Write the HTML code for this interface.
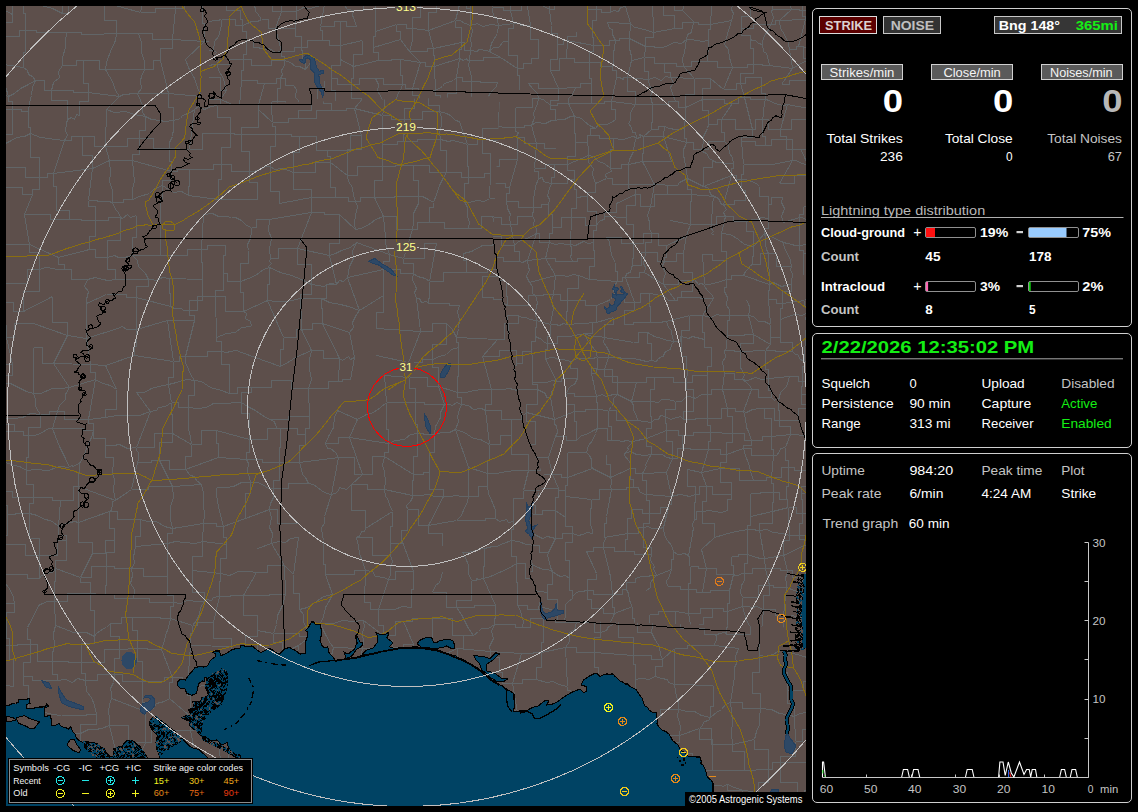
<!DOCTYPE html>
<html><head><meta charset="utf-8"><title>Lightning Map</title>
<style>
html,body{margin:0;padding:0;background:#000;overflow:hidden}
svg{display:block;font-family:"Liberation Sans",sans-serif}
</style></head><body>
<svg width="1138" height="812" viewBox="0 0 1138 812">
<rect width="1138" height="812" fill="#000"/>
<defs><clipPath id="mc"><rect x="6" y="6" width="800" height="800"/></clipPath></defs>
<g clip-path="url(#mc)" shape-rendering="crispEdges">
<rect x="6" y="6" width="800" height="800" fill="#5d4f4b"/>
<clipPath id="cf"><path d="M209.0,6.0 L806.0,6.0 L806.0,628.0 L547.0,620.0 L541.0,604.0 L530.0,578.0 L533.0,540.0 L532.0,503.0 L545.8,481.0 L531.0,446.5 L516.0,382.0 L493.0,239.0 L500.0,96.0 L209.0,105.0 Z"/></clipPath>
<clipPath id="cc"><path clip-rule="evenodd" d="M0,0H812V812H0Z M209.0,6.0 L806.0,6.0 L806.0,628.0 L547.0,620.0 L541.0,604.0 L530.0,578.0 L533.0,540.0 L532.0,503.0 L545.8,481.0 L531.0,446.5 L516.0,382.0 L493.0,239.0 L500.0,96.0 L209.0,105.0 Z"/></clipPath>
<path clip-path="url(#cc)" d="M-18.5,-2.5L-11.5,0.5L-1.5,5.5L3.5,9.5L12.5,14.5M-29.5,85.5L8.5,96.5M-29.5,106.5L-7.5,106.5L-7.5,109.5L12.5,109.5M-22.5,147.5L-10.5,147.5L-10.5,144.5L3.5,144.5M-14.5,271.5L-10.5,274.5L-3.5,278.5L0.5,278.5L3.5,283.5M-24.5,336.5L-1.5,336.5L-1.5,337.5L6.5,337.5M-27.5,358.5L-3.5,358.5L-3.5,364.5L12.5,364.5M-18.5,381.5L-12.5,382.5L-9.5,381.5L-3.5,381.5L1.5,382.5M-20.5,402.5L3.5,418.5M-29.5,432.5L-16.5,432.5L-16.5,431.5L14.5,431.5M-24.5,493.5L-9.5,493.5L-9.5,491.5L0.5,491.5M-25.5,574.5L3.5,574.5M-20.5,607.5L4.5,607.5L4.5,603.5L14.5,603.5M-16.5,622.5L-3.5,622.5L-3.5,629.5L6.5,629.5M-11.5,646.5L1.5,646.5L1.5,645.5L9.5,645.5M-22.5,685.5L-14.5,684.5L-4.5,684.5L6.5,685.5L13.5,686.5M-27.5,707.5L-16.5,707.5L-16.5,713.5L13.5,713.5M-29.5,738.5L-17.5,738.5L-17.5,733.5L3.5,733.5M-17.5,817.5L-14.5,815.5L-7.5,813.5L-2.5,810.5L0.5,809.5M7.5,-21.5L7.5,-10.5L12.5,-10.5L12.5,14.5M12.5,14.5L12.5,3.5L23.5,3.5L23.5,0.5M12.5,14.5L12.5,22.5L5.5,22.5L5.5,36.5M5.5,36.5L19.5,36.5L19.5,30.5L25.5,30.5M-2.5,63.5L23.5,67.5M-2.5,63.5L0.5,72.5L3.5,79.5L5.5,86.5L8.5,96.5M8.5,96.5L14.5,93.5L20.5,88.5L28.5,84.5L35.5,80.5M8.5,96.5L8.5,101.5L12.5,101.5L12.5,109.5M12.5,109.5L21.5,109.5L21.5,111.5L28.5,111.5M12.5,109.5L12.5,134.5L3.5,134.5L3.5,144.5M3.5,144.5L11.5,140.5L16.5,137.5L24.5,136.5L30.5,133.5M3.5,144.5L3.5,157.5L-3.5,157.5L-3.5,167.5M-3.5,167.5L25.5,167.5L25.5,177.5L39.5,177.5M0.5,187.5L22.5,187.5L22.5,194.5L32.5,194.5M-1.5,244.5L11.5,244.5L11.5,244.5L29.5,244.5M-1.5,244.5L-1.5,259.5L3.5,259.5L3.5,283.5M3.5,283.5L27.5,283.5L27.5,269.5L39.5,269.5M3.5,283.5L-2.5,302.5M-2.5,302.5L13.5,302.5L13.5,311.5L23.5,311.5M-2.5,302.5L-2.5,325.5L6.5,325.5L6.5,337.5M6.5,337.5L14.5,337.5L14.5,323.5L33.5,323.5M6.5,337.5L12.5,364.5M12.5,364.5L12.5,375.5L1.5,375.5L1.5,382.5M1.5,382.5L10.5,383.5L18.5,387.5L26.5,391.5L33.5,393.5M1.5,382.5L1.5,408.5L3.5,408.5L3.5,418.5M3.5,418.5L13.5,418.5L22.5,417.5L30.5,413.5L40.5,414.5M3.5,418.5L3.5,424.5L14.5,424.5L14.5,431.5M14.5,431.5L23.5,431.5L23.5,435.5L28.5,435.5M0.5,459.5L5.5,462.5L14.5,465.5L19.5,466.5L26.5,470.5M0.5,491.5L12.5,491.5L12.5,497.5L33.5,497.5M0.5,491.5L0.5,505.5L7.5,505.5L7.5,514.5M7.5,514.5L15.5,514.5L15.5,513.5L29.5,513.5M7.5,514.5L7.5,535.5L-3.5,535.5L-3.5,544.5M-3.5,544.5L25.5,544.5L25.5,555.5L39.5,555.5M3.5,574.5L27.5,574.5L27.5,578.5L39.5,578.5M3.5,574.5L4.5,582.5L9.5,588.5L13.5,597.5L14.5,603.5M14.5,603.5L14.5,612.5L6.5,612.5L6.5,629.5M6.5,629.5L6.5,638.5L9.5,638.5L9.5,645.5M9.5,645.5L17.5,645.5L17.5,644.5L30.5,644.5M9.5,645.5L9.5,659.5L13.5,659.5L13.5,686.5M13.5,713.5L15.5,714.5L22.5,713.5L22.5,712.5L28.5,711.5M13.5,713.5L13.5,723.5L3.5,723.5L3.5,733.5M3.5,733.5L-1.5,764.5M-1.5,764.5L9.5,765.5L18.5,766.5L28.5,770.5L41.5,771.5M-2.5,780.5L10.5,780.5L20.5,784.5L31.5,784.5L41.5,786.5M-2.5,780.5L-2.5,787.5L0.5,794.5L0.5,801.5L0.5,809.5M23.5,0.5L33.5,2.5L41.5,5.5L52.5,8.5L62.5,13.5M23.5,0.5L23.5,13.5L25.5,13.5L25.5,30.5M25.5,30.5L36.5,30.5L36.5,32.5L66.5,32.5M25.5,30.5L25.5,52.5L23.5,52.5L23.5,67.5M23.5,67.5L27.5,70.5L28.5,74.5L32.5,76.5L35.5,80.5M35.5,80.5L44.5,80.5L44.5,90.5L51.5,90.5M35.5,80.5L32.5,87.5L31.5,95.5L29.5,102.5L28.5,111.5M28.5,111.5L28.5,127.5L30.5,127.5L30.5,133.5M30.5,133.5L40.5,137.5L48.5,138.5L54.5,139.5L64.5,140.5M30.5,133.5L30.5,157.5L39.5,157.5L39.5,177.5M39.5,177.5L47.5,177.5L47.5,173.5L53.5,173.5M39.5,177.5L39.5,189.5L32.5,189.5L32.5,194.5M32.5,194.5L24.5,214.5M24.5,214.5L50.5,214.5L50.5,219.5L69.5,219.5M24.5,214.5L29.5,244.5M29.5,244.5L58.5,257.5M29.5,244.5L29.5,252.5L39.5,252.5L39.5,269.5M39.5,269.5L45.5,267.5L53.5,268.5L56.5,269.5L64.5,269.5M39.5,269.5L39.5,291.5L23.5,291.5L23.5,311.5M23.5,311.5L52.5,296.5M33.5,323.5L67.5,335.5M33.5,347.5L42.5,347.5L42.5,363.5L53.5,363.5M33.5,347.5L33.5,393.5M33.5,393.5L40.5,393.5L52.5,388.5L61.5,388.5L69.5,387.5M33.5,393.5L35.5,399.5L35.5,405.5L36.5,408.5L40.5,414.5M40.5,414.5L49.5,414.5L49.5,411.5L57.5,411.5M40.5,414.5L40.5,427.5L28.5,427.5L28.5,435.5M28.5,435.5L34.5,435.5L40.5,433.5L48.5,428.5L52.5,428.5M28.5,435.5L28.5,457.5L26.5,457.5L26.5,470.5M26.5,470.5L35.5,469.5L48.5,470.5L59.5,466.5L69.5,467.5M26.5,470.5L26.5,484.5L33.5,484.5L33.5,497.5M33.5,497.5L52.5,497.5L52.5,500.5L60.5,500.5M33.5,497.5L33.5,503.5L29.5,503.5L29.5,513.5M29.5,513.5L37.5,515.5L42.5,518.5L52.5,521.5L58.5,526.5M29.5,513.5L29.5,538.5L39.5,538.5L39.5,555.5M39.5,555.5L57.5,555.5L57.5,540.5L66.5,540.5M39.5,555.5L39.5,578.5M39.5,578.5L41.5,575.5L46.5,573.5L52.5,572.5L55.5,568.5M39.5,604.5L43.5,603.5L46.5,601.5L52.5,601.5L54.5,601.5M39.5,604.5L27.5,627.5M27.5,627.5L27.5,639.5L30.5,639.5L30.5,644.5M30.5,644.5L37.5,644.5L37.5,661.5L52.5,661.5M30.5,644.5L30.5,662.5L23.5,662.5L23.5,676.5M23.5,676.5L32.5,676.5L32.5,680.5L57.5,680.5M23.5,676.5L23.5,685.5L28.5,685.5L28.5,711.5M28.5,711.5L34.5,711.5L45.5,712.5L52.5,714.5L61.5,715.5M28.5,711.5L41.5,733.5M41.5,733.5L47.5,734.5L50.5,739.5L55.5,741.5L58.5,743.5M41.5,733.5L41.5,771.5M41.5,771.5L53.5,771.5L53.5,762.5L60.5,762.5M41.5,771.5L42.5,774.5L42.5,779.5L41.5,783.5L41.5,786.5M41.5,786.5L60.5,779.5M41.5,786.5L41.5,796.5L27.5,796.5L27.5,810.5M27.5,810.5L35.5,809.5L42.5,809.5L50.5,808.5L58.5,809.5M54.5,-26.5L54.5,-7.5L62.5,-7.5L62.5,13.5M62.5,13.5L68.5,13.5L68.5,5.5L80.5,5.5M66.5,32.5L81.5,32.5L81.5,34.5L91.5,34.5M66.5,32.5L65.5,42.5L65.5,47.5L62.5,57.5L62.5,65.5M62.5,65.5L76.5,65.5L76.5,60.5L83.5,60.5M62.5,65.5L58.5,71.5L59.5,77.5L53.5,82.5L51.5,90.5M51.5,90.5L73.5,90.5L73.5,92.5L88.5,92.5M51.5,90.5L51.5,100.5L67.5,100.5L67.5,119.5M67.5,119.5L71.5,117.5L74.5,119.5L76.5,114.5L79.5,115.5M67.5,119.5L66.5,123.5L65.5,130.5L67.5,135.5L64.5,140.5M64.5,140.5L71.5,140.5L71.5,136.5L82.5,136.5M64.5,140.5L53.5,173.5M53.5,173.5L92.5,168.5M53.5,173.5L53.5,186.5L56.5,186.5L56.5,200.5M56.5,200.5L56.5,210.5L69.5,210.5L69.5,219.5M69.5,219.5L81.5,219.5L81.5,220.5L95.5,220.5M58.5,257.5L89.5,249.5M58.5,257.5L58.5,264.5L64.5,264.5L64.5,269.5M64.5,269.5L71.5,269.5L71.5,279.5L87.5,279.5M52.5,296.5L52.5,322.5L67.5,322.5L67.5,335.5M67.5,335.5L86.5,338.5M67.5,335.5L53.5,363.5M53.5,363.5L90.5,364.5M53.5,363.5L69.5,387.5M69.5,387.5L95.5,379.5M69.5,387.5L65.5,394.5L65.5,399.5L59.5,405.5L57.5,411.5M57.5,411.5L64.5,411.5L64.5,419.5L88.5,419.5M57.5,411.5L52.5,428.5M52.5,428.5L83.5,428.5L83.5,430.5L93.5,430.5M52.5,428.5L55.5,436.5L59.5,446.5L65.5,458.5L69.5,467.5M69.5,467.5L71.5,465.5L73.5,466.5L78.5,463.5L79.5,463.5M60.5,500.5L73.5,500.5L73.5,486.5L78.5,486.5M60.5,500.5L58.5,526.5M58.5,526.5L63.5,524.5L70.5,522.5L74.5,521.5L78.5,522.5M58.5,526.5L58.5,535.5L66.5,535.5L66.5,540.5M66.5,540.5L66.5,560.5L55.5,560.5L55.5,568.5M55.5,568.5L80.5,577.5M55.5,568.5L55.5,581.5L54.5,581.5L54.5,601.5M54.5,601.5L67.5,601.5L67.5,593.5L90.5,593.5M54.5,601.5L55.5,625.5M55.5,625.5L63.5,628.5L73.5,632.5L86.5,632.5L94.5,636.5M55.5,625.5L53.5,633.5L54.5,645.5L52.5,653.5L52.5,661.5M52.5,661.5L68.5,661.5L68.5,662.5L81.5,662.5M52.5,661.5L52.5,674.5L57.5,674.5L57.5,680.5M57.5,680.5L65.5,679.5L72.5,682.5L77.5,678.5L85.5,680.5M61.5,715.5L86.5,715.5L86.5,714.5L96.5,714.5M58.5,743.5L65.5,743.5L65.5,733.5L80.5,733.5M58.5,743.5L58.5,751.5L60.5,751.5L60.5,762.5M60.5,762.5L87.5,758.5M60.5,762.5L58.5,765.5L61.5,771.5L58.5,775.5L60.5,779.5M60.5,779.5L66.5,779.5L66.5,785.5L81.5,785.5M58.5,809.5L81.5,809.5L81.5,806.5L91.5,806.5M77.5,-15.5L77.5,-5.5L80.5,-5.5L80.5,5.5M80.5,5.5L104.5,2.5M91.5,34.5L116.5,33.5M83.5,60.5L99.5,60.5L99.5,69.5L105.5,69.5M83.5,60.5L83.5,83.5L88.5,83.5L88.5,92.5M88.5,92.5L119.5,96.5M88.5,92.5L88.5,101.5L79.5,101.5L79.5,115.5M82.5,136.5L94.5,136.5L94.5,146.5L105.5,146.5M82.5,136.5L82.5,155.5L92.5,155.5L92.5,168.5M92.5,168.5L109.5,160.5M92.5,168.5L88.5,200.5M88.5,200.5L95.5,200.5L99.5,201.5L108.5,201.5L112.5,202.5M88.5,200.5L88.5,206.5L95.5,206.5L95.5,220.5M95.5,220.5L108.5,220.5L108.5,217.5L120.5,217.5M95.5,220.5L95.5,236.5L89.5,236.5L89.5,249.5M89.5,249.5L95.5,249.5L95.5,257.5L107.5,257.5M87.5,279.5L95.5,277.5L102.5,279.5L108.5,280.5L115.5,279.5M87.5,279.5L84.5,286.5L88.5,291.5L86.5,299.5L86.5,303.5M86.5,303.5L106.5,294.5M86.5,303.5L86.5,324.5L86.5,324.5L86.5,338.5M86.5,338.5L117.5,328.5M86.5,338.5L90.5,364.5M90.5,364.5L105.5,365.5M90.5,364.5L90.5,372.5L95.5,372.5L95.5,379.5M95.5,379.5L100.5,382.5L106.5,384.5L110.5,385.5L116.5,389.5M95.5,379.5L88.5,419.5M88.5,419.5L105.5,417.5M88.5,419.5L88.5,423.5L93.5,423.5L93.5,430.5M93.5,430.5L93.5,438.5L105.5,438.5L105.5,445.5M93.5,430.5L91.5,437.5L86.5,448.5L84.5,454.5L79.5,463.5M79.5,463.5L79.5,473.5L78.5,473.5L78.5,486.5M78.5,486.5L115.5,500.5M78.5,486.5L78.5,502.5L78.5,502.5L78.5,522.5M78.5,522.5L109.5,511.5M78.5,522.5L78.5,542.5L92.5,542.5L92.5,553.5M92.5,553.5L105.5,553.5L105.5,540.5L114.5,540.5M92.5,553.5L80.5,577.5M80.5,577.5L91.5,577.5L91.5,566.5L106.5,566.5M80.5,577.5L80.5,582.5L90.5,582.5L90.5,593.5M90.5,593.5L95.5,593.5L95.5,594.5L105.5,594.5M90.5,593.5L90.5,610.5L94.5,610.5L94.5,636.5M94.5,636.5L96.5,633.5L103.5,628.5L106.5,627.5L110.5,623.5M94.5,636.5L94.5,643.5L81.5,643.5L81.5,662.5M81.5,662.5L104.5,662.5L104.5,649.5L119.5,649.5M81.5,662.5L81.5,673.5L85.5,673.5L85.5,680.5M85.5,680.5L97.5,680.5L97.5,674.5L114.5,674.5M85.5,680.5L86.5,691.5L91.5,697.5L94.5,705.5L96.5,714.5M96.5,714.5L96.5,724.5L80.5,724.5L80.5,733.5M80.5,733.5L88.5,729.5L95.5,729.5L101.5,728.5L109.5,725.5M80.5,733.5L80.5,751.5L87.5,751.5L87.5,758.5M87.5,758.5L103.5,758.5L103.5,762.5L118.5,762.5M87.5,758.5L81.5,785.5M81.5,785.5L88.5,785.5L88.5,788.5L107.5,788.5M81.5,785.5L91.5,806.5M91.5,806.5L97.5,805.5L105.5,808.5L113.5,806.5L122.5,808.5M104.5,2.5L140.5,12.5M104.5,2.5L104.5,20.5L116.5,20.5L116.5,33.5M116.5,33.5L138.5,33.5M116.5,33.5L115.5,40.5L110.5,51.5L106.5,62.5L105.5,69.5M105.5,69.5L121.5,69.5L121.5,69.5L144.5,69.5M105.5,69.5L109.5,76.5L112.5,81.5L115.5,90.5L119.5,96.5M119.5,96.5L123.5,94.5L126.5,94.5L132.5,93.5L137.5,93.5M119.5,96.5L106.5,109.5M106.5,109.5L114.5,112.5L125.5,111.5L134.5,114.5L145.5,116.5M106.5,109.5L105.5,146.5M105.5,146.5L127.5,146.5L127.5,138.5L139.5,138.5M105.5,146.5L109.5,160.5M109.5,160.5L132.5,160.5M109.5,160.5L110.5,172.5L109.5,181.5L112.5,190.5L112.5,202.5M112.5,202.5L123.5,202.5L123.5,199.5L132.5,199.5M112.5,202.5L114.5,207.5L116.5,210.5L118.5,212.5L120.5,217.5M120.5,217.5L122.5,218.5L127.5,214.5L130.5,217.5L136.5,215.5M120.5,217.5L120.5,240.5L107.5,240.5L107.5,257.5M107.5,257.5L114.5,255.5L118.5,257.5L124.5,257.5L132.5,255.5M107.5,257.5L107.5,269.5L115.5,269.5L115.5,279.5M115.5,279.5L148.5,279.5M106.5,294.5L126.5,294.5L126.5,297.5L136.5,297.5M117.5,328.5L122.5,326.5L126.5,329.5L131.5,329.5L136.5,329.5M105.5,365.5L134.5,355.5M105.5,365.5L116.5,389.5M116.5,389.5L116.5,409.5L105.5,409.5L105.5,417.5M105.5,417.5L117.5,415.5L127.5,415.5L139.5,415.5L150.5,411.5M105.5,445.5L113.5,445.5L119.5,444.5L127.5,448.5L136.5,447.5M105.5,445.5L105.5,457.5L113.5,457.5L113.5,461.5M113.5,461.5L112.5,473.5L114.5,479.5L113.5,490.5L115.5,500.5M115.5,500.5L131.5,489.5M115.5,500.5L112.5,501.5L112.5,504.5L111.5,510.5L109.5,511.5M109.5,511.5L117.5,511.5L117.5,519.5L140.5,519.5M109.5,511.5L109.5,528.5L114.5,528.5L114.5,540.5M114.5,540.5L114.5,552.5L106.5,552.5L106.5,566.5M106.5,566.5L114.5,566.5L114.5,568.5L131.5,568.5M106.5,566.5L106.5,585.5L105.5,585.5L105.5,594.5M105.5,594.5L114.5,594.5L114.5,598.5L133.5,598.5M110.5,623.5L121.5,623.5L121.5,617.5L132.5,617.5M110.5,623.5L110.5,636.5L119.5,636.5L119.5,649.5M119.5,649.5L137.5,648.5M119.5,649.5L119.5,658.5L114.5,658.5L114.5,674.5M114.5,674.5L122.5,674.5L122.5,681.5L142.5,681.5M114.5,674.5L113.5,682.5L110.5,688.5L111.5,693.5L111.5,698.5M111.5,698.5L145.5,711.5M111.5,698.5L109.5,704.5L108.5,711.5L109.5,718.5L109.5,725.5M109.5,725.5L128.5,725.5L128.5,742.5L145.5,742.5M109.5,725.5L118.5,762.5M118.5,762.5L138.5,758.5M107.5,788.5L150.5,782.5M107.5,788.5L107.5,799.5L122.5,799.5L122.5,808.5M122.5,808.5L127.5,812.5L133.5,815.5L137.5,817.5L145.5,818.5M147.5,-22.5L140.5,12.5M140.5,12.5L155.5,12.5L155.5,8.5L175.5,8.5M138.5,33.5L152.5,33.5L152.5,39.5L172.5,39.5M138.5,33.5L141.5,42.5L141.5,52.5L144.5,61.5L144.5,69.5M144.5,69.5L153.5,69.5L153.5,60.5L160.5,60.5M144.5,69.5L141.5,76.5L140.5,80.5L141.5,88.5L137.5,93.5M137.5,93.5L157.5,93.5L157.5,93.5L168.5,93.5M137.5,93.5L140.5,100.5L142.5,105.5L142.5,112.5L145.5,116.5M145.5,116.5L151.5,119.5L159.5,120.5L165.5,121.5L173.5,120.5M145.5,116.5L145.5,130.5L139.5,130.5L139.5,138.5M139.5,138.5L153.5,138.5L153.5,148.5L169.5,148.5M139.5,138.5L139.5,154.5L132.5,154.5L132.5,160.5M132.5,160.5L171.5,171.5M132.5,160.5L133.5,171.5L134.5,181.5L132.5,188.5L132.5,199.5M132.5,199.5L139.5,196.5L149.5,193.5L153.5,189.5L162.5,185.5M136.5,215.5L136.5,237.5L132.5,237.5L132.5,255.5M132.5,255.5L142.5,255.5L142.5,255.5L160.5,255.5M132.5,255.5L137.5,260.5L138.5,266.5L145.5,273.5L148.5,279.5M148.5,279.5L151.5,279.5L156.5,280.5L162.5,277.5L169.5,278.5M148.5,279.5L148.5,286.5L136.5,286.5L136.5,297.5M136.5,297.5L170.5,306.5M136.5,297.5L136.5,313.5L136.5,313.5L136.5,329.5M136.5,329.5L167.5,320.5M136.5,329.5L136.5,346.5L134.5,346.5L134.5,355.5M134.5,355.5L173.5,361.5M136.5,392.5L144.5,392.5L151.5,388.5L158.5,386.5L168.5,384.5M136.5,392.5L150.5,411.5M150.5,411.5L156.5,410.5L158.5,407.5L165.5,406.5L171.5,402.5M150.5,411.5L136.5,447.5M136.5,447.5L154.5,447.5L154.5,433.5L172.5,433.5M136.5,447.5L136.5,450.5L138.5,452.5L138.5,459.5L137.5,462.5M137.5,462.5L151.5,462.5L151.5,460.5L159.5,460.5M137.5,462.5L131.5,489.5M131.5,489.5L148.5,489.5L148.5,486.5L172.5,486.5M140.5,519.5L147.5,521.5L156.5,521.5L164.5,526.5L172.5,528.5M140.5,519.5L140.5,536.5L135.5,536.5L135.5,546.5M135.5,546.5L167.5,543.5M135.5,546.5L134.5,552.5L133.5,556.5L134.5,563.5L131.5,568.5M131.5,568.5L143.5,568.5L143.5,576.5L167.5,576.5M131.5,568.5L132.5,575.5L130.5,583.5L134.5,589.5L133.5,598.5M133.5,598.5L149.5,598.5L149.5,602.5L173.5,602.5M132.5,617.5L160.5,617.5L160.5,618.5L170.5,618.5M132.5,617.5L132.5,630.5L137.5,630.5L137.5,648.5M137.5,648.5L147.5,648.5L147.5,649.5L161.5,649.5M137.5,648.5L137.5,661.5L142.5,661.5L142.5,681.5M142.5,681.5L164.5,681.5L164.5,677.5L172.5,677.5M142.5,681.5L142.5,702.5L145.5,702.5L145.5,711.5M145.5,711.5L152.5,709.5L156.5,703.5L164.5,701.5L169.5,698.5M145.5,711.5L145.5,742.5M145.5,742.5L151.5,742.5L151.5,730.5L159.5,730.5M145.5,742.5L138.5,758.5M138.5,758.5L171.5,765.5M138.5,758.5L139.5,765.5L144.5,769.5L149.5,775.5L150.5,782.5M150.5,782.5L161.5,782.5L161.5,784.5L171.5,784.5M150.5,782.5L145.5,818.5M159.5,-14.5L159.5,-4.5L175.5,-4.5L175.5,8.5M175.5,8.5L184.5,8.5L184.5,0.5L202.5,0.5M175.5,8.5L172.5,39.5M172.5,39.5L204.5,41.5M172.5,39.5L172.5,48.5L160.5,48.5L160.5,60.5M160.5,60.5L168.5,93.5M168.5,93.5L201.5,96.5M168.5,93.5L168.5,107.5L173.5,107.5L173.5,120.5M173.5,120.5L180.5,118.5L182.5,115.5L190.5,112.5L194.5,109.5M173.5,120.5L173.5,128.5L172.5,136.5L169.5,142.5L169.5,148.5M169.5,148.5L189.5,149.5M169.5,148.5L169.5,161.5L171.5,161.5L171.5,171.5M171.5,171.5L177.5,171.5L177.5,169.5L189.5,169.5M171.5,171.5L171.5,180.5L162.5,180.5L162.5,185.5M162.5,185.5L168.5,189.5L173.5,192.5L181.5,191.5L188.5,195.5M162.5,185.5L162.5,198.5L160.5,198.5L160.5,219.5M160.5,219.5L160.5,255.5M160.5,255.5L187.5,255.5L187.5,249.5L201.5,249.5M169.5,278.5L202.5,279.5M169.5,278.5L169.5,293.5L170.5,293.5L170.5,306.5M170.5,306.5L174.5,308.5L181.5,308.5L183.5,310.5L189.5,310.5M167.5,320.5L175.5,320.5L175.5,320.5L194.5,320.5M167.5,320.5L173.5,361.5M173.5,361.5L179.5,361.5L179.5,356.5L185.5,356.5M173.5,361.5L173.5,377.5L168.5,377.5L168.5,384.5M168.5,384.5L176.5,382.5L182.5,380.5L187.5,379.5L194.5,380.5M168.5,384.5L171.5,402.5M171.5,402.5L178.5,402.5L178.5,407.5L188.5,407.5M171.5,402.5L171.5,414.5L172.5,414.5L172.5,433.5M172.5,433.5L191.5,444.5M172.5,433.5L172.5,442.5L159.5,442.5L159.5,460.5M159.5,460.5L169.5,460.5L169.5,469.5L185.5,469.5M159.5,460.5L172.5,486.5M172.5,486.5L201.5,484.5M172.5,486.5L173.5,497.5L170.5,506.5L170.5,519.5L172.5,528.5M172.5,528.5L203.5,523.5M172.5,528.5L172.5,533.5L167.5,533.5L167.5,543.5M167.5,543.5L175.5,541.5L184.5,542.5L195.5,543.5L202.5,541.5M167.5,543.5L167.5,553.5L167.5,553.5L167.5,576.5M167.5,576.5L167.5,595.5L173.5,595.5L173.5,602.5M173.5,602.5L180.5,603.5L187.5,600.5L197.5,601.5L204.5,601.5M173.5,602.5L173.5,606.5L170.5,606.5L170.5,618.5M170.5,618.5L192.5,625.5M170.5,618.5L168.5,627.5L165.5,635.5L164.5,640.5L161.5,649.5M161.5,649.5L172.5,677.5M172.5,677.5L182.5,677.5L182.5,687.5L187.5,687.5M172.5,677.5L172.5,682.5L169.5,682.5L169.5,698.5M169.5,698.5L190.5,716.5M159.5,730.5L190.5,730.5M159.5,730.5L159.5,750.5L171.5,750.5L171.5,765.5M171.5,765.5L188.5,765.5L188.5,755.5L195.5,755.5M171.5,765.5L171.5,776.5L171.5,776.5L171.5,784.5M171.5,784.5L171.5,801.5L168.5,801.5L168.5,815.5M202.5,0.5L219.5,0.5L219.5,6.5L230.5,6.5M202.5,0.5L202.5,23.5L204.5,23.5L204.5,41.5M204.5,41.5L211.5,41.5L211.5,24.5L226.5,24.5M204.5,41.5L185.5,59.5M185.5,59.5L188.5,67.5L194.5,78.5L197.5,87.5L201.5,96.5M194.5,109.5L198.5,106.5L204.5,109.5L210.5,106.5L217.5,105.5M194.5,109.5L189.5,149.5M189.5,149.5L202.5,149.5L202.5,133.5L230.5,133.5M189.5,169.5L213.5,169.5L213.5,164.5L221.5,164.5M189.5,169.5L189.5,186.5L188.5,186.5L188.5,195.5M188.5,195.5L218.5,199.5M203.5,214.5L212.5,213.5L218.5,216.5L225.5,216.5L231.5,217.5M203.5,214.5L201.5,249.5M201.5,249.5L207.5,249.5L207.5,245.5L225.5,245.5M201.5,249.5L201.5,262.5L202.5,262.5L202.5,279.5M202.5,279.5L202.5,300.5L189.5,300.5L189.5,310.5M189.5,310.5L197.5,310.5L197.5,296.5L215.5,296.5M189.5,310.5L189.5,315.5L194.5,315.5L194.5,320.5M194.5,320.5L185.5,356.5M185.5,356.5L207.5,356.5L207.5,351.5L221.5,351.5M185.5,356.5L185.5,362.5L188.5,369.5L190.5,374.5L194.5,380.5M194.5,380.5L201.5,381.5L210.5,387.5L221.5,390.5L229.5,393.5M194.5,380.5L194.5,395.5L188.5,395.5L188.5,407.5M188.5,407.5L197.5,408.5L206.5,407.5L213.5,403.5L221.5,403.5M188.5,407.5L188.5,418.5L188.5,428.5L190.5,436.5L191.5,444.5M191.5,444.5L201.5,444.5L201.5,430.5L216.5,430.5M191.5,444.5L191.5,456.5L185.5,456.5L185.5,469.5M185.5,469.5L218.5,457.5M185.5,469.5L190.5,475.5L194.5,476.5L196.5,480.5L201.5,484.5M201.5,484.5L203.5,493.5L203.5,504.5L204.5,514.5L203.5,523.5M203.5,523.5L216.5,523.5L216.5,526.5L223.5,526.5M203.5,523.5L202.5,541.5M202.5,541.5L226.5,544.5M202.5,541.5L202.5,556.5L192.5,556.5L192.5,570.5M192.5,570.5L220.5,573.5M192.5,570.5L192.5,592.5L204.5,592.5L204.5,601.5M204.5,601.5L206.5,599.5L211.5,600.5L213.5,597.5L219.5,596.5M204.5,601.5L200.5,607.5L199.5,614.5L196.5,620.5L192.5,625.5M192.5,625.5L197.5,625.5L197.5,622.5L213.5,622.5M192.5,625.5L192.5,633.5L190.5,633.5L190.5,645.5M190.5,645.5L231.5,646.5M190.5,645.5L187.5,687.5M187.5,687.5L222.5,683.5M187.5,687.5L187.5,695.5L190.5,695.5L190.5,716.5M190.5,716.5L190.5,720.5L190.5,720.5L190.5,730.5M190.5,730.5L197.5,729.5L204.5,728.5L209.5,729.5L217.5,730.5M190.5,730.5L195.5,755.5M195.5,755.5L220.5,760.5M192.5,797.5L218.5,797.5L218.5,795.5L230.5,795.5M202.5,822.5L220.5,822.5L220.5,806.5L229.5,806.5M224.5,-12.5L224.5,-6.5L230.5,-6.5L230.5,6.5M230.5,6.5L245.5,6.5L245.5,5.5L256.5,5.5M226.5,89.5L217.5,105.5M217.5,105.5L217.5,117.5L230.5,117.5L230.5,133.5M230.5,133.5L234.5,133.5L234.5,134.5L241.5,134.5M230.5,133.5L230.5,147.5L221.5,147.5L221.5,164.5M221.5,164.5L231.5,164.5L231.5,171.5L249.5,171.5M221.5,164.5L221.5,179.5L218.5,179.5L218.5,199.5M218.5,199.5L245.5,199.5L245.5,199.5L257.5,199.5M231.5,217.5L235.5,217.5L241.5,220.5L246.5,225.5L251.5,227.5M225.5,245.5L225.5,255.5L223.5,255.5L223.5,273.5M223.5,273.5L227.5,273.5L227.5,281.5L240.5,281.5M223.5,273.5L223.5,290.5L215.5,290.5L215.5,296.5M215.5,296.5L225.5,296.5L225.5,311.5L243.5,311.5M215.5,296.5L216.5,337.5M216.5,337.5L226.5,333.5L235.5,332.5L241.5,327.5L251.5,326.5M216.5,337.5L216.5,341.5L221.5,341.5L221.5,351.5M221.5,351.5L226.5,352.5L230.5,351.5L236.5,350.5L241.5,352.5M221.5,351.5L221.5,364.5L229.5,364.5L229.5,393.5M229.5,393.5L237.5,393.5L237.5,387.5L251.5,387.5M221.5,403.5L241.5,402.5M216.5,430.5L249.5,439.5M216.5,430.5L216.5,443.5L218.5,443.5L218.5,457.5M218.5,457.5L246.5,459.5M216.5,487.5L226.5,487.5L233.5,486.5L241.5,482.5L250.5,482.5M216.5,487.5L216.5,495.5L218.5,506.5L220.5,515.5L223.5,526.5M223.5,526.5L245.5,518.5M223.5,526.5L223.5,537.5L226.5,537.5L226.5,544.5M226.5,544.5L226.5,558.5L220.5,558.5L220.5,573.5M220.5,573.5L229.5,575.5L238.5,571.5L248.5,571.5L256.5,572.5M220.5,573.5L220.5,581.5L219.5,581.5L219.5,596.5M219.5,596.5L230.5,596.5L230.5,595.5L243.5,595.5M219.5,596.5L213.5,622.5M213.5,622.5L213.5,638.5L231.5,638.5L231.5,646.5M231.5,646.5L231.5,664.5L222.5,664.5L222.5,683.5M222.5,683.5L248.5,684.5M229.5,702.5L242.5,702.5L242.5,703.5L247.5,703.5M217.5,730.5L220.5,760.5M220.5,760.5L228.5,760.5L228.5,752.5L243.5,752.5M220.5,760.5L230.5,795.5M230.5,795.5L241.5,795.5L241.5,787.5L245.5,787.5M230.5,795.5L232.5,797.5L231.5,800.5L227.5,805.5L229.5,806.5M239.5,-16.5L239.5,0.5L256.5,0.5L256.5,5.5M256.5,5.5L266.5,5.5L266.5,0.5L276.5,0.5M256.5,5.5L255.5,9.5L252.5,13.5L252.5,19.5L250.5,23.5M255.5,93.5L255.5,101.5L258.5,101.5L258.5,109.5M258.5,109.5L272.5,122.5M258.5,109.5L258.5,127.5L241.5,127.5L241.5,134.5M241.5,134.5L257.5,134.5L257.5,134.5L275.5,134.5M241.5,134.5L241.5,151.5L249.5,151.5L249.5,171.5M249.5,171.5L253.5,171.5L259.5,169.5L266.5,166.5L270.5,166.5M249.5,171.5L249.5,182.5L257.5,182.5L257.5,199.5M251.5,227.5L256.5,227.5L256.5,219.5L269.5,219.5M251.5,227.5L251.5,232.5L250.5,238.5L247.5,244.5L248.5,250.5M248.5,250.5L248.5,263.5L240.5,263.5L240.5,281.5M240.5,281.5L248.5,278.5L255.5,275.5L263.5,269.5L269.5,267.5M240.5,281.5L240.5,292.5L243.5,292.5L243.5,311.5M243.5,311.5L267.5,300.5M243.5,311.5L246.5,313.5L245.5,318.5L250.5,321.5L251.5,326.5M241.5,352.5L280.5,366.5M251.5,387.5L271.5,387.5L271.5,380.5L284.5,380.5M251.5,387.5L251.5,392.5L241.5,392.5L241.5,402.5M241.5,402.5L247.5,406.5L255.5,410.5L262.5,415.5L269.5,419.5M241.5,402.5L241.5,413.5L249.5,413.5L249.5,439.5M249.5,439.5L267.5,439.5L267.5,428.5L280.5,428.5M249.5,439.5L249.5,452.5L246.5,452.5L246.5,459.5M246.5,459.5L262.5,459.5L262.5,462.5L279.5,462.5M246.5,459.5L248.5,463.5L247.5,471.5L249.5,477.5L250.5,482.5M250.5,482.5L257.5,482.5L262.5,484.5L268.5,488.5L273.5,488.5M250.5,482.5L250.5,493.5L245.5,493.5L245.5,518.5M245.5,518.5L269.5,509.5M257.5,548.5L271.5,543.5M256.5,572.5L267.5,572.5L267.5,565.5L284.5,565.5M256.5,572.5L243.5,595.5M243.5,595.5L269.5,595.5L269.5,594.5L285.5,594.5M243.5,595.5L243.5,615.5L257.5,615.5L257.5,630.5M257.5,630.5L273.5,633.5M257.5,630.5L257.5,636.5L245.5,636.5L245.5,644.5M245.5,644.5L257.5,644.5L257.5,652.5L282.5,652.5M245.5,644.5L247.5,655.5L248.5,665.5L247.5,673.5L248.5,684.5M248.5,684.5L259.5,684.5L259.5,680.5L267.5,680.5M247.5,703.5L247.5,731.5L252.5,731.5L252.5,743.5M252.5,743.5L258.5,743.5L258.5,732.5L270.5,732.5M243.5,752.5L283.5,752.5M243.5,752.5L245.5,787.5M245.5,787.5L251.5,787.5L259.5,791.5L266.5,793.5L274.5,795.5M245.5,787.5L245.5,798.5L252.5,798.5L252.5,810.5M252.5,810.5L259.5,809.5L268.5,810.5L274.5,806.5L281.5,807.5M281.5,-16.5L281.5,-4.5L276.5,-4.5L276.5,0.5M276.5,0.5L293.5,0.5L293.5,1.5L311.5,1.5M276.5,0.5L276.5,8.5L285.5,8.5L285.5,29.5M270.5,92.5L272.5,122.5M272.5,122.5L288.5,122.5L288.5,118.5L298.5,118.5M272.5,122.5L272.5,126.5L275.5,126.5L275.5,134.5M275.5,134.5L291.5,134.5L291.5,136.5L299.5,136.5M275.5,134.5L275.5,146.5L270.5,146.5L270.5,166.5M270.5,166.5L274.5,169.5L281.5,168.5L288.5,170.5L293.5,172.5M270.5,166.5L270.5,191.5L279.5,191.5L279.5,203.5M279.5,203.5L311.5,197.5M269.5,219.5L311.5,212.5M269.5,219.5L268.5,230.5L271.5,238.5L269.5,248.5L270.5,258.5M270.5,258.5L278.5,258.5L278.5,248.5L297.5,248.5M270.5,258.5L269.5,261.5L271.5,263.5L268.5,266.5L269.5,267.5M269.5,267.5L280.5,272.5L291.5,275.5L301.5,279.5L311.5,284.5M269.5,267.5L269.5,284.5L267.5,284.5L267.5,300.5M267.5,300.5L275.5,301.5L285.5,301.5L291.5,300.5L300.5,298.5M267.5,300.5L283.5,337.5M283.5,337.5L296.5,337.5L296.5,329.5L301.5,329.5M283.5,337.5L283.5,349.5L280.5,349.5L280.5,366.5M280.5,366.5L289.5,361.5L295.5,357.5L302.5,354.5L311.5,350.5M284.5,380.5L291.5,380.5L291.5,388.5L308.5,388.5M269.5,419.5L288.5,419.5L288.5,416.5L309.5,416.5M269.5,419.5L274.5,421.5L275.5,425.5L277.5,428.5L280.5,428.5M280.5,428.5L297.5,428.5L297.5,434.5L305.5,434.5M280.5,428.5L280.5,447.5L279.5,447.5L279.5,462.5M279.5,462.5L299.5,462.5M279.5,462.5L279.5,480.5L273.5,480.5L273.5,488.5M273.5,488.5L288.5,488.5L288.5,483.5L308.5,483.5M273.5,488.5L273.5,492.5L273.5,497.5L270.5,503.5L269.5,509.5M269.5,509.5L277.5,509.5L277.5,523.5L297.5,523.5M269.5,509.5L271.5,517.5L269.5,527.5L272.5,533.5L271.5,543.5M271.5,543.5L278.5,541.5L285.5,542.5L290.5,538.5L298.5,537.5M271.5,543.5L284.5,565.5M284.5,565.5L293.5,574.5M284.5,565.5L285.5,594.5M285.5,594.5L282.5,605.5L277.5,615.5L276.5,624.5L273.5,633.5M273.5,633.5L299.5,633.5L299.5,636.5L310.5,636.5M273.5,633.5L273.5,642.5L282.5,642.5L282.5,652.5M282.5,652.5L288.5,651.5L292.5,649.5L292.5,648.5L298.5,645.5M282.5,652.5L282.5,668.5L267.5,668.5L267.5,680.5M267.5,680.5L280.5,680.5L280.5,680.5L295.5,680.5M267.5,680.5L267.5,691.5L273.5,691.5L273.5,716.5M273.5,716.5L270.5,732.5M270.5,732.5L280.5,732.5L280.5,733.5L297.5,733.5M270.5,732.5L270.5,743.5L283.5,743.5L283.5,752.5M283.5,752.5L295.5,752.5L295.5,765.5L305.5,765.5M283.5,752.5L274.5,795.5M274.5,795.5L307.5,795.5M274.5,795.5L277.5,796.5L279.5,800.5L277.5,802.5L281.5,807.5M281.5,807.5L306.5,808.5M293.5,-29.5L311.5,1.5M311.5,1.5L323.5,1.5L323.5,3.5L331.5,3.5M311.5,1.5L311.5,14.5L307.5,14.5L307.5,40.5M311.5,89.5L311.5,110.5L298.5,110.5L298.5,118.5M298.5,118.5L316.5,118.5L316.5,110.5L331.5,110.5M299.5,136.5L316.5,136.5L316.5,150.5L327.5,150.5M299.5,136.5L299.5,152.5L293.5,152.5L293.5,172.5M293.5,172.5L315.5,172.5L315.5,162.5L330.5,162.5M293.5,172.5L293.5,189.5L311.5,189.5L311.5,197.5M311.5,197.5L327.5,197.5L327.5,197.5L335.5,197.5M311.5,197.5L311.5,206.5L311.5,206.5L311.5,212.5M311.5,212.5L324.5,212.5L324.5,214.5L339.5,214.5M311.5,212.5L297.5,248.5M297.5,248.5L329.5,255.5M297.5,248.5L297.5,264.5L311.5,264.5L311.5,284.5M311.5,284.5L318.5,285.5L323.5,286.5L330.5,283.5L336.5,284.5M311.5,284.5L311.5,294.5L300.5,294.5L300.5,298.5M300.5,298.5L309.5,298.5L309.5,298.5L321.5,298.5M300.5,298.5L300.5,311.5L301.5,311.5L301.5,329.5M301.5,329.5L312.5,329.5L312.5,323.5L322.5,323.5M301.5,329.5L311.5,350.5M311.5,350.5L323.5,350.5L323.5,358.5L339.5,358.5M311.5,350.5L309.5,359.5L309.5,369.5L311.5,379.5L308.5,388.5M308.5,388.5L328.5,388.5L328.5,381.5L338.5,381.5M308.5,388.5L309.5,416.5M309.5,416.5L309.5,428.5L305.5,428.5L305.5,434.5M305.5,434.5L305.5,445.5L299.5,445.5L299.5,462.5M299.5,462.5L338.5,457.5M299.5,462.5L301.5,469.5L302.5,474.5L305.5,477.5L308.5,483.5M308.5,483.5L313.5,484.5L321.5,490.5L326.5,493.5L331.5,494.5M298.5,537.5L293.5,574.5M293.5,574.5L293.5,593.5L299.5,593.5L299.5,609.5M299.5,609.5L307.5,607.5L316.5,601.5L323.5,596.5L332.5,594.5M299.5,609.5L303.5,614.5L303.5,621.5L307.5,630.5L310.5,636.5M310.5,636.5L298.5,645.5M298.5,645.5L297.5,654.5L298.5,663.5L295.5,671.5L295.5,680.5M295.5,680.5L304.5,679.5L309.5,676.5L318.5,677.5L326.5,675.5M307.5,706.5L314.5,705.5L322.5,707.5L329.5,708.5L335.5,708.5M307.5,706.5L307.5,726.5L297.5,726.5L297.5,733.5M297.5,733.5L304.5,731.5L309.5,729.5L317.5,729.5L321.5,727.5M297.5,733.5L301.5,742.5L300.5,750.5L302.5,757.5L305.5,765.5M305.5,765.5L305.5,777.5L307.5,777.5L307.5,795.5M307.5,795.5L325.5,795.5L325.5,781.5L332.5,781.5M307.5,795.5L307.5,803.5L306.5,803.5L306.5,808.5M306.5,808.5L310.5,811.5L316.5,812.5L320.5,815.5L323.5,819.5M336.5,-25.5L331.5,3.5M331.5,3.5L353.5,14.5M331.5,3.5L331.5,15.5L334.5,15.5L334.5,27.5M323.5,94.5L323.5,103.5L331.5,103.5L331.5,110.5M331.5,110.5L346.5,110.5L346.5,108.5L354.5,108.5M327.5,150.5L350.5,150.5L350.5,135.5L361.5,135.5M327.5,150.5L327.5,156.5L330.5,156.5L330.5,162.5M330.5,162.5L347.5,175.5M330.5,162.5L330.5,187.5L335.5,187.5L335.5,197.5M335.5,197.5L348.5,197.5L348.5,201.5L355.5,201.5M339.5,214.5L355.5,229.5M339.5,214.5L339.5,243.5L329.5,243.5L329.5,255.5M329.5,255.5L335.5,253.5L341.5,250.5L350.5,247.5L356.5,242.5M329.5,255.5L336.5,284.5M336.5,284.5L339.5,280.5L343.5,281.5L345.5,279.5L347.5,277.5M336.5,284.5L326.5,284.5L326.5,298.5L321.5,298.5M321.5,298.5L329.5,302.5L340.5,304.5L348.5,306.5L359.5,310.5M321.5,298.5L321.5,308.5L322.5,308.5L322.5,323.5M322.5,323.5L349.5,332.5M322.5,323.5L339.5,358.5M339.5,358.5L342.5,360.5L348.5,356.5L350.5,359.5L354.5,357.5M339.5,358.5L338.5,381.5M338.5,381.5L342.5,381.5L342.5,379.5L350.5,379.5M337.5,410.5L357.5,419.5M337.5,410.5L334.5,417.5L333.5,427.5L328.5,436.5L325.5,443.5M325.5,443.5L338.5,443.5L338.5,437.5L349.5,437.5M325.5,443.5L327.5,448.5L330.5,448.5L335.5,452.5L338.5,457.5M338.5,457.5L354.5,457.5L354.5,474.5L362.5,474.5M338.5,457.5L331.5,494.5M331.5,494.5L337.5,492.5L339.5,487.5L346.5,489.5L351.5,484.5M331.5,494.5L324.5,516.5M324.5,516.5L324.5,523.5L321.5,527.5L322.5,535.5L323.5,540.5M323.5,540.5L323.5,564.5L325.5,564.5L325.5,574.5M325.5,574.5L354.5,574.5L354.5,570.5L365.5,570.5M325.5,574.5L332.5,594.5M332.5,594.5L328.5,602.5L325.5,607.5L323.5,616.5L320.5,623.5M320.5,623.5L333.5,623.5L342.5,620.5L353.5,621.5L363.5,620.5M320.5,623.5L322.5,628.5L325.5,634.5L330.5,643.5L333.5,647.5M333.5,647.5L362.5,648.5M333.5,647.5L326.5,675.5M326.5,675.5L355.5,687.5M335.5,708.5L335.5,720.5L321.5,720.5L321.5,727.5M321.5,727.5L327.5,727.5L336.5,729.5L343.5,732.5L351.5,733.5M321.5,727.5L327.5,762.5M327.5,762.5L342.5,762.5L342.5,759.5L357.5,759.5M327.5,762.5L332.5,781.5M332.5,781.5L337.5,781.5L337.5,784.5L349.5,784.5M332.5,781.5L332.5,803.5L323.5,803.5L323.5,819.5M355.5,-25.5L355.5,3.5L353.5,3.5L353.5,14.5M353.5,14.5L365.5,14.5L365.5,-2.5L389.5,-2.5M364.5,96.5L354.5,108.5M354.5,108.5L382.5,115.5M354.5,108.5L361.5,135.5M361.5,135.5L361.5,149.5L347.5,149.5L347.5,175.5M347.5,175.5L357.5,175.5L357.5,166.5L382.5,166.5M347.5,175.5L348.5,181.5L352.5,187.5L353.5,195.5L355.5,201.5M355.5,201.5L360.5,201.5L360.5,197.5L374.5,197.5M355.5,201.5L357.5,206.5L355.5,215.5L354.5,223.5L355.5,229.5M355.5,229.5L361.5,228.5L370.5,223.5L375.5,219.5L383.5,216.5M356.5,242.5L389.5,254.5M356.5,242.5L352.5,251.5L353.5,258.5L349.5,266.5L347.5,277.5M347.5,277.5L383.5,269.5M347.5,277.5L359.5,310.5M359.5,310.5L383.5,295.5M359.5,310.5L356.5,314.5L352.5,322.5L353.5,327.5L349.5,332.5M349.5,332.5L354.5,357.5M354.5,357.5L350.5,379.5M357.5,419.5L366.5,414.5L373.5,412.5L380.5,407.5L386.5,402.5M357.5,419.5L349.5,437.5M349.5,437.5L388.5,443.5M349.5,437.5L362.5,474.5M362.5,474.5L372.5,474.5L372.5,456.5L384.5,456.5M362.5,474.5L351.5,484.5M351.5,484.5L367.5,484.5L367.5,489.5L384.5,489.5M351.5,484.5L351.5,510.5L365.5,510.5L365.5,528.5M365.5,528.5L392.5,511.5M365.5,528.5L364.5,531.5L361.5,531.5L360.5,535.5L356.5,537.5M356.5,537.5L372.5,537.5L372.5,555.5L390.5,555.5M356.5,537.5L358.5,546.5L359.5,553.5L362.5,561.5L365.5,570.5M365.5,570.5L372.5,571.5L375.5,576.5L383.5,577.5L388.5,579.5M365.5,570.5L364.5,602.5M364.5,602.5L370.5,602.5L370.5,609.5L378.5,609.5M363.5,620.5L383.5,635.5M363.5,620.5L364.5,626.5L362.5,632.5L363.5,642.5L362.5,648.5M362.5,648.5L373.5,648.5L373.5,647.5L392.5,647.5M362.5,648.5L355.5,687.5M355.5,687.5L365.5,687.5L372.5,687.5L382.5,687.5L389.5,689.5M363.5,701.5L367.5,701.5L370.5,705.5L372.5,703.5L375.5,705.5M363.5,701.5L363.5,711.5L351.5,711.5L351.5,733.5M351.5,733.5L368.5,733.5L368.5,728.5L388.5,728.5M351.5,733.5L351.5,739.5L357.5,739.5L357.5,759.5M357.5,759.5L366.5,759.5L366.5,757.5L391.5,757.5M357.5,759.5L354.5,766.5L354.5,770.5L349.5,778.5L349.5,784.5M349.5,784.5L363.5,784.5L363.5,782.5L390.5,782.5M349.5,784.5L351.5,794.5L355.5,803.5L356.5,813.5L361.5,823.5M389.5,-2.5L405.5,-2.5L405.5,2.5L411.5,2.5M389.5,-2.5L388.5,4.5L389.5,9.5L391.5,19.5L390.5,25.5M386.5,83.5L384.5,91.5L384.5,98.5L384.5,106.5L382.5,115.5M382.5,115.5L391.5,115.5L391.5,119.5L404.5,119.5M382.5,115.5L382.5,144.5M382.5,144.5L397.5,144.5L397.5,141.5L403.5,141.5M382.5,144.5L382.5,157.5L382.5,157.5L382.5,166.5M382.5,166.5L395.5,166.5L395.5,165.5L413.5,165.5M382.5,166.5L382.5,180.5L374.5,180.5L374.5,197.5M374.5,197.5L394.5,197.5L394.5,196.5L418.5,196.5M374.5,197.5L383.5,216.5M383.5,216.5L396.5,216.5L396.5,229.5L412.5,229.5M383.5,216.5L384.5,227.5L385.5,236.5L385.5,243.5L389.5,254.5M389.5,254.5L403.5,258.5M389.5,254.5L389.5,261.5L383.5,261.5L383.5,269.5M383.5,269.5L400.5,269.5L400.5,273.5L413.5,273.5M383.5,269.5L383.5,284.5L383.5,284.5L383.5,295.5M383.5,295.5L383.5,312.5L376.5,312.5L376.5,328.5M376.5,328.5L420.5,331.5M376.5,355.5L408.5,362.5M384.5,375.5L409.5,377.5M384.5,375.5L386.5,402.5M386.5,402.5L415.5,402.5M386.5,402.5L386.5,429.5L388.5,429.5L388.5,443.5M388.5,443.5L395.5,440.5L404.5,439.5L410.5,434.5L417.5,433.5M388.5,443.5L388.5,452.5L384.5,452.5L384.5,456.5M384.5,456.5L413.5,474.5M384.5,456.5L382.5,465.5L384.5,471.5L385.5,481.5L384.5,489.5M384.5,489.5L412.5,495.5M384.5,489.5L385.5,496.5L387.5,498.5L389.5,504.5L392.5,511.5M392.5,511.5L392.5,526.5L390.5,526.5L390.5,555.5M390.5,555.5L390.5,543.5L401.5,543.5L401.5,539.5M390.5,555.5L392.5,561.5L390.5,566.5L390.5,574.5L388.5,579.5M388.5,579.5L395.5,579.5L395.5,571.5L413.5,571.5M388.5,579.5L378.5,609.5M378.5,609.5L384.5,609.5L394.5,609.5L402.5,606.5L411.5,607.5M378.5,609.5L378.5,625.5L383.5,625.5L383.5,635.5M383.5,635.5L395.5,635.5L395.5,621.5L403.5,621.5M383.5,635.5L383.5,640.5L392.5,640.5L392.5,647.5M392.5,647.5L403.5,647.5L403.5,644.5L413.5,644.5M392.5,647.5L392.5,673.5L389.5,673.5L389.5,689.5M389.5,689.5L391.5,685.5L394.5,684.5L399.5,680.5L401.5,678.5M389.5,689.5L389.5,700.5L375.5,700.5L375.5,705.5M375.5,705.5L403.5,705.5M375.5,705.5L375.5,719.5L388.5,719.5L388.5,728.5M388.5,728.5L391.5,729.5L397.5,732.5L400.5,734.5L405.5,736.5M388.5,728.5L388.5,735.5L391.5,735.5L391.5,757.5M391.5,757.5L405.5,757.5L405.5,756.5L412.5,756.5M391.5,757.5L390.5,782.5M390.5,782.5L404.5,782.5L404.5,788.5L413.5,788.5M390.5,782.5L389.5,793.5L388.5,802.5L386.5,815.5L384.5,824.5M405.5,-25.5L405.5,-16.5L411.5,-16.5L411.5,2.5M411.5,2.5L430.5,8.5M411.5,2.5L411.5,15.5L401.5,15.5L401.5,26.5M414.5,94.5L414.5,108.5L404.5,108.5L404.5,119.5M404.5,119.5L422.5,119.5L422.5,111.5L439.5,111.5M404.5,119.5L404.5,134.5L403.5,134.5L403.5,141.5M403.5,141.5L417.5,141.5L417.5,139.5L440.5,139.5M413.5,165.5L429.5,165.5L429.5,172.5L446.5,172.5M413.5,165.5L413.5,180.5L418.5,180.5L418.5,196.5M418.5,196.5L422.5,196.5L424.5,197.5L428.5,199.5L433.5,202.5M418.5,196.5L418.5,203.5L413.5,213.5L413.5,222.5L412.5,229.5M412.5,229.5L417.5,229.5L417.5,222.5L429.5,222.5M412.5,229.5L403.5,258.5M403.5,258.5L424.5,258.5L424.5,243.5L436.5,243.5M403.5,258.5L403.5,263.5L413.5,263.5L413.5,273.5M413.5,273.5L417.5,276.5L421.5,277.5L425.5,278.5L429.5,281.5M413.5,273.5L412.5,279.5L416.5,288.5L414.5,292.5L416.5,298.5M416.5,298.5L419.5,298.5L421.5,302.5L426.5,301.5L428.5,303.5M416.5,298.5L420.5,331.5M420.5,331.5L432.5,331.5L432.5,323.5L446.5,323.5M420.5,331.5L408.5,362.5M408.5,362.5L422.5,362.5L422.5,359.5L432.5,359.5M408.5,362.5L407.5,366.5L410.5,368.5L410.5,372.5L409.5,377.5M409.5,377.5L427.5,377.5L427.5,386.5L438.5,386.5M409.5,377.5L409.5,388.5L415.5,388.5L415.5,402.5M415.5,402.5L424.5,402.5L424.5,404.5L444.5,404.5M415.5,402.5L415.5,424.5L417.5,424.5L417.5,433.5M417.5,433.5L423.5,433.5L423.5,434.5L434.5,434.5M417.5,433.5L417.5,456.5L413.5,456.5L413.5,474.5M413.5,474.5L423.5,474.5L423.5,472.5L429.5,472.5M413.5,474.5L413.5,480.5L412.5,480.5L412.5,495.5M412.5,495.5L419.5,495.5L429.5,494.5L434.5,496.5L443.5,496.5M412.5,495.5L412.5,497.5L410.5,501.5L406.5,505.5L407.5,509.5M407.5,509.5L418.5,509.5L418.5,525.5L428.5,525.5M407.5,509.5L407.5,530.5L401.5,530.5L401.5,539.5M401.5,539.5L413.5,571.5M413.5,571.5L413.5,589.5L411.5,589.5L411.5,607.5M403.5,621.5L412.5,621.5L412.5,618.5L432.5,618.5M403.5,621.5L413.5,644.5M413.5,644.5L413.5,657.5L401.5,657.5L401.5,678.5M401.5,678.5L409.5,681.5L419.5,684.5L431.5,685.5L441.5,687.5M401.5,678.5L401.5,685.5L403.5,685.5L403.5,705.5M403.5,705.5L442.5,703.5M403.5,705.5L403.5,720.5L405.5,720.5L405.5,736.5M405.5,736.5L418.5,736.5L418.5,733.5L439.5,733.5M405.5,736.5L405.5,744.5L412.5,744.5L412.5,756.5M412.5,756.5L432.5,756.5L432.5,762.5L443.5,762.5M412.5,756.5L412.5,766.5L413.5,766.5L413.5,788.5M413.5,788.5L433.5,791.5M413.5,788.5L413.5,804.5L403.5,804.5L403.5,824.5M403.5,824.5L435.5,824.5L435.5,810.5L447.5,810.5M433.5,-27.5L432.5,-20.5L433.5,-10.5L429.5,0.5L430.5,8.5M430.5,8.5L448.5,8.5L448.5,0.5L460.5,0.5M428.5,89.5L428.5,105.5L439.5,105.5L439.5,111.5M439.5,111.5L446.5,113.5L450.5,115.5L455.5,120.5L459.5,121.5M439.5,111.5L441.5,117.5L441.5,125.5L439.5,132.5L440.5,139.5M440.5,139.5L448.5,141.5L452.5,140.5L461.5,142.5L467.5,144.5M440.5,139.5L440.5,150.5L446.5,150.5L446.5,172.5M446.5,172.5L461.5,172.5L461.5,177.5L468.5,177.5M446.5,172.5L442.5,179.5L439.5,185.5L436.5,194.5L433.5,202.5M433.5,202.5L433.5,207.5L429.5,207.5L429.5,222.5M429.5,222.5L444.5,222.5L444.5,228.5L468.5,228.5M436.5,243.5L429.5,281.5M429.5,281.5L443.5,281.5L443.5,272.5L466.5,272.5M429.5,281.5L429.5,298.5L428.5,298.5L428.5,303.5M428.5,303.5L449.5,303.5L449.5,305.5L459.5,305.5M446.5,323.5L449.5,326.5L452.5,329.5L454.5,333.5L456.5,337.5M446.5,323.5L446.5,344.5L432.5,344.5L432.5,359.5M432.5,359.5L439.5,356.5L446.5,354.5L451.5,349.5L458.5,347.5M432.5,359.5L432.5,367.5L438.5,367.5L438.5,386.5M438.5,386.5L457.5,392.5M438.5,386.5L444.5,404.5M444.5,404.5L449.5,404.5L452.5,405.5L456.5,402.5L461.5,404.5M444.5,404.5L440.5,412.5L440.5,417.5L435.5,426.5L434.5,434.5M434.5,434.5L441.5,432.5L446.5,432.5L449.5,432.5L455.5,429.5M434.5,434.5L434.5,452.5L429.5,452.5L429.5,472.5M429.5,472.5L429.5,489.5L443.5,489.5L443.5,496.5M443.5,496.5L450.5,496.5L455.5,495.5L462.5,496.5L468.5,496.5M443.5,496.5L428.5,525.5M428.5,525.5L456.5,520.5M428.5,525.5L428.5,533.5L442.5,533.5L442.5,545.5M442.5,572.5L440.5,579.5L439.5,582.5L435.5,585.5L432.5,592.5M432.5,592.5L446.5,592.5L446.5,607.5L456.5,607.5M432.5,618.5L452.5,618.5L452.5,635.5L473.5,635.5M432.5,618.5L432.5,643.5L434.5,643.5L434.5,658.5M434.5,658.5L457.5,648.5M441.5,687.5L447.5,684.5L447.5,681.5L454.5,674.5L457.5,671.5M441.5,687.5L443.5,690.5L442.5,695.5L441.5,700.5L442.5,703.5M442.5,703.5L457.5,703.5L457.5,714.5L471.5,714.5M442.5,703.5L439.5,733.5M439.5,733.5L467.5,741.5M439.5,733.5L439.5,747.5L443.5,747.5L443.5,762.5M443.5,762.5L467.5,757.5M443.5,762.5L433.5,791.5M433.5,791.5L457.5,781.5M433.5,791.5L447.5,810.5M447.5,810.5L456.5,810.5L456.5,810.5L470.5,810.5M460.5,0.5L464.5,0.5L470.5,1.5L477.5,1.5L482.5,1.5M460.5,0.5L469.5,41.5M459.5,121.5L467.5,144.5M467.5,144.5L477.5,144.5L477.5,139.5L482.5,139.5M467.5,144.5L467.5,166.5L468.5,166.5L468.5,177.5M468.5,177.5L484.5,177.5L484.5,173.5L490.5,173.5M468.5,177.5L468.5,183.5L464.5,183.5L464.5,201.5M464.5,201.5L468.5,202.5L477.5,200.5L484.5,201.5L489.5,198.5M464.5,201.5L467.5,207.5L467.5,216.5L469.5,222.5L468.5,228.5M468.5,228.5L481.5,228.5L481.5,216.5L492.5,216.5M463.5,253.5L471.5,251.5L482.5,245.5L491.5,245.5L499.5,241.5M463.5,253.5L463.5,260.5L466.5,260.5L466.5,272.5M466.5,272.5L487.5,272.5L487.5,269.5L498.5,269.5M459.5,305.5L457.5,311.5L459.5,320.5L458.5,328.5L456.5,337.5M456.5,337.5L497.5,339.5M456.5,337.5L456.5,342.5L458.5,342.5L458.5,347.5M458.5,347.5L458.5,376.5L457.5,376.5L457.5,392.5M457.5,392.5L466.5,392.5L473.5,390.5L482.5,389.5L491.5,389.5M457.5,392.5L457.5,397.5L461.5,397.5L461.5,404.5M461.5,404.5L468.5,405.5L473.5,409.5L481.5,408.5L485.5,410.5M461.5,404.5L459.5,409.5L457.5,416.5L458.5,421.5L455.5,429.5M455.5,429.5L464.5,432.5L473.5,438.5L480.5,439.5L489.5,444.5M455.5,429.5L468.5,467.5M468.5,467.5L487.5,473.5M468.5,467.5L468.5,496.5M468.5,496.5L478.5,496.5L478.5,486.5L487.5,486.5M468.5,496.5L467.5,502.5L464.5,507.5L461.5,515.5L456.5,520.5M456.5,520.5L485.5,520.5L485.5,518.5L495.5,518.5M462.5,552.5L467.5,552.5L472.5,551.5L478.5,549.5L484.5,548.5M462.5,552.5L465.5,557.5L468.5,565.5L468.5,573.5L471.5,580.5M471.5,580.5L476.5,580.5L476.5,578.5L478.5,579.5L483.5,578.5M471.5,580.5L471.5,600.5L456.5,600.5L456.5,607.5M456.5,607.5L474.5,607.5L474.5,605.5L495.5,605.5M456.5,607.5L461.5,614.5L464.5,620.5L468.5,628.5L473.5,635.5M473.5,635.5L478.5,631.5L481.5,628.5L488.5,628.5L494.5,624.5M473.5,635.5L463.5,635.5L463.5,648.5L457.5,648.5M457.5,648.5L490.5,651.5M457.5,648.5L457.5,654.5L457.5,654.5L457.5,671.5M457.5,671.5L499.5,672.5M457.5,671.5L462.5,681.5L462.5,693.5L468.5,702.5L471.5,714.5M471.5,714.5L471.5,730.5L467.5,730.5L467.5,741.5M467.5,741.5L476.5,741.5L476.5,730.5L486.5,730.5M467.5,741.5L467.5,746.5L467.5,746.5L467.5,757.5M467.5,757.5L487.5,757.5L487.5,762.5L499.5,762.5M467.5,757.5L465.5,764.5L461.5,769.5L458.5,777.5L457.5,781.5M457.5,781.5L489.5,796.5M457.5,781.5L457.5,793.5L470.5,793.5L470.5,810.5M470.5,810.5L472.5,811.5L479.5,813.5L483.5,813.5L486.5,815.5M488.5,-22.5L482.5,1.5M482.5,1.5L493.5,4.5L505.5,4.5L515.5,4.5L523.5,8.5M482.5,1.5L482.5,20.5L487.5,20.5L487.5,37.5M501.5,87.5L498.5,116.5M498.5,116.5L512.5,112.5M498.5,116.5L498.5,128.5L482.5,128.5L482.5,139.5M482.5,139.5L524.5,142.5M482.5,139.5L482.5,153.5L490.5,153.5L490.5,173.5M490.5,173.5L489.5,198.5M489.5,198.5L512.5,198.5L512.5,189.5L526.5,189.5M492.5,216.5L498.5,216.5L498.5,218.5L513.5,218.5M492.5,216.5L499.5,241.5M498.5,269.5L498.5,276.5L482.5,276.5L482.5,297.5M482.5,297.5L493.5,297.5L493.5,299.5L514.5,299.5M497.5,339.5L504.5,339.5L504.5,323.5L519.5,323.5M497.5,339.5L482.5,356.5M482.5,356.5L499.5,356.5L499.5,350.5L515.5,350.5M482.5,356.5L491.5,389.5M491.5,389.5L502.5,389.5L509.5,388.5L517.5,390.5L528.5,388.5M491.5,389.5L491.5,404.5L485.5,404.5L485.5,410.5M485.5,410.5L501.5,410.5L501.5,419.5L511.5,419.5M485.5,410.5L489.5,444.5M489.5,444.5L500.5,444.5L500.5,435.5L511.5,435.5M489.5,444.5L489.5,460.5L487.5,460.5L487.5,473.5M487.5,473.5L496.5,473.5L506.5,471.5L516.5,470.5L528.5,470.5M487.5,473.5L487.5,481.5L487.5,481.5L487.5,486.5M487.5,486.5L488.5,493.5L492.5,502.5L495.5,510.5L495.5,518.5M495.5,518.5L499.5,521.5L506.5,519.5L508.5,522.5L513.5,521.5M484.5,548.5L492.5,546.5L496.5,546.5L503.5,543.5L511.5,540.5M484.5,548.5L484.5,566.5L483.5,566.5L483.5,578.5M483.5,578.5L490.5,576.5L499.5,572.5L508.5,568.5L516.5,563.5M483.5,578.5L495.5,605.5M495.5,605.5L495.5,618.5L494.5,618.5L494.5,624.5M494.5,624.5L515.5,624.5L515.5,627.5L522.5,627.5M494.5,624.5L491.5,631.5L493.5,638.5L489.5,646.5L490.5,651.5M490.5,651.5L521.5,653.5M490.5,651.5L490.5,657.5L499.5,657.5L499.5,672.5M499.5,672.5L502.5,672.5L502.5,683.5L512.5,683.5M499.5,698.5L517.5,712.5M499.5,698.5L499.5,720.5L486.5,720.5L486.5,730.5M486.5,730.5L526.5,733.5M499.5,762.5L502.5,762.5L508.5,766.5L513.5,767.5L520.5,766.5M499.5,762.5L489.5,796.5M489.5,796.5L489.5,805.5L486.5,805.5L486.5,815.5M519.5,-16.5L523.5,8.5M511.5,419.5L521.5,419.5L521.5,412.5L538.5,412.5M511.5,419.5L511.5,435.5M511.5,435.5L511.5,454.5L528.5,454.5L528.5,470.5M528.5,470.5L540.5,470.5L540.5,467.5L546.5,467.5M528.5,470.5L523.5,490.5M523.5,490.5L532.5,490.5L538.5,490.5L544.5,492.5L552.5,492.5M523.5,490.5L523.5,498.5L513.5,498.5L513.5,521.5M513.5,521.5L513.5,529.5L511.5,529.5L511.5,540.5M511.5,540.5L518.5,541.5L526.5,544.5L534.5,545.5L540.5,549.5M511.5,540.5L511.5,556.5L516.5,556.5L516.5,563.5M516.5,563.5L525.5,563.5L525.5,578.5L543.5,578.5M516.5,563.5L516.5,582.5L517.5,582.5L517.5,605.5M517.5,605.5L527.5,605.5L527.5,609.5L538.5,609.5M517.5,605.5L520.5,610.5L521.5,615.5L523.5,621.5L522.5,627.5M522.5,627.5L530.5,627.5L530.5,618.5L543.5,618.5M521.5,653.5L533.5,653.5L533.5,652.5L541.5,652.5M521.5,653.5L512.5,683.5M512.5,683.5L522.5,683.5L522.5,679.5L536.5,679.5M512.5,683.5L517.5,712.5M517.5,712.5L517.5,718.5L526.5,718.5L526.5,733.5M526.5,733.5L537.5,733.5L537.5,730.5L543.5,730.5M526.5,733.5L526.5,746.5L520.5,746.5L520.5,766.5M520.5,766.5L528.5,766.5L528.5,766.5L540.5,766.5M520.5,766.5L520.5,772.5L519.5,773.5L516.5,778.5L517.5,783.5M517.5,783.5L554.5,789.5M517.5,783.5L523.5,823.5M551.5,-17.5L551.5,0.5L552.5,0.5L552.5,9.5M543.5,578.5L541.5,585.5L542.5,595.5L539.5,603.5L538.5,609.5M538.5,609.5L546.5,609.5L546.5,608.5L563.5,608.5M543.5,618.5L555.5,618.5L555.5,622.5L576.5,622.5M543.5,618.5L543.5,642.5L541.5,642.5L541.5,652.5M541.5,652.5L565.5,647.5M541.5,652.5L541.5,667.5L536.5,667.5L536.5,679.5M536.5,679.5L546.5,682.5L553.5,681.5L558.5,684.5L567.5,686.5M544.5,711.5L552.5,711.5L556.5,705.5L561.5,702.5L570.5,701.5M543.5,730.5L565.5,730.5L565.5,740.5L580.5,740.5M543.5,730.5L540.5,766.5M540.5,766.5L566.5,769.5M540.5,766.5L554.5,789.5M554.5,789.5L562.5,789.5L562.5,794.5L575.5,794.5M570.5,-26.5L568.5,-19.5L567.5,-8.5L567.5,0.5L565.5,11.5M563.5,608.5L563.5,615.5L576.5,615.5L576.5,622.5M576.5,622.5L594.5,622.5L594.5,632.5L600.5,632.5M576.5,622.5L574.5,629.5L569.5,632.5L569.5,641.5L565.5,647.5M565.5,647.5L576.5,647.5L576.5,652.5L594.5,652.5M565.5,647.5L567.5,686.5M567.5,686.5L567.5,690.5L570.5,690.5L570.5,701.5M570.5,701.5L580.5,699.5L587.5,701.5L598.5,704.5L606.5,703.5M570.5,701.5L571.5,709.5L573.5,722.5L579.5,730.5L580.5,740.5M580.5,740.5L585.5,738.5L591.5,738.5L599.5,736.5L606.5,733.5M580.5,740.5L566.5,769.5M566.5,769.5L576.5,768.5L581.5,764.5L590.5,759.5L600.5,757.5M566.5,769.5L566.5,775.5L569.5,784.5L572.5,789.5L575.5,794.5M575.5,794.5L580.5,795.5L588.5,797.5L595.5,796.5L600.5,798.5M575.5,794.5L576.5,823.5M597.5,599.5L597.5,619.5L600.5,619.5L600.5,632.5M600.5,632.5L606.5,630.5L608.5,626.5L613.5,624.5L618.5,619.5M600.5,632.5L600.5,637.5L594.5,637.5L594.5,652.5M594.5,652.5L633.5,655.5M594.5,652.5L594.5,667.5L598.5,667.5L598.5,682.5M598.5,682.5L598.5,691.5L606.5,691.5L606.5,703.5M606.5,703.5L617.5,705.5M606.5,703.5L606.5,711.5L606.5,711.5L606.5,733.5M606.5,733.5L611.5,735.5L616.5,739.5L623.5,742.5L628.5,743.5M600.5,757.5L600.5,775.5L600.5,775.5L600.5,798.5M600.5,798.5L606.5,794.5L614.5,790.5L619.5,786.5L625.5,781.5M600.5,798.5L600.5,815.5L603.5,815.5L603.5,821.5M603.5,821.5L629.5,810.5M623.5,-24.5L623.5,-6.5L623.5,-6.5L623.5,7.5M618.5,619.5L637.5,619.5L637.5,632.5L651.5,632.5M618.5,619.5L618.5,637.5L633.5,637.5L633.5,655.5M633.5,655.5L651.5,655.5L651.5,659.5L662.5,659.5M633.5,655.5L633.5,664.5L635.5,664.5L635.5,679.5M635.5,679.5L641.5,678.5L643.5,678.5L648.5,679.5L655.5,676.5M635.5,679.5L635.5,692.5L617.5,692.5L617.5,705.5M617.5,705.5L629.5,705.5L629.5,717.5L645.5,717.5M617.5,705.5L628.5,743.5M628.5,743.5L639.5,743.5L639.5,741.5L657.5,741.5M628.5,743.5L628.5,753.5L636.5,753.5L636.5,761.5M636.5,761.5L640.5,763.5L643.5,762.5L646.5,763.5L650.5,764.5M636.5,761.5L636.5,766.5L625.5,766.5L625.5,781.5M625.5,781.5L646.5,781.5L646.5,795.5L663.5,795.5M625.5,781.5L625.5,802.5L629.5,802.5L629.5,810.5M629.5,810.5L636.5,810.5L636.5,812.5L655.5,812.5M647.5,-30.5L644.5,9.5M656.5,598.5L651.5,632.5M651.5,632.5L655.5,640.5L659.5,646.5L660.5,654.5L662.5,659.5M662.5,659.5L674.5,648.5M662.5,659.5L662.5,666.5L655.5,666.5L655.5,676.5M655.5,676.5L661.5,678.5L667.5,679.5L668.5,682.5L674.5,684.5M645.5,717.5L660.5,717.5L660.5,709.5L678.5,709.5M645.5,717.5L657.5,741.5M657.5,741.5L668.5,741.5L668.5,735.5L679.5,735.5M657.5,741.5L657.5,752.5L650.5,752.5L650.5,764.5M650.5,764.5L658.5,764.5L658.5,753.5L674.5,753.5M650.5,764.5L653.5,770.5L658.5,778.5L661.5,785.5L663.5,795.5M663.5,795.5L673.5,795.5L673.5,786.5L690.5,786.5M663.5,795.5L661.5,799.5L659.5,803.5L656.5,809.5L655.5,812.5M678.5,9.5L700.5,9.5L700.5,2.5L709.5,2.5M688.5,600.5L688.5,607.5L680.5,607.5L680.5,628.5M680.5,628.5L704.5,628.5L704.5,634.5L715.5,634.5M674.5,648.5L687.5,648.5L687.5,645.5L714.5,645.5M674.5,648.5L674.5,684.5M674.5,684.5L713.5,685.5M674.5,684.5L675.5,691.5L676.5,696.5L678.5,701.5L678.5,709.5M678.5,709.5L687.5,711.5L694.5,711.5L701.5,715.5L710.5,717.5M678.5,709.5L677.5,716.5L679.5,722.5L680.5,727.5L679.5,735.5M679.5,735.5L699.5,728.5M679.5,735.5L679.5,742.5L674.5,742.5L674.5,753.5M674.5,753.5L692.5,753.5L692.5,770.5L712.5,770.5M674.5,753.5L674.5,773.5L690.5,773.5L690.5,786.5M690.5,786.5L711.5,785.5M690.5,786.5L690.5,809.5L673.5,809.5L673.5,818.5M713.5,-27.5L713.5,-6.5L709.5,-6.5L709.5,2.5M709.5,2.5L717.5,2.5L717.5,-1.5L730.5,-1.5M709.5,2.5L709.5,11.5L708.5,11.5L708.5,23.5M715.5,634.5L717.5,634.5L719.5,633.5L725.5,632.5L726.5,634.5M715.5,634.5L716.5,636.5L716.5,639.5L714.5,644.5L714.5,645.5M714.5,645.5L738.5,648.5M713.5,685.5L713.5,706.5L710.5,706.5L710.5,717.5M710.5,717.5L716.5,712.5L721.5,709.5L725.5,704.5L730.5,702.5M710.5,717.5L708.5,720.5L704.5,721.5L701.5,726.5L699.5,728.5M699.5,728.5L711.5,728.5L711.5,744.5L732.5,744.5M699.5,728.5L699.5,739.5L712.5,739.5L712.5,770.5M712.5,770.5L734.5,770.5L734.5,770.5L744.5,770.5M711.5,785.5L714.5,785.5L721.5,785.5L722.5,786.5L727.5,784.5M711.5,785.5L710.5,793.5L709.5,803.5L711.5,812.5L709.5,821.5M709.5,821.5L718.5,817.5L727.5,812.5L734.5,811.5L742.5,807.5M730.5,-1.5L730.5,13.5L734.5,13.5L734.5,26.5M727.5,609.5L727.5,627.5L726.5,627.5L726.5,634.5M726.5,634.5L750.5,634.5L750.5,620.5L759.5,620.5M738.5,648.5L735.5,656.5L736.5,663.5L734.5,667.5L734.5,676.5M734.5,676.5L730.5,702.5M730.5,702.5L742.5,702.5L742.5,708.5L760.5,708.5M730.5,702.5L731.5,711.5L732.5,721.5L731.5,732.5L732.5,744.5M732.5,744.5L754.5,739.5M732.5,744.5L732.5,751.5L744.5,751.5L744.5,770.5M744.5,770.5L768.5,769.5M727.5,784.5L734.5,787.5L743.5,790.5L751.5,791.5L758.5,793.5M727.5,784.5L727.5,790.5L742.5,790.5L742.5,807.5M742.5,807.5L749.5,807.5L749.5,820.5L759.5,820.5M771.5,-3.5L790.5,-3.5L790.5,5.5L797.5,5.5M771.5,-3.5L767.5,29.5M759.5,620.5L759.5,645.5L759.5,645.5L759.5,655.5M759.5,655.5L765.5,656.5L773.5,654.5L777.5,651.5L783.5,650.5M759.5,655.5L759.5,672.5L752.5,672.5L752.5,681.5M752.5,681.5L752.5,693.5L760.5,693.5L760.5,708.5M760.5,708.5L771.5,709.5L779.5,713.5L786.5,714.5L794.5,716.5M760.5,708.5L759.5,717.5L759.5,724.5L756.5,731.5L754.5,739.5M754.5,739.5L754.5,749.5L768.5,749.5L768.5,769.5M768.5,769.5L772.5,769.5L772.5,762.5L780.5,762.5M768.5,769.5L768.5,782.5L758.5,782.5L758.5,793.5M758.5,793.5L780.5,793.5L780.5,797.5L797.5,797.5M758.5,793.5L758.5,809.5L759.5,809.5L759.5,820.5M780.5,-13.5L797.5,5.5M797.5,5.5L801.5,5.5L808.5,2.5L811.5,0.5L816.5,-2.5M797.5,5.5L797.5,15.5L789.5,15.5L789.5,33.5M789.5,50.5L798.5,50.5L798.5,52.5L806.5,52.5M798.5,81.5L825.5,92.5M782.5,106.5L812.5,106.5L812.5,116.5L824.5,116.5M784.5,147.5L809.5,147.5L809.5,148.5L822.5,148.5M779.5,160.5L792.5,161.5L799.5,159.5L811.5,157.5L823.5,158.5M792.5,189.5L803.5,189.5L803.5,190.5L818.5,190.5M779.5,223.5L789.5,224.5L801.5,219.5L808.5,217.5L819.5,217.5M790.5,249.5L797.5,250.5L804.5,255.5L808.5,255.5L816.5,257.5M792.5,268.5L809.5,268.5L809.5,271.5L818.5,271.5M796.5,307.5L810.5,307.5L810.5,301.5L816.5,301.5M780.5,322.5L824.5,325.5M788.5,357.5L803.5,357.5L803.5,359.5L812.5,359.5M784.5,376.5L801.5,376.5L801.5,385.5L808.5,385.5M787.5,403.5L805.5,403.5L805.5,411.5L824.5,411.5M790.5,445.5L803.5,445.5L803.5,437.5L811.5,437.5M782.5,466.5L807.5,466.5L807.5,458.5L816.5,458.5M793.5,485.5L804.5,485.5L804.5,484.5L808.5,484.5M795.5,527.5L811.5,517.5M786.5,544.5L811.5,541.5M795.5,573.5L798.5,573.5L798.5,573.5L807.5,573.5M786.5,608.5L822.5,602.5M794.5,623.5L801.5,627.5L806.5,626.5L811.5,629.5L817.5,629.5M783.5,650.5L810.5,658.5M783.5,650.5L783.5,672.5L787.5,672.5L787.5,690.5M787.5,690.5L803.5,690.5L803.5,681.5L815.5,681.5M787.5,690.5L787.5,703.5L794.5,703.5L794.5,716.5M794.5,716.5L799.5,713.5L806.5,712.5L810.5,711.5L818.5,707.5M794.5,716.5L795.5,741.5M795.5,741.5L802.5,741.5L802.5,729.5L812.5,729.5M795.5,741.5L795.5,756.5L780.5,756.5L780.5,762.5M780.5,762.5L788.5,762.5L788.5,762.5L810.5,762.5M780.5,762.5L780.5,782.5L797.5,782.5L797.5,797.5M797.5,797.5L804.5,797.5L804.5,790.5L813.5,790.5M797.5,797.5L784.5,814.5M814.5,33.5L806.5,52.5M812.5,359.5L812.5,367.5L808.5,373.5L807.5,380.5L808.5,385.5M808.5,385.5L808.5,392.5L824.5,392.5L824.5,411.5M824.5,411.5L822.5,417.5L817.5,425.5L816.5,430.5L811.5,437.5M811.5,437.5L812.5,442.5L813.5,448.5L817.5,452.5L816.5,458.5M816.5,458.5L816.5,470.5L808.5,470.5L808.5,484.5M808.5,484.5L810.5,493.5L811.5,502.5L812.5,509.5L811.5,517.5M811.5,517.5L811.5,529.5L811.5,529.5L811.5,541.5M811.5,541.5L811.5,565.5L807.5,565.5L807.5,573.5M807.5,573.5L809.5,580.5L816.5,588.5L819.5,595.5L822.5,602.5M817.5,629.5L815.5,637.5L814.5,643.5L811.5,650.5L810.5,658.5M810.5,658.5L815.5,681.5M812.5,729.5L812.5,746.5L810.5,746.5L810.5,762.5M810.5,762.5L810.5,782.5L813.5,782.5L813.5,790.5M813.5,790.5L812.5,797.5L811.5,801.5L806.5,808.5L806.5,813.5" fill="none" stroke="#616567" stroke-width="1"/>
<path clip-path="url(#cf)" d="M203.5,22.5L207.5,22.5L213.5,20.5L217.5,20.5L221.5,19.5M203.5,48.5L208.5,48.5L208.5,50.5L213.5,50.5M199.5,65.5L211.5,65.5L211.5,64.5L217.5,64.5M205.5,77.5L220.5,77.5L220.5,90.5L226.5,90.5M196.5,103.5L206.5,103.5L206.5,99.5L220.5,99.5M219.5,3.5L226.5,3.5L226.5,10.5L240.5,10.5M221.5,19.5L235.5,19.5L235.5,25.5L242.5,25.5M221.5,19.5L221.5,25.5L218.5,36.5L214.5,41.5L213.5,50.5M213.5,50.5L216.5,52.5L213.5,55.5L218.5,60.5L217.5,64.5M217.5,64.5L229.5,64.5L229.5,59.5L243.5,59.5M217.5,64.5L218.5,70.5L223.5,78.5L224.5,83.5L226.5,90.5M226.5,90.5L220.5,99.5M220.5,99.5L239.5,107.5M220.5,99.5L220.5,117.5L217.5,117.5L217.5,128.5M240.5,10.5L240.5,19.5L242.5,19.5L242.5,25.5M242.5,25.5L247.5,23.5L251.5,21.5L257.5,21.5L261.5,19.5M242.5,25.5L242.5,31.5L246.5,31.5L246.5,40.5M246.5,40.5L253.5,40.5L253.5,47.5L257.5,47.5M246.5,40.5L246.5,54.5L243.5,54.5L243.5,59.5M243.5,59.5L251.5,59.5L251.5,65.5L264.5,65.5M243.5,59.5L243.5,70.5L241.5,70.5L241.5,80.5M241.5,80.5L257.5,80.5L257.5,83.5L264.5,83.5M241.5,80.5L239.5,107.5M253.5,4.5L272.5,4.5L272.5,11.5L281.5,11.5M253.5,4.5L255.5,8.5L255.5,11.5L257.5,13.5L261.5,19.5M261.5,19.5L268.5,19.5L268.5,28.5L275.5,28.5M257.5,47.5L265.5,49.5L269.5,48.5L275.5,52.5L281.5,51.5M264.5,65.5L271.5,65.5L271.5,60.5L284.5,60.5M264.5,83.5L276.5,83.5L276.5,78.5L280.5,78.5M264.5,83.5L257.5,108.5M257.5,108.5L261.5,108.5L266.5,106.5L272.5,101.5L277.5,101.5M285.5,-16.5L285.5,1.5L281.5,1.5L281.5,11.5M281.5,11.5L283.5,11.5L287.5,11.5L291.5,11.5L296.5,11.5M281.5,11.5L275.5,28.5M275.5,28.5L285.5,28.5L285.5,28.5L295.5,28.5M275.5,28.5L281.5,51.5M281.5,51.5L294.5,51.5L294.5,47.5L301.5,47.5M281.5,51.5L281.5,56.5L284.5,56.5L284.5,60.5M284.5,60.5L290.5,62.5L295.5,66.5L299.5,66.5L305.5,69.5M284.5,60.5L284.5,65.5L281.5,70.5L282.5,74.5L280.5,78.5M280.5,78.5L285.5,78.5L285.5,85.5L293.5,85.5M280.5,78.5L280.5,88.5L277.5,88.5L277.5,101.5M277.5,101.5L285.5,101.5L285.5,104.5L298.5,104.5M277.5,101.5L277.5,105.5L274.5,112.5L272.5,117.5L272.5,121.5M305.5,-15.5L305.5,1.5L296.5,1.5L296.5,11.5M296.5,11.5L303.5,7.5L310.5,8.5L316.5,6.5L324.5,4.5M296.5,11.5L295.5,28.5M295.5,28.5L295.5,36.5L301.5,36.5L301.5,47.5M301.5,47.5L307.5,47.5L307.5,40.5L322.5,40.5M301.5,47.5L302.5,53.5L302.5,58.5L305.5,62.5L305.5,69.5M305.5,69.5L313.5,58.5M293.5,85.5L296.5,89.5L295.5,97.5L298.5,100.5L298.5,104.5M324.5,4.5L320.5,26.5M320.5,26.5L334.5,26.5L334.5,21.5L340.5,21.5M320.5,26.5L320.5,30.5L322.5,30.5L322.5,40.5M322.5,40.5L329.5,40.5L329.5,45.5L340.5,45.5M324.5,80.5L324.5,87.5L317.5,87.5L317.5,98.5M331.5,3.5L338.5,5.5L344.5,5.5L347.5,9.5L353.5,10.5M340.5,21.5L346.5,21.5L346.5,26.5L356.5,26.5M340.5,21.5L340.5,34.5L340.5,34.5L340.5,45.5M340.5,45.5L362.5,40.5M340.5,45.5L340.5,59.5M340.5,59.5L353.5,66.5M340.5,59.5L340.5,65.5L331.5,65.5L331.5,78.5M331.5,78.5L337.5,78.5L337.5,84.5L351.5,84.5M331.5,78.5L331.5,90.5L335.5,90.5L335.5,102.5M353.5,10.5L363.5,10.5L363.5,2.5L375.5,2.5M353.5,10.5L352.5,15.5L353.5,17.5L354.5,20.5L356.5,26.5M362.5,40.5L362.5,54.5L353.5,54.5L353.5,66.5M353.5,66.5L378.5,60.5M353.5,66.5L353.5,78.5L351.5,78.5L351.5,84.5M351.5,84.5L359.5,84.5L359.5,78.5L375.5,78.5M351.5,84.5L351.5,98.5L361.5,98.5L361.5,103.5M361.5,103.5L369.5,103.5L369.5,100.5L382.5,100.5M375.5,2.5L375.5,31.5M375.5,31.5L396.5,24.5M375.5,31.5L375.5,36.5L373.5,36.5L373.5,47.5M373.5,47.5L400.5,39.5M373.5,47.5L373.5,52.5L378.5,52.5L378.5,60.5M378.5,60.5L391.5,60.5L391.5,59.5L400.5,59.5M375.5,78.5L383.5,78.5L383.5,84.5L402.5,84.5M375.5,78.5L378.5,84.5L377.5,91.5L380.5,95.5L382.5,100.5M396.5,24.5L406.5,24.5L406.5,28.5L412.5,28.5M396.5,24.5L396.5,31.5L400.5,31.5L400.5,39.5M400.5,39.5L409.5,51.5M400.5,59.5L420.5,62.5M400.5,59.5L400.5,75.5L402.5,75.5L402.5,84.5M402.5,84.5L405.5,84.5L405.5,88.5L412.5,88.5M402.5,84.5L401.5,88.5L397.5,94.5L396.5,99.5L394.5,105.5M420.5,4.5L420.5,17.5L412.5,17.5L412.5,28.5M412.5,28.5L428.5,30.5M412.5,28.5L412.5,32.5L412.5,39.5L411.5,44.5L409.5,51.5M409.5,51.5L427.5,51.5L427.5,48.5L433.5,48.5M409.5,51.5L420.5,62.5M420.5,62.5L425.5,62.5L425.5,66.5L434.5,66.5M420.5,62.5L412.5,88.5M412.5,88.5L418.5,88.5L418.5,90.5L435.5,90.5M412.5,88.5L412.5,95.5L419.5,95.5L419.5,105.5M436.5,2.5L436.5,12.5L428.5,12.5L428.5,30.5M428.5,30.5L455.5,20.5M428.5,30.5L433.5,48.5M433.5,48.5L461.5,42.5M433.5,48.5L433.5,55.5L434.5,55.5L434.5,66.5M434.5,66.5L459.5,58.5M434.5,66.5L435.5,90.5M435.5,90.5L442.5,86.5L444.5,83.5L453.5,80.5L456.5,77.5M435.5,90.5L435.5,95.5L440.5,95.5L440.5,102.5M460.5,0.5L466.5,0.5L466.5,8.5L470.5,8.5M460.5,0.5L455.5,20.5M455.5,20.5L460.5,20.5L464.5,23.5L465.5,23.5L470.5,25.5M455.5,20.5L455.5,27.5L461.5,27.5L461.5,42.5M461.5,42.5L464.5,42.5L464.5,50.5L470.5,50.5M461.5,42.5L461.5,49.5L459.5,49.5L459.5,58.5M459.5,58.5L463.5,60.5L466.5,58.5L467.5,60.5L469.5,60.5M459.5,58.5L456.5,77.5M456.5,77.5L462.5,77.5L462.5,81.5L471.5,81.5M456.5,77.5L456.5,93.5L447.5,93.5L447.5,104.5M477.5,-15.5L477.5,-1.5L470.5,-1.5L470.5,8.5M470.5,8.5L470.5,14.5L470.5,14.5L470.5,25.5M470.5,25.5L477.5,23.5L482.5,26.5L491.5,24.5L498.5,25.5M470.5,25.5L472.5,30.5L470.5,39.5L471.5,43.5L470.5,50.5M470.5,50.5L477.5,51.5L478.5,49.5L486.5,50.5L489.5,51.5M470.5,50.5L469.5,60.5M469.5,60.5L483.5,60.5L483.5,57.5L500.5,57.5M469.5,60.5L468.5,65.5L470.5,72.5L471.5,77.5L471.5,81.5M471.5,81.5L480.5,81.5L480.5,82.5L497.5,82.5M471.5,81.5L471.5,97.5L477.5,97.5L477.5,105.5M497.5,-6.5L492.5,7.5M492.5,7.5L503.5,7.5L503.5,10.5L510.5,10.5M492.5,7.5L492.5,11.5L494.5,17.5L497.5,19.5L498.5,25.5M498.5,25.5L513.5,23.5M498.5,25.5L497.5,33.5L494.5,38.5L491.5,43.5L489.5,51.5M489.5,51.5L493.5,47.5L498.5,47.5L503.5,41.5L508.5,41.5M489.5,51.5L500.5,57.5M500.5,57.5L517.5,68.5M497.5,82.5L496.5,86.5L491.5,91.5L490.5,92.5L487.5,98.5M488.5,126.5L515.5,127.5M489.5,166.5L499.5,166.5L499.5,159.5L517.5,159.5M493.5,183.5L505.5,183.5L505.5,187.5L509.5,187.5M486.5,217.5L501.5,217.5L501.5,224.5L510.5,224.5M487.5,236.5L501.5,236.5L501.5,245.5L514.5,245.5M495.5,257.5L503.5,257.5L503.5,261.5L519.5,261.5M493.5,280.5L495.5,280.5L499.5,280.5L502.5,280.5L506.5,281.5M490.5,296.5L507.5,305.5M498.5,319.5L507.5,319.5L507.5,315.5L518.5,315.5M499.5,372.5L514.5,371.5M512.5,-13.5L512.5,1.5L510.5,1.5L510.5,10.5M510.5,10.5L521.5,10.5L521.5,0.5L526.5,0.5M510.5,10.5L513.5,23.5M513.5,23.5L520.5,23.5L520.5,25.5L530.5,25.5M513.5,23.5L513.5,28.5L508.5,28.5L508.5,41.5M508.5,41.5L508.5,55.5L517.5,55.5L517.5,68.5M517.5,68.5L523.5,68.5L523.5,63.5L531.5,63.5M517.5,68.5L517.5,75.5L519.5,75.5L519.5,89.5M515.5,107.5L532.5,107.5L532.5,98.5L538.5,98.5M515.5,107.5L515.5,121.5L515.5,121.5L515.5,127.5M515.5,127.5L524.5,127.5L524.5,125.5L531.5,125.5M515.5,127.5L515.5,131.5L518.5,132.5L516.5,136.5L517.5,137.5M517.5,137.5L524.5,137.5L524.5,143.5L536.5,143.5M517.5,137.5L517.5,149.5L517.5,149.5L517.5,159.5M517.5,159.5L509.5,187.5M509.5,187.5L509.5,193.5L506.5,193.5L506.5,201.5M506.5,201.5L518.5,201.5L518.5,207.5L533.5,207.5M506.5,201.5L507.5,208.5L510.5,214.5L509.5,217.5L510.5,224.5M510.5,224.5L517.5,224.5L517.5,216.5L532.5,216.5M510.5,224.5L514.5,245.5M514.5,245.5L518.5,241.5L523.5,239.5L529.5,237.5L536.5,233.5M514.5,245.5L514.5,251.5L519.5,251.5L519.5,261.5M519.5,261.5L522.5,262.5L524.5,261.5L523.5,261.5L527.5,260.5M506.5,281.5L506.5,296.5L507.5,296.5L507.5,305.5M507.5,305.5L528.5,305.5L528.5,295.5L535.5,295.5M518.5,315.5L521.5,317.5L526.5,317.5L529.5,319.5L536.5,320.5M518.5,315.5L518.5,323.5L508.5,323.5L508.5,340.5M508.5,340.5L508.5,350.5L516.5,350.5L516.5,363.5M516.5,363.5L522.5,363.5L522.5,351.5L531.5,351.5M516.5,363.5L516.5,365.5L514.5,365.5L514.5,371.5M516.5,389.5L524.5,389.5L524.5,389.5L537.5,389.5M518.5,419.5L526.5,412.5M506.5,508.5L535.5,514.5M515.5,571.5L532.5,564.5M526.5,0.5L532.5,0.5L537.5,3.5L544.5,6.5L549.5,9.5M526.5,0.5L530.5,25.5M530.5,25.5L530.5,39.5L538.5,39.5L538.5,46.5M538.5,46.5L538.5,58.5L531.5,58.5L531.5,63.5M528.5,83.5L538.5,83.5L538.5,88.5L558.5,88.5M528.5,83.5L532.5,88.5L534.5,90.5L537.5,93.5L538.5,98.5M538.5,98.5L543.5,99.5L546.5,102.5L547.5,102.5L550.5,105.5M538.5,98.5L537.5,103.5L533.5,113.5L534.5,117.5L531.5,125.5M531.5,125.5L535.5,122.5L545.5,123.5L551.5,120.5L555.5,120.5M531.5,125.5L536.5,143.5M536.5,143.5L544.5,143.5L544.5,148.5L555.5,148.5M536.5,143.5L534.5,168.5M534.5,168.5L545.5,168.5L545.5,164.5L554.5,164.5M534.5,168.5L534.5,171.5L538.5,171.5L538.5,178.5M538.5,178.5L542.5,177.5L543.5,181.5L546.5,182.5L551.5,183.5M538.5,178.5L535.5,186.5L534.5,193.5L533.5,198.5L533.5,207.5M533.5,207.5L541.5,207.5L541.5,204.5L548.5,204.5M533.5,207.5L533.5,212.5L532.5,212.5L532.5,216.5M532.5,216.5L534.5,219.5L533.5,225.5L536.5,228.5L536.5,233.5M536.5,233.5L539.5,233.5L539.5,242.5L549.5,242.5M536.5,233.5L527.5,260.5M527.5,260.5L545.5,258.5M527.5,260.5L528.5,267.5L529.5,269.5L526.5,276.5L529.5,282.5M529.5,282.5L555.5,275.5M529.5,282.5L532.5,286.5L532.5,287.5L532.5,293.5L535.5,295.5M535.5,295.5L543.5,295.5L543.5,294.5L553.5,294.5M535.5,295.5L537.5,302.5L536.5,306.5L535.5,312.5L536.5,320.5M536.5,320.5L550.5,324.5M536.5,320.5L536.5,327.5L535.5,327.5L535.5,336.5M535.5,336.5L539.5,338.5L540.5,338.5L544.5,342.5L547.5,343.5M535.5,336.5L535.5,341.5L531.5,341.5L531.5,351.5M531.5,351.5L532.5,358.5L532.5,368.5L532.5,375.5L532.5,382.5M532.5,382.5L537.5,382.5L546.5,382.5L552.5,380.5L556.5,381.5M532.5,382.5L532.5,384.5L537.5,384.5L537.5,389.5M537.5,389.5L539.5,390.5L545.5,393.5L546.5,397.5L550.5,397.5M537.5,389.5L537.5,404.5L526.5,404.5L526.5,412.5M526.5,412.5L554.5,419.5M526.5,412.5L526.5,421.5L535.5,421.5L535.5,434.5M535.5,434.5L535.5,444.5L527.5,444.5L527.5,453.5M527.5,453.5L531.5,455.5L535.5,457.5L544.5,457.5L548.5,457.5M533.5,477.5L539.5,478.5L544.5,474.5L548.5,474.5L552.5,474.5M531.5,495.5L538.5,495.5L538.5,488.5L558.5,488.5M531.5,495.5L531.5,505.5L535.5,505.5L535.5,514.5M535.5,514.5L542.5,514.5L542.5,510.5L555.5,510.5M526.5,535.5L534.5,534.5L542.5,538.5L547.5,536.5L555.5,538.5M527.5,545.5L539.5,545.5L539.5,552.5L548.5,552.5M527.5,545.5L529.5,552.5L530.5,556.5L530.5,558.5L532.5,564.5M532.5,564.5L535.5,566.5L543.5,569.5L547.5,569.5L552.5,571.5M532.5,564.5L532.5,571.5L526.5,571.5L526.5,589.5M526.5,589.5L547.5,592.5M532.5,604.5L540.5,607.5L543.5,607.5L550.5,609.5L557.5,612.5M553.5,-14.5L553.5,-6.5L549.5,-6.5L549.5,9.5M549.5,9.5L554.5,9.5L554.5,3.5L566.5,3.5M549.5,9.5L551.5,25.5M551.5,25.5L551.5,33.5L557.5,33.5L557.5,44.5M557.5,44.5L563.5,44.5L563.5,40.5L567.5,40.5M557.5,44.5L557.5,59.5L550.5,59.5L550.5,70.5M550.5,70.5L559.5,70.5L559.5,58.5L566.5,58.5M550.5,70.5L558.5,88.5M558.5,88.5L575.5,87.5M558.5,88.5L558.5,100.5L550.5,100.5L550.5,105.5M550.5,105.5L557.5,105.5L557.5,103.5L568.5,103.5M550.5,105.5L550.5,109.5L555.5,109.5L555.5,120.5M555.5,120.5L558.5,119.5L564.5,119.5L570.5,116.5L574.5,116.5M554.5,164.5L567.5,164.5M554.5,164.5L554.5,177.5L551.5,177.5L551.5,183.5M551.5,183.5L567.5,183.5L567.5,179.5L574.5,179.5M551.5,183.5L549.5,188.5L547.5,195.5L549.5,199.5L548.5,204.5M548.5,204.5L548.5,214.5L552.5,214.5L552.5,227.5M552.5,227.5L561.5,227.5L561.5,217.5L571.5,217.5M552.5,227.5L552.5,233.5L549.5,233.5L549.5,242.5M549.5,242.5L555.5,244.5L561.5,243.5L566.5,244.5L570.5,244.5M549.5,242.5L545.5,258.5M545.5,258.5L555.5,258.5L555.5,261.5L572.5,261.5M545.5,258.5L555.5,275.5M555.5,275.5L561.5,275.5L567.5,276.5L573.5,274.5L578.5,275.5M555.5,275.5L553.5,294.5M553.5,294.5L560.5,294.5L560.5,300.5L567.5,300.5M553.5,294.5L551.5,300.5L553.5,308.5L551.5,318.5L550.5,324.5M550.5,324.5L555.5,324.5L559.5,325.5L563.5,323.5L566.5,324.5M550.5,324.5L550.5,336.5L547.5,336.5L547.5,343.5M547.5,343.5L557.5,343.5L557.5,336.5L569.5,336.5M547.5,343.5L547.5,349.5L545.5,349.5L545.5,358.5M545.5,358.5L553.5,357.5L558.5,359.5L563.5,359.5L570.5,361.5M545.5,358.5L556.5,381.5M556.5,381.5L561.5,381.5L561.5,378.5L577.5,378.5M556.5,381.5L553.5,384.5L554.5,387.5L551.5,392.5L550.5,397.5M550.5,397.5L554.5,419.5M554.5,419.5L574.5,411.5M554.5,419.5L554.5,424.5L556.5,425.5L557.5,432.5L555.5,436.5M555.5,436.5L566.5,436.5L566.5,440.5L576.5,440.5M555.5,436.5L548.5,457.5M548.5,457.5L552.5,474.5M552.5,474.5L561.5,474.5L561.5,477.5L567.5,477.5M552.5,474.5L558.5,488.5M558.5,488.5L558.5,490.5L565.5,490.5L565.5,496.5M558.5,488.5L558.5,497.5L555.5,497.5L555.5,510.5M555.5,510.5L565.5,517.5M555.5,510.5L555.5,518.5L555.5,518.5L555.5,538.5M555.5,538.5L562.5,538.5L562.5,533.5L572.5,533.5M555.5,538.5L548.5,552.5M548.5,552.5L547.5,555.5L549.5,562.5L550.5,567.5L552.5,571.5M552.5,571.5L556.5,574.5L560.5,576.5L565.5,575.5L569.5,578.5M552.5,571.5L552.5,584.5L547.5,584.5L547.5,592.5M547.5,592.5L547.5,599.5L557.5,599.5L557.5,612.5M557.5,612.5L557.5,623.5L549.5,623.5L549.5,634.5M566.5,3.5L587.5,3.5L587.5,9.5L596.5,9.5M576.5,31.5L576.5,36.5L567.5,36.5L567.5,40.5M567.5,40.5L593.5,45.5M567.5,40.5L566.5,58.5M566.5,58.5L574.5,58.5L574.5,62.5L589.5,62.5M575.5,87.5L580.5,87.5L580.5,83.5L591.5,83.5M575.5,87.5L573.5,92.5L571.5,95.5L568.5,98.5L568.5,103.5M568.5,103.5L574.5,103.5L574.5,103.5L591.5,103.5M568.5,103.5L574.5,116.5M574.5,116.5L581.5,118.5L584.5,121.5L589.5,125.5L595.5,128.5M574.5,116.5L574.5,133.5L575.5,133.5L575.5,147.5M575.5,147.5L575.5,142.5L587.5,142.5L587.5,135.5M575.5,147.5L575.5,156.5L567.5,156.5L567.5,164.5M567.5,164.5L588.5,155.5M567.5,164.5L567.5,170.5L574.5,170.5L574.5,179.5M574.5,179.5L574.5,189.5L576.5,189.5L576.5,197.5M576.5,197.5L580.5,197.5L580.5,196.5L587.5,196.5M576.5,197.5L576.5,208.5L571.5,208.5L571.5,217.5M571.5,217.5L585.5,217.5L585.5,225.5L596.5,225.5M571.5,217.5L570.5,244.5M570.5,244.5L575.5,245.5L583.5,241.5L588.5,243.5L593.5,242.5M570.5,244.5L571.5,248.5L571.5,254.5L570.5,256.5L572.5,261.5M572.5,261.5L577.5,261.5L577.5,258.5L594.5,258.5M578.5,275.5L589.5,279.5M578.5,275.5L578.5,288.5L567.5,288.5L567.5,300.5M567.5,300.5L585.5,300.5L585.5,305.5L596.5,305.5M567.5,300.5L567.5,311.5L566.5,311.5L566.5,324.5M566.5,324.5L596.5,322.5M569.5,336.5L585.5,333.5M570.5,361.5L577.5,358.5L584.5,358.5L591.5,358.5L597.5,357.5M570.5,361.5L570.5,368.5L577.5,368.5L577.5,378.5M577.5,378.5L574.5,384.5L571.5,385.5L568.5,388.5L566.5,393.5M566.5,393.5L574.5,393.5L574.5,396.5L596.5,396.5M566.5,393.5L566.5,404.5L574.5,404.5L574.5,411.5M574.5,411.5L585.5,411.5L585.5,409.5L597.5,409.5M574.5,411.5L574.5,421.5L576.5,421.5L576.5,440.5M576.5,440.5L581.5,435.5L586.5,434.5L593.5,430.5L597.5,428.5M567.5,452.5L573.5,452.5L573.5,452.5L586.5,452.5M567.5,452.5L567.5,477.5M567.5,477.5L592.5,468.5M567.5,477.5L567.5,485.5L565.5,485.5L565.5,496.5M565.5,496.5L591.5,499.5M565.5,496.5L565.5,508.5L565.5,508.5L565.5,517.5M565.5,517.5L565.5,526.5L572.5,526.5L572.5,533.5M572.5,533.5L578.5,535.5L582.5,534.5L587.5,532.5L592.5,533.5M572.5,533.5L572.5,542.5L565.5,542.5L565.5,545.5M565.5,545.5L565.5,560.5L569.5,560.5L569.5,578.5M569.5,578.5L569.5,590.5L572.5,590.5L572.5,596.5M572.5,596.5L575.5,593.5L578.5,591.5L581.5,591.5L587.5,590.5M572.5,596.5L572.5,598.5L568.5,601.5L566.5,603.5L565.5,604.5M565.5,604.5L564.5,632.5M591.5,-16.5L591.5,-1.5L596.5,-1.5L596.5,9.5M596.5,9.5L601.5,9.5L601.5,12.5L610.5,12.5M596.5,9.5L596.5,20.5L592.5,20.5L592.5,27.5M592.5,27.5L592.5,37.5L593.5,37.5L593.5,45.5M593.5,45.5L609.5,45.5L609.5,40.5L615.5,40.5M593.5,45.5L593.5,51.5L589.5,51.5L589.5,62.5M589.5,62.5L600.5,62.5L600.5,66.5L612.5,66.5M589.5,62.5L589.5,78.5L591.5,78.5L591.5,83.5M591.5,83.5L591.5,97.5L591.5,97.5L591.5,103.5M591.5,103.5L604.5,103.5L604.5,101.5L611.5,101.5M595.5,128.5L598.5,124.5L606.5,124.5L611.5,122.5L615.5,119.5M595.5,128.5L590.5,128.5L590.5,135.5L587.5,135.5M587.5,135.5L599.5,135.5L599.5,138.5L613.5,138.5M587.5,135.5L588.5,155.5M588.5,155.5L593.5,156.5L598.5,161.5L604.5,163.5L610.5,168.5M588.5,155.5L588.5,162.5L593.5,168.5L592.5,174.5L595.5,183.5M595.5,183.5L606.5,178.5M595.5,183.5L595.5,192.5L587.5,192.5L587.5,196.5M587.5,196.5L587.5,211.5L596.5,211.5L596.5,225.5M596.5,225.5L597.5,223.5L600.5,220.5L604.5,219.5L604.5,216.5M596.5,225.5L596.5,230.5L593.5,230.5L593.5,242.5M593.5,242.5L593.5,250.5L594.5,250.5L594.5,258.5M594.5,258.5L594.5,266.5L589.5,266.5L589.5,279.5M589.5,279.5L617.5,281.5M596.5,305.5L601.5,303.5L606.5,301.5L610.5,299.5L612.5,296.5M596.5,305.5L596.5,322.5M596.5,322.5L613.5,317.5M596.5,322.5L592.5,322.5L592.5,333.5L585.5,333.5M585.5,333.5L588.5,335.5L593.5,336.5L599.5,336.5L604.5,337.5M585.5,333.5L586.5,338.5L590.5,344.5L595.5,350.5L597.5,357.5M597.5,357.5L600.5,357.5L600.5,357.5L608.5,357.5M597.5,357.5L597.5,368.5L591.5,368.5L591.5,373.5M591.5,373.5L596.5,373.5L596.5,369.5L604.5,369.5M591.5,373.5L596.5,396.5M596.5,396.5L602.5,394.5L605.5,396.5L613.5,394.5L617.5,394.5M596.5,396.5L596.5,402.5L597.5,402.5L597.5,409.5M597.5,409.5L608.5,410.5M597.5,409.5L597.5,416.5L597.5,416.5L597.5,428.5M597.5,428.5L607.5,428.5L607.5,440.5L611.5,440.5M597.5,428.5L595.5,433.5L592.5,440.5L588.5,445.5L586.5,452.5M586.5,452.5L589.5,455.5L591.5,459.5L591.5,466.5L592.5,468.5M592.5,468.5L610.5,477.5M591.5,499.5L599.5,499.5L599.5,489.5L611.5,489.5M591.5,499.5L591.5,508.5L590.5,508.5L590.5,516.5M590.5,516.5L590.5,519.5L590.5,524.5L592.5,530.5L592.5,533.5M586.5,551.5L593.5,551.5L593.5,547.5L603.5,547.5M586.5,551.5L596.5,573.5M596.5,573.5L596.5,579.5L587.5,579.5L587.5,590.5M587.5,590.5L593.5,590.5L593.5,594.5L612.5,594.5M587.5,590.5L587.5,599.5L591.5,599.5L591.5,608.5M591.5,608.5L603.5,608.5L603.5,613.5L614.5,613.5M603.5,-18.5L603.5,-11.5L608.5,0.5L610.5,3.5L610.5,12.5M610.5,12.5L613.5,10.5L618.5,11.5L620.5,7.5L625.5,6.5M607.5,22.5L630.5,23.5M607.5,22.5L609.5,28.5L612.5,29.5L612.5,34.5L615.5,40.5M615.5,40.5L619.5,40.5L619.5,38.5L629.5,38.5M615.5,40.5L614.5,48.5L613.5,52.5L613.5,61.5L612.5,66.5M612.5,66.5L612.5,70.5L616.5,70.5L616.5,77.5M616.5,77.5L619.5,77.5L623.5,79.5L623.5,77.5L627.5,77.5M616.5,77.5L611.5,101.5M611.5,101.5L635.5,104.5M611.5,101.5L611.5,109.5L615.5,109.5L615.5,119.5M613.5,138.5L621.5,139.5L623.5,139.5L632.5,136.5L636.5,137.5M613.5,138.5L613.5,149.5L610.5,149.5L610.5,168.5M610.5,168.5L621.5,168.5L621.5,164.5L628.5,164.5M610.5,168.5L611.5,171.5L608.5,172.5L605.5,174.5L606.5,178.5M606.5,178.5L612.5,178.5L612.5,184.5L628.5,184.5M616.5,203.5L635.5,194.5M616.5,203.5L616.5,212.5L604.5,212.5L604.5,216.5M604.5,216.5L626.5,217.5M606.5,237.5L621.5,237.5L621.5,243.5L633.5,243.5M606.5,237.5L609.5,241.5L610.5,250.5L612.5,257.5L615.5,262.5M615.5,262.5L615.5,271.5L617.5,271.5L617.5,281.5M617.5,281.5L622.5,281.5L622.5,277.5L625.5,277.5M617.5,281.5L614.5,285.5L612.5,288.5L614.5,293.5L612.5,296.5M612.5,296.5L624.5,296.5L624.5,302.5L634.5,302.5M613.5,317.5L613.5,324.5L604.5,324.5L604.5,337.5M604.5,337.5L633.5,342.5M604.5,337.5L603.5,342.5L606.5,346.5L609.5,352.5L608.5,357.5M608.5,357.5L620.5,357.5L620.5,358.5L628.5,358.5M608.5,357.5L604.5,369.5M604.5,369.5L612.5,369.5L612.5,382.5L636.5,382.5M604.5,369.5L604.5,376.5L617.5,376.5L617.5,394.5M617.5,394.5L631.5,401.5M617.5,394.5L613.5,398.5L613.5,403.5L611.5,406.5L608.5,410.5M608.5,410.5L616.5,410.5L616.5,420.5L637.5,420.5M608.5,410.5L608.5,426.5L611.5,426.5L611.5,440.5M611.5,440.5L615.5,440.5L623.5,441.5L625.5,440.5L632.5,441.5M606.5,454.5L606.5,464.5L610.5,464.5L610.5,477.5M610.5,477.5L630.5,468.5M610.5,477.5L611.5,480.5L611.5,483.5L610.5,486.5L611.5,489.5M611.5,489.5L626.5,489.5L626.5,487.5L633.5,487.5M611.5,489.5L606.5,516.5M606.5,516.5L606.5,523.5L604.5,523.5L604.5,537.5M604.5,537.5L627.5,533.5M604.5,537.5L605.5,538.5L603.5,543.5L603.5,546.5L603.5,547.5M603.5,547.5L614.5,547.5L614.5,551.5L625.5,551.5M603.5,547.5L610.5,576.5M610.5,576.5L612.5,594.5M612.5,594.5L622.5,594.5L622.5,589.5L626.5,589.5M612.5,594.5L612.5,607.5L614.5,607.5L614.5,613.5M614.5,613.5L632.5,606.5M614.5,613.5L604.5,634.5M630.5,-15.5L630.5,-9.5L625.5,-9.5L625.5,6.5M625.5,6.5L630.5,23.5M630.5,23.5L634.5,27.5L640.5,28.5L647.5,30.5L653.5,32.5M630.5,23.5L629.5,38.5M629.5,38.5L645.5,46.5M629.5,38.5L629.5,42.5L629.5,48.5L631.5,56.5L631.5,60.5M631.5,60.5L644.5,57.5M631.5,60.5L627.5,77.5M627.5,77.5L648.5,79.5M627.5,77.5L627.5,91.5L635.5,91.5L635.5,104.5M635.5,104.5L644.5,104.5L644.5,104.5L652.5,104.5M635.5,104.5L633.5,107.5L630.5,112.5L630.5,120.5L628.5,123.5M628.5,123.5L631.5,127.5L632.5,132.5L635.5,132.5L636.5,137.5M636.5,137.5L636.5,138.5L640.5,137.5L639.5,134.5L643.5,136.5M636.5,137.5L634.5,143.5L633.5,151.5L629.5,159.5L628.5,164.5M628.5,164.5L642.5,161.5M628.5,164.5L628.5,173.5L628.5,173.5L628.5,184.5M628.5,184.5L654.5,184.5M628.5,184.5L628.5,188.5L635.5,188.5L635.5,194.5M635.5,194.5L640.5,194.5L640.5,206.5L650.5,206.5M635.5,194.5L635.5,205.5L626.5,205.5L626.5,217.5M626.5,217.5L626.5,224.5L633.5,224.5L633.5,243.5M633.5,243.5L643.5,243.5L643.5,233.5L651.5,233.5M633.5,243.5L633.5,258.5L632.5,258.5L632.5,265.5M632.5,265.5L641.5,265.5L641.5,252.5L645.5,252.5M632.5,265.5L631.5,267.5L630.5,272.5L626.5,273.5L625.5,277.5M625.5,277.5L639.5,277.5L639.5,272.5L644.5,272.5M625.5,277.5L634.5,302.5M634.5,302.5L640.5,302.5L640.5,293.5L649.5,293.5M634.5,302.5L634.5,310.5L624.5,310.5L624.5,324.5M624.5,324.5L633.5,324.5L633.5,322.5L650.5,322.5M633.5,342.5L638.5,342.5L638.5,332.5L647.5,332.5M628.5,358.5L632.5,358.5L638.5,359.5L646.5,361.5L651.5,360.5M636.5,382.5L646.5,382.5L646.5,377.5L654.5,377.5M636.5,382.5L631.5,401.5M631.5,401.5L645.5,401.5L645.5,401.5L650.5,401.5M631.5,401.5L633.5,405.5L633.5,410.5L636.5,415.5L637.5,420.5M637.5,420.5L651.5,422.5M632.5,441.5L646.5,438.5M632.5,441.5L630.5,444.5L627.5,447.5L628.5,449.5L624.5,453.5M624.5,453.5L630.5,451.5L636.5,454.5L645.5,455.5L651.5,454.5M624.5,453.5L624.5,455.5L628.5,460.5L630.5,463.5L630.5,468.5M630.5,468.5L635.5,468.5L635.5,473.5L642.5,473.5M630.5,468.5L630.5,479.5L633.5,479.5L633.5,487.5M633.5,487.5L638.5,487.5L639.5,491.5L644.5,494.5L646.5,494.5M631.5,509.5L642.5,509.5L642.5,513.5L649.5,513.5M631.5,509.5L631.5,518.5L627.5,518.5L627.5,533.5M627.5,533.5L638.5,533.5L638.5,527.5L643.5,527.5M627.5,533.5L627.5,539.5L625.5,539.5L625.5,551.5M625.5,551.5L634.5,551.5L634.5,554.5L651.5,554.5M635.5,578.5L641.5,576.5L646.5,576.5L652.5,575.5L656.5,575.5M635.5,578.5L635.5,582.5L626.5,582.5L626.5,589.5M626.5,589.5L628.5,593.5L629.5,599.5L630.5,603.5L632.5,606.5M632.5,606.5L632.5,618.5L634.5,618.5L634.5,625.5M652.5,1.5L653.5,32.5M653.5,32.5L674.5,28.5M653.5,32.5L653.5,37.5L645.5,37.5L645.5,46.5M645.5,46.5L654.5,46.5L654.5,47.5L662.5,47.5M645.5,46.5L644.5,57.5M644.5,57.5L654.5,57.5L654.5,63.5L664.5,63.5M644.5,57.5L644.5,71.5L648.5,71.5L648.5,79.5M648.5,79.5L654.5,77.5L661.5,80.5L665.5,76.5L670.5,77.5M648.5,79.5L649.5,85.5L652.5,90.5L650.5,96.5L652.5,104.5M652.5,104.5L668.5,104.5L668.5,101.5L675.5,101.5M652.5,104.5L652.5,122.5L651.5,122.5L651.5,129.5M651.5,129.5L658.5,129.5L658.5,126.5L664.5,126.5M651.5,129.5L643.5,136.5M643.5,136.5L650.5,136.5L650.5,136.5L663.5,136.5M643.5,136.5L643.5,153.5L642.5,153.5L642.5,161.5M642.5,161.5L654.5,161.5L654.5,161.5L671.5,161.5M642.5,161.5L654.5,184.5M654.5,184.5L674.5,185.5M654.5,184.5L650.5,206.5M650.5,206.5L654.5,206.5L654.5,194.5L664.5,194.5M650.5,206.5L647.5,215.5M647.5,215.5L648.5,218.5L649.5,222.5L649.5,228.5L651.5,233.5M651.5,233.5L658.5,233.5L658.5,245.5L666.5,245.5M651.5,233.5L651.5,242.5L645.5,242.5L645.5,252.5M645.5,252.5L657.5,252.5L657.5,261.5L664.5,261.5M645.5,252.5L644.5,259.5L643.5,263.5L645.5,267.5L644.5,272.5M644.5,272.5L663.5,284.5M649.5,293.5L655.5,294.5L664.5,296.5L668.5,300.5L675.5,300.5M649.5,293.5L649.5,306.5L650.5,306.5L650.5,322.5M650.5,322.5L662.5,322.5L662.5,321.5L666.5,321.5M647.5,332.5L654.5,336.5L661.5,338.5L667.5,340.5L674.5,341.5M647.5,332.5L647.5,343.5L651.5,343.5L651.5,360.5M651.5,360.5L656.5,361.5L657.5,359.5L661.5,356.5L662.5,357.5M654.5,377.5L663.5,377.5M654.5,377.5L654.5,389.5L650.5,389.5L650.5,401.5M650.5,401.5L658.5,402.5L661.5,399.5L668.5,399.5L675.5,401.5M650.5,401.5L650.5,416.5L651.5,416.5L651.5,422.5M651.5,422.5L654.5,419.5L658.5,419.5L660.5,415.5L665.5,416.5M651.5,422.5L651.5,428.5L646.5,428.5L646.5,438.5M646.5,438.5L666.5,430.5M646.5,438.5L646.5,446.5L651.5,446.5L651.5,454.5M651.5,454.5L655.5,454.5L662.5,454.5L666.5,457.5L672.5,458.5M651.5,454.5L648.5,458.5L645.5,465.5L646.5,466.5L642.5,473.5M642.5,473.5L666.5,472.5M642.5,473.5L642.5,480.5L646.5,480.5L646.5,494.5M646.5,494.5L671.5,496.5M646.5,494.5L646.5,500.5L649.5,500.5L649.5,513.5M649.5,513.5L660.5,513.5L660.5,507.5L668.5,507.5M649.5,513.5L649.5,523.5L643.5,523.5L643.5,527.5M643.5,527.5L648.5,526.5L651.5,528.5L659.5,528.5L663.5,527.5M643.5,527.5L643.5,547.5L651.5,547.5L651.5,554.5M651.5,554.5L650.5,560.5L654.5,566.5L653.5,568.5L656.5,575.5M656.5,575.5L671.5,569.5M656.5,575.5L653.5,578.5L650.5,582.5L650.5,587.5L646.5,590.5M649.5,614.5L658.5,614.5L658.5,611.5L675.5,611.5M649.5,614.5L649.5,629.5L648.5,629.5L648.5,635.5M663.5,0.5L674.5,0.5L674.5,10.5L682.5,10.5M663.5,0.5L663.5,15.5L674.5,15.5L674.5,28.5M674.5,28.5L682.5,28.5L682.5,22.5L694.5,22.5M662.5,47.5L668.5,45.5L673.5,42.5L681.5,43.5L686.5,39.5M664.5,63.5L676.5,63.5L676.5,66.5L683.5,66.5M664.5,63.5L664.5,72.5L670.5,72.5L670.5,77.5M670.5,77.5L694.5,78.5M670.5,77.5L673.5,82.5L670.5,87.5L672.5,93.5L675.5,101.5M675.5,101.5L678.5,101.5L678.5,107.5L685.5,107.5M664.5,126.5L669.5,128.5L675.5,129.5L678.5,129.5L684.5,128.5M664.5,126.5L663.5,136.5M663.5,136.5L686.5,142.5M663.5,136.5L671.5,161.5M674.5,185.5L677.5,185.5L679.5,182.5L685.5,179.5L687.5,178.5M674.5,185.5L667.5,185.5L667.5,194.5L664.5,194.5M664.5,194.5L683.5,194.5L683.5,194.5L691.5,194.5M670.5,220.5L690.5,224.5M666.5,245.5L673.5,242.5L677.5,240.5L681.5,239.5L686.5,235.5M666.5,245.5L666.5,257.5L664.5,257.5L664.5,261.5M664.5,261.5L676.5,261.5L676.5,253.5L683.5,253.5M664.5,261.5L662.5,265.5L665.5,273.5L663.5,279.5L663.5,284.5M663.5,284.5L678.5,284.5L678.5,280.5L692.5,280.5M663.5,284.5L675.5,300.5M675.5,300.5L677.5,300.5L677.5,297.5L681.5,297.5M666.5,321.5L689.5,315.5M666.5,321.5L668.5,327.5L671.5,330.5L672.5,338.5L674.5,341.5M674.5,341.5L680.5,341.5L680.5,336.5L681.5,336.5M674.5,341.5L671.5,344.5L670.5,349.5L665.5,351.5L662.5,357.5M663.5,377.5L673.5,377.5L673.5,382.5L686.5,382.5M675.5,401.5L681.5,401.5L685.5,397.5L688.5,396.5L693.5,397.5M675.5,401.5L675.5,409.5L665.5,409.5L665.5,416.5M665.5,416.5L670.5,419.5L673.5,418.5L680.5,416.5L683.5,419.5M665.5,416.5L665.5,423.5L666.5,423.5L666.5,430.5M666.5,430.5L678.5,430.5L678.5,435.5L682.5,435.5M666.5,430.5L666.5,441.5L672.5,441.5L672.5,458.5M672.5,458.5L677.5,458.5L677.5,448.5L682.5,448.5M672.5,458.5L666.5,472.5M666.5,472.5L671.5,496.5M671.5,496.5L679.5,494.5L685.5,495.5L689.5,496.5L695.5,494.5M671.5,496.5L671.5,504.5L668.5,504.5L668.5,507.5M668.5,507.5L663.5,527.5M663.5,527.5L664.5,535.5L667.5,540.5L671.5,545.5L673.5,551.5M673.5,551.5L677.5,554.5L679.5,554.5L684.5,553.5L688.5,555.5M673.5,551.5L673.5,559.5L671.5,559.5L671.5,569.5M671.5,569.5L669.5,575.5L668.5,578.5L666.5,580.5L667.5,586.5M667.5,586.5L680.5,586.5L680.5,589.5L688.5,589.5M675.5,611.5L688.5,613.5M675.5,611.5L675.5,624.5L663.5,624.5L663.5,632.5M685.5,-16.5L684.5,-8.5L682.5,-2.5L684.5,4.5L682.5,10.5M682.5,10.5L694.5,22.5M694.5,22.5L698.5,22.5L698.5,24.5L710.5,24.5M694.5,22.5L692.5,25.5L691.5,32.5L687.5,34.5L686.5,39.5M686.5,39.5L690.5,39.5L696.5,40.5L702.5,41.5L708.5,40.5M686.5,39.5L685.5,45.5L684.5,52.5L682.5,58.5L683.5,66.5M683.5,66.5L691.5,66.5L691.5,61.5L707.5,61.5M683.5,66.5L694.5,78.5M694.5,78.5L700.5,78.5L700.5,78.5L710.5,78.5M694.5,78.5L694.5,94.5L685.5,94.5L685.5,107.5M685.5,107.5L702.5,99.5M685.5,107.5L685.5,121.5L684.5,121.5L684.5,128.5M684.5,128.5L684.5,138.5L686.5,138.5L686.5,142.5M686.5,142.5L693.5,142.5L693.5,149.5L701.5,149.5M686.5,142.5L685.5,145.5L683.5,149.5L683.5,155.5L684.5,159.5M684.5,159.5L687.5,178.5M687.5,178.5L703.5,186.5M687.5,178.5L687.5,189.5L691.5,189.5L691.5,194.5M691.5,194.5L714.5,196.5M691.5,194.5L691.5,201.5L690.5,201.5L690.5,224.5M690.5,224.5L711.5,224.5M690.5,224.5L686.5,235.5M686.5,235.5L683.5,253.5M683.5,253.5L683.5,272.5L692.5,272.5L692.5,280.5M692.5,280.5L694.5,279.5L698.5,284.5L700.5,283.5L704.5,284.5M692.5,280.5L692.5,291.5L681.5,291.5L681.5,297.5M681.5,297.5L700.5,297.5L700.5,298.5L713.5,298.5M689.5,315.5L702.5,315.5M689.5,315.5L689.5,330.5L681.5,330.5L681.5,336.5M681.5,336.5L688.5,338.5L692.5,336.5L700.5,338.5L704.5,339.5M681.5,336.5L681.5,356.5L686.5,356.5L686.5,363.5M686.5,363.5L686.5,367.5L687.5,372.5L686.5,379.5L686.5,382.5M686.5,382.5L692.5,382.5L692.5,375.5L707.5,375.5M686.5,382.5L686.5,389.5L693.5,389.5L693.5,397.5M693.5,397.5L695.5,398.5L701.5,394.5L704.5,394.5L707.5,394.5M693.5,397.5L693.5,411.5L683.5,411.5L683.5,419.5M683.5,419.5L695.5,419.5L695.5,418.5L707.5,418.5M682.5,435.5L693.5,435.5L693.5,432.5L710.5,432.5M682.5,435.5L682.5,444.5L682.5,444.5L682.5,448.5M682.5,448.5L690.5,448.5L690.5,449.5L708.5,449.5M687.5,469.5L701.5,472.5M687.5,469.5L687.5,486.5L695.5,486.5L695.5,494.5M695.5,494.5L699.5,494.5L699.5,486.5L706.5,486.5M695.5,494.5L695.5,502.5L694.5,502.5L694.5,519.5M694.5,519.5L696.5,519.5L696.5,511.5L702.5,511.5M694.5,519.5L692.5,524.5L693.5,528.5L692.5,532.5L692.5,534.5M692.5,534.5L688.5,555.5M688.5,555.5L689.5,557.5L689.5,559.5L689.5,565.5L690.5,566.5M690.5,566.5L698.5,566.5L698.5,568.5L706.5,568.5M690.5,566.5L690.5,583.5L688.5,583.5L688.5,589.5M688.5,589.5L696.5,589.5L696.5,592.5L702.5,592.5M688.5,589.5L688.5,601.5L688.5,601.5L688.5,613.5M688.5,613.5L700.5,613.5L700.5,608.5L712.5,608.5M688.5,613.5L691.5,630.5M691.5,630.5L699.5,630.5L699.5,624.5L703.5,624.5M701.5,-16.5L701.5,-7.5L711.5,-7.5L711.5,7.5M711.5,7.5L710.5,24.5M710.5,24.5L731.5,20.5M710.5,24.5L710.5,29.5L708.5,29.5L708.5,40.5M708.5,40.5L708.5,51.5L707.5,51.5L707.5,61.5M707.5,61.5L717.5,61.5L717.5,67.5L732.5,67.5M710.5,78.5L723.5,89.5M710.5,78.5L710.5,88.5L702.5,88.5L702.5,99.5M702.5,99.5L724.5,99.5L724.5,103.5L732.5,103.5M702.5,99.5L702.5,110.5L708.5,110.5L708.5,124.5M708.5,124.5L717.5,124.5L717.5,119.5L721.5,119.5M708.5,124.5L707.5,128.5L703.5,136.5L703.5,142.5L701.5,149.5M701.5,149.5L708.5,149.5L708.5,141.5L724.5,141.5M701.5,149.5L702.5,151.5L706.5,153.5L709.5,158.5L712.5,160.5M712.5,160.5L716.5,162.5L721.5,162.5L726.5,163.5L733.5,163.5M712.5,160.5L712.5,167.5L703.5,167.5L703.5,186.5M703.5,186.5L731.5,175.5M703.5,186.5L707.5,187.5L709.5,190.5L710.5,194.5L714.5,196.5M714.5,196.5L716.5,197.5L718.5,198.5L721.5,204.5L723.5,204.5M714.5,196.5L712.5,202.5L712.5,208.5L711.5,219.5L711.5,224.5M711.5,224.5L716.5,224.5L716.5,216.5L725.5,216.5M711.5,224.5L710.5,227.5L713.5,231.5L711.5,233.5L714.5,235.5M702.5,254.5L712.5,254.5L712.5,260.5L726.5,260.5M702.5,254.5L704.5,284.5M704.5,284.5L708.5,284.5L713.5,283.5L720.5,281.5L726.5,279.5M704.5,284.5L704.5,286.5L707.5,290.5L712.5,295.5L713.5,298.5M713.5,298.5L702.5,315.5M702.5,315.5L711.5,317.5L716.5,314.5L721.5,315.5L729.5,315.5M702.5,315.5L702.5,332.5L704.5,332.5L704.5,339.5M704.5,339.5L704.5,347.5L711.5,347.5L711.5,360.5M711.5,360.5L711.5,366.5L707.5,366.5L707.5,375.5M707.5,375.5L707.5,383.5L707.5,383.5L707.5,394.5M707.5,394.5L711.5,394.5L711.5,389.5L722.5,389.5M707.5,394.5L707.5,407.5L707.5,407.5L707.5,418.5M707.5,418.5L721.5,418.5L721.5,408.5L727.5,408.5M707.5,418.5L707.5,425.5L710.5,425.5L710.5,432.5M710.5,432.5L732.5,433.5M710.5,432.5L710.5,441.5L708.5,441.5L708.5,449.5M708.5,449.5L720.5,449.5L720.5,454.5L726.5,454.5M708.5,449.5L701.5,472.5M701.5,472.5L720.5,468.5M701.5,472.5L706.5,486.5M706.5,486.5L712.5,486.5L712.5,494.5L731.5,494.5M706.5,486.5L706.5,501.5L702.5,501.5L702.5,511.5M702.5,511.5L709.5,510.5L714.5,511.5L721.5,512.5L727.5,510.5M702.5,511.5L702.5,523.5L714.5,523.5L714.5,537.5M714.5,537.5L731.5,532.5M714.5,537.5L701.5,549.5M701.5,549.5L706.5,568.5M706.5,568.5L716.5,568.5L716.5,574.5L733.5,574.5M706.5,568.5L702.5,592.5M702.5,592.5L710.5,592.5L710.5,590.5L729.5,590.5M712.5,608.5L723.5,608.5L723.5,611.5L727.5,611.5M712.5,608.5L712.5,617.5L703.5,617.5L703.5,624.5M703.5,624.5L703.5,633.5L701.5,633.5L701.5,653.5M734.5,1.5L732.5,4.5L731.5,9.5L733.5,13.5L731.5,20.5M731.5,20.5L724.5,44.5M724.5,44.5L728.5,49.5L729.5,57.5L730.5,61.5L732.5,67.5M732.5,67.5L747.5,67.5L747.5,64.5L753.5,64.5M732.5,67.5L723.5,89.5M723.5,89.5L736.5,89.5L736.5,83.5L740.5,83.5M732.5,103.5L738.5,103.5L738.5,97.5L744.5,97.5M732.5,103.5L721.5,119.5M721.5,119.5L735.5,119.5L735.5,129.5L752.5,129.5M721.5,119.5L721.5,132.5L724.5,132.5L724.5,141.5M724.5,141.5L728.5,145.5L729.5,153.5L732.5,157.5L733.5,163.5M733.5,163.5L733.5,168.5L731.5,168.5L731.5,175.5M731.5,175.5L736.5,175.5L736.5,179.5L741.5,179.5M731.5,175.5L723.5,204.5M723.5,204.5L734.5,204.5L734.5,200.5L745.5,200.5M723.5,204.5L724.5,206.5L726.5,209.5L723.5,212.5L725.5,216.5M725.5,216.5L733.5,216.5L733.5,221.5L746.5,221.5M725.5,216.5L721.5,233.5M721.5,233.5L730.5,234.5L738.5,239.5L744.5,244.5L753.5,246.5M721.5,233.5L721.5,251.5L726.5,251.5L726.5,260.5M726.5,260.5L726.5,265.5L726.5,265.5L726.5,279.5M726.5,279.5L731.5,279.5L731.5,275.5L743.5,275.5M726.5,279.5L726.5,287.5L724.5,287.5L724.5,291.5M724.5,291.5L727.5,297.5L726.5,305.5L729.5,309.5L729.5,315.5M729.5,315.5L742.5,315.5L742.5,315.5L748.5,315.5M729.5,315.5L729.5,320.5L727.5,320.5L727.5,335.5M727.5,335.5L744.5,335.5L744.5,334.5L753.5,334.5M727.5,335.5L727.5,338.5L726.5,341.5L726.5,348.5L724.5,350.5M724.5,350.5L734.5,350.5L734.5,351.5L740.5,351.5M724.5,350.5L725.5,357.5L722.5,361.5L723.5,367.5L724.5,373.5M724.5,373.5L734.5,373.5L734.5,379.5L742.5,379.5M724.5,373.5L722.5,389.5M722.5,389.5L731.5,389.5L731.5,389.5L751.5,389.5M722.5,389.5L727.5,408.5M727.5,408.5L735.5,408.5L735.5,411.5L743.5,411.5M727.5,408.5L727.5,416.5L732.5,416.5L732.5,433.5M732.5,433.5L744.5,433.5L744.5,440.5L751.5,440.5M732.5,433.5L732.5,442.5L726.5,442.5L726.5,454.5M726.5,454.5L743.5,448.5M726.5,454.5L726.5,462.5L720.5,462.5L720.5,468.5M720.5,468.5L739.5,468.5L739.5,480.5L753.5,480.5M720.5,468.5L720.5,482.5L731.5,482.5L731.5,494.5M731.5,494.5L731.5,499.5L727.5,499.5L727.5,510.5M731.5,532.5L747.5,529.5M731.5,556.5L738.5,556.5L738.5,554.5L747.5,554.5M731.5,556.5L731.5,565.5L733.5,565.5L733.5,574.5M733.5,574.5L735.5,575.5L737.5,575.5L742.5,573.5L744.5,573.5M733.5,574.5L729.5,590.5M729.5,590.5L729.5,603.5L727.5,603.5L727.5,611.5M727.5,611.5L742.5,606.5M727.5,611.5L727.5,627.5L727.5,627.5L727.5,634.5M750.5,2.5L750.5,16.5L741.5,16.5L741.5,28.5M741.5,28.5L753.5,28.5L753.5,24.5L770.5,24.5M741.5,28.5L741.5,35.5L750.5,35.5L750.5,38.5M750.5,38.5L751.5,40.5L755.5,40.5L758.5,43.5L762.5,44.5M750.5,38.5L750.5,48.5L753.5,48.5L753.5,64.5M753.5,64.5L762.5,64.5L762.5,65.5L769.5,65.5M753.5,64.5L753.5,73.5L740.5,73.5L740.5,83.5M740.5,83.5L745.5,83.5L745.5,77.5L761.5,77.5M740.5,83.5L744.5,97.5M744.5,97.5L750.5,97.5L750.5,99.5L765.5,99.5M744.5,97.5L752.5,129.5M752.5,129.5L755.5,129.5L755.5,119.5L762.5,119.5M752.5,129.5L752.5,137.5L741.5,137.5L741.5,141.5M741.5,141.5L755.5,141.5L755.5,145.5L765.5,145.5M741.5,141.5L743.5,164.5M743.5,164.5L772.5,164.5M743.5,164.5L743.5,174.5L741.5,174.5L741.5,179.5M741.5,179.5L745.5,179.5L751.5,181.5L756.5,183.5L759.5,186.5M741.5,179.5L741.5,190.5L745.5,190.5L745.5,200.5M746.5,221.5L752.5,219.5L757.5,219.5L761.5,217.5L768.5,218.5M746.5,221.5L746.5,231.5L753.5,231.5L753.5,246.5M753.5,246.5L764.5,233.5M753.5,246.5L753.5,256.5L752.5,256.5L752.5,264.5M752.5,264.5L760.5,264.5L760.5,253.5L768.5,253.5M752.5,264.5L750.5,265.5L747.5,269.5L745.5,271.5L743.5,275.5M743.5,275.5L769.5,284.5M746.5,300.5L748.5,303.5L749.5,307.5L749.5,310.5L748.5,315.5M748.5,315.5L753.5,316.5L758.5,321.5L764.5,321.5L770.5,324.5M748.5,315.5L753.5,334.5M753.5,334.5L770.5,344.5M753.5,334.5L753.5,343.5L740.5,343.5L740.5,351.5M740.5,351.5L765.5,350.5M740.5,351.5L740.5,359.5L740.5,367.5L744.5,374.5L742.5,379.5M742.5,379.5L747.5,380.5L755.5,377.5L761.5,379.5L768.5,378.5M742.5,379.5L746.5,382.5L747.5,383.5L750.5,386.5L751.5,389.5M751.5,389.5L758.5,389.5L758.5,397.5L771.5,397.5M751.5,389.5L743.5,411.5M743.5,411.5L746.5,412.5L752.5,409.5L759.5,408.5L764.5,408.5M743.5,411.5L745.5,418.5L746.5,427.5L748.5,431.5L751.5,440.5M751.5,440.5L762.5,440.5L762.5,436.5L771.5,436.5M751.5,440.5L751.5,445.5L743.5,445.5L743.5,448.5M743.5,448.5L751.5,448.5L751.5,455.5L773.5,455.5M743.5,448.5L745.5,455.5L748.5,463.5L751.5,474.5L753.5,480.5M753.5,480.5L766.5,480.5L766.5,477.5L771.5,477.5M750.5,493.5L760.5,493.5L760.5,492.5L773.5,492.5M750.5,493.5L750.5,516.5M750.5,516.5L772.5,511.5M750.5,516.5L750.5,525.5L747.5,525.5L747.5,529.5M747.5,529.5L755.5,529.5L755.5,530.5L759.5,530.5M747.5,529.5L747.5,542.5L747.5,542.5L747.5,554.5M747.5,554.5L753.5,556.5L756.5,557.5L760.5,558.5L764.5,558.5M747.5,554.5L747.5,563.5L744.5,563.5L744.5,573.5M744.5,573.5L752.5,573.5L752.5,568.5L765.5,568.5M744.5,573.5L744.5,580.5L741.5,585.5L740.5,592.5L742.5,597.5M742.5,597.5L758.5,597.5L758.5,585.5L769.5,585.5M742.5,597.5L742.5,601.5L742.5,601.5L742.5,606.5M742.5,606.5L747.5,606.5L752.5,607.5L756.5,606.5L763.5,609.5M742.5,606.5L745.5,616.5L746.5,620.5L752.5,630.5L753.5,636.5M768.5,-19.5L768.5,-1.5L772.5,-1.5L772.5,9.5M772.5,9.5L791.5,9.5M772.5,9.5L771.5,11.5L773.5,17.5L772.5,21.5L770.5,24.5M770.5,24.5L775.5,24.5L775.5,20.5L779.5,20.5M770.5,24.5L769.5,28.5L764.5,35.5L762.5,41.5L762.5,44.5M762.5,44.5L763.5,51.5L766.5,53.5L768.5,60.5L769.5,65.5M769.5,65.5L792.5,68.5M761.5,77.5L761.5,93.5L765.5,93.5L765.5,99.5M765.5,99.5L769.5,100.5L774.5,103.5L783.5,105.5L787.5,104.5M765.5,99.5L764.5,102.5L763.5,111.5L763.5,114.5L762.5,119.5M762.5,119.5L768.5,119.5L768.5,129.5L780.5,129.5M762.5,119.5L762.5,136.5L765.5,136.5L765.5,145.5M765.5,145.5L771.5,145.5L771.5,139.5L786.5,139.5M772.5,164.5L792.5,160.5M759.5,186.5L759.5,196.5L768.5,196.5L768.5,204.5M768.5,204.5L771.5,204.5L771.5,197.5L782.5,197.5M768.5,204.5L768.5,211.5L768.5,211.5L768.5,218.5M768.5,218.5L768.5,228.5L764.5,228.5L764.5,233.5M764.5,233.5L783.5,242.5M764.5,233.5L765.5,237.5L765.5,243.5L766.5,249.5L768.5,253.5M768.5,253.5L776.5,253.5L776.5,266.5L791.5,266.5M768.5,253.5L769.5,284.5M769.5,284.5L773.5,282.5L781.5,286.5L785.5,285.5L791.5,284.5M769.5,284.5L769.5,290.5L768.5,290.5L768.5,299.5M768.5,299.5L776.5,299.5L776.5,303.5L782.5,303.5M768.5,299.5L770.5,324.5M770.5,324.5L770.5,330.5L770.5,330.5L770.5,344.5M770.5,344.5L770.5,337.5L780.5,337.5L780.5,331.5M770.5,344.5L765.5,350.5M765.5,350.5L775.5,350.5L775.5,351.5L792.5,351.5M765.5,350.5L765.5,369.5L768.5,369.5L768.5,378.5M768.5,378.5L789.5,376.5M768.5,378.5L768.5,390.5L771.5,390.5L771.5,397.5M771.5,397.5L774.5,400.5L774.5,400.5L776.5,398.5L778.5,400.5M764.5,408.5L774.5,408.5L774.5,420.5L779.5,420.5M764.5,408.5L764.5,418.5L771.5,418.5L771.5,436.5M771.5,436.5L790.5,434.5M771.5,436.5L771.5,449.5L773.5,449.5L773.5,455.5M773.5,455.5L776.5,455.5L779.5,451.5L780.5,448.5L785.5,447.5M773.5,455.5L771.5,477.5M771.5,477.5L781.5,477.5L781.5,467.5L788.5,467.5M771.5,477.5L771.5,483.5L773.5,483.5L773.5,492.5M773.5,492.5L779.5,492.5L779.5,499.5L786.5,499.5M773.5,492.5L773.5,502.5L772.5,502.5L772.5,511.5M772.5,511.5L788.5,507.5M772.5,511.5L772.5,523.5L759.5,523.5L759.5,530.5M759.5,530.5L766.5,529.5L773.5,532.5L782.5,533.5L789.5,535.5M759.5,530.5L764.5,558.5M764.5,558.5L783.5,555.5M764.5,558.5L765.5,568.5M765.5,568.5L780.5,568.5L780.5,570.5L787.5,570.5M765.5,568.5L769.5,585.5M769.5,585.5L773.5,585.5L773.5,587.5L786.5,587.5M769.5,585.5L769.5,595.5L763.5,595.5L763.5,609.5M763.5,609.5L775.5,609.5L775.5,615.5L783.5,615.5M763.5,609.5L761.5,631.5M788.5,-12.5L789.5,-5.5L791.5,0.5L789.5,3.5L791.5,9.5M791.5,9.5L799.5,9.5L799.5,10.5L802.5,10.5M791.5,9.5L779.5,20.5M779.5,20.5L805.5,19.5M779.5,20.5L780.5,28.5L784.5,34.5L788.5,43.5L789.5,49.5M789.5,49.5L796.5,49.5L796.5,46.5L798.5,46.5M789.5,49.5L792.5,68.5M792.5,68.5L799.5,64.5L802.5,62.5L807.5,60.5L810.5,58.5M792.5,68.5L781.5,84.5M781.5,84.5L789.5,84.5L789.5,80.5L808.5,80.5M787.5,104.5L808.5,108.5M787.5,104.5L780.5,129.5M780.5,129.5L791.5,129.5L791.5,119.5L808.5,119.5M780.5,129.5L780.5,136.5L786.5,136.5L786.5,139.5M786.5,139.5L792.5,139.5L792.5,149.5L800.5,149.5M786.5,139.5L786.5,149.5L792.5,149.5L792.5,160.5M792.5,160.5L796.5,160.5L801.5,163.5L806.5,164.5L811.5,167.5M792.5,160.5L779.5,183.5M779.5,183.5L794.5,183.5L794.5,175.5L806.5,175.5M782.5,197.5L781.5,202.5L784.5,208.5L781.5,216.5L783.5,222.5M783.5,222.5L799.5,217.5M783.5,242.5L787.5,243.5L792.5,244.5L794.5,245.5L799.5,245.5M783.5,242.5L784.5,248.5L787.5,253.5L790.5,260.5L791.5,266.5M791.5,266.5L790.5,269.5L792.5,274.5L791.5,281.5L791.5,284.5M791.5,284.5L791.5,291.5L782.5,291.5L782.5,303.5M782.5,303.5L804.5,300.5M782.5,303.5L782.5,308.5L780.5,308.5L780.5,319.5M780.5,319.5L785.5,317.5L794.5,314.5L802.5,315.5L807.5,312.5M780.5,319.5L780.5,331.5M780.5,331.5L780.5,342.5L792.5,342.5L792.5,351.5M792.5,351.5L795.5,354.5L797.5,354.5L800.5,359.5L804.5,361.5M789.5,376.5L798.5,376.5L798.5,381.5L802.5,381.5M789.5,376.5L787.5,384.5L785.5,387.5L780.5,392.5L778.5,400.5M778.5,400.5L778.5,410.5L779.5,410.5L779.5,420.5M779.5,420.5L798.5,420.5L798.5,408.5L809.5,408.5M779.5,420.5L779.5,426.5L790.5,426.5L790.5,434.5M790.5,434.5L806.5,435.5M790.5,434.5L785.5,447.5M785.5,447.5L785.5,460.5L788.5,460.5L788.5,467.5M788.5,467.5L794.5,467.5L794.5,470.5L808.5,470.5M788.5,467.5L788.5,486.5L786.5,486.5L786.5,499.5M786.5,499.5L787.5,499.5L787.5,504.5L787.5,506.5L788.5,507.5M788.5,507.5L796.5,507.5L796.5,513.5L802.5,513.5M788.5,507.5L788.5,526.5L789.5,526.5L789.5,535.5M789.5,535.5L793.5,535.5L793.5,535.5L799.5,535.5M789.5,535.5L789.5,540.5L783.5,540.5L783.5,555.5M783.5,555.5L804.5,545.5M783.5,555.5L787.5,570.5M787.5,570.5L792.5,570.5L792.5,577.5L800.5,577.5M787.5,570.5L787.5,573.5L785.5,577.5L786.5,584.5L786.5,587.5M786.5,587.5L810.5,596.5M786.5,587.5L783.5,615.5M783.5,615.5L788.5,616.5L793.5,615.5L797.5,618.5L803.5,617.5M783.5,615.5L783.5,624.5L783.5,624.5L783.5,633.5M803.5,-7.5L804.5,-2.5L801.5,3.5L802.5,6.5L802.5,10.5M802.5,10.5L810.5,11.5L813.5,10.5L822.5,9.5L827.5,10.5M802.5,10.5L802.5,16.5L805.5,16.5L805.5,19.5M805.5,19.5L798.5,46.5M798.5,46.5L829.5,49.5M798.5,46.5L803.5,46.5L803.5,58.5L810.5,58.5M800.5,149.5L807.5,149.5L807.5,147.5L824.5,147.5M800.5,149.5L803.5,154.5L804.5,157.5L806.5,161.5L811.5,167.5M803.5,206.5L808.5,206.5L811.5,205.5L816.5,202.5L821.5,202.5M803.5,206.5L803.5,214.5L799.5,214.5L799.5,217.5M799.5,217.5L802.5,217.5L810.5,222.5L812.5,223.5L818.5,222.5M799.5,217.5L799.5,245.5M799.5,245.5L831.5,240.5M799.5,245.5L799.5,250.5L803.5,250.5L803.5,253.5M803.5,253.5L807.5,253.5L807.5,260.5L820.5,260.5M803.5,253.5L803.5,269.5L803.5,269.5L803.5,274.5M804.5,300.5L807.5,297.5L811.5,299.5L814.5,297.5L819.5,297.5M804.5,300.5L804.5,306.5L807.5,306.5L807.5,312.5M807.5,312.5L805.5,318.5L807.5,323.5L808.5,325.5L805.5,331.5M805.5,331.5L804.5,361.5M804.5,361.5L810.5,360.5L812.5,357.5L818.5,353.5L824.5,350.5M804.5,361.5L804.5,366.5L802.5,366.5L802.5,381.5M802.5,381.5L816.5,381.5L816.5,377.5L829.5,377.5M802.5,381.5L802.5,386.5L801.5,386.5L801.5,394.5M801.5,394.5L805.5,394.5L810.5,391.5L818.5,391.5L823.5,391.5M801.5,394.5L801.5,404.5L809.5,404.5L809.5,408.5M808.5,470.5L808.5,486.5L801.5,486.5L801.5,493.5M801.5,493.5L808.5,492.5L817.5,492.5L824.5,494.5L830.5,494.5M801.5,493.5L801.5,499.5L802.5,499.5L802.5,513.5M802.5,513.5L815.5,513.5L815.5,509.5L820.5,509.5M802.5,513.5L802.5,523.5L799.5,523.5L799.5,535.5M799.5,535.5L814.5,535.5L814.5,533.5L829.5,533.5M799.5,535.5L799.5,539.5L804.5,539.5L804.5,545.5M804.5,545.5L827.5,553.5M800.5,577.5L804.5,574.5L808.5,571.5L813.5,571.5L818.5,567.5M800.5,577.5L803.5,582.5L804.5,585.5L808.5,592.5L810.5,596.5M810.5,596.5L803.5,617.5M803.5,617.5L803.5,622.5L800.5,622.5L800.5,633.5" fill="none" stroke="#616567" stroke-width="1"/>
<path d="M299.2,59.4 L301.1,62.4 L304.0,63.5 L305.9,61.6 L305.9,58.7 L307.7,57.9 L310.3,59.4 L310.3,68.6 L314.4,73.1 L314.4,81.9 L317.3,87.1 L321.0,91.5 L322.5,96.7 L323.6,95.2 L323.6,90.8 L319.5,83.4 L319.5,78.2 L318.4,74.5 L323.6,73.4 L323.6,70.8 L321.4,70.5 L319.5,71.6 L316.6,67.2 L315.1,61.2 L313.6,57.2 L308.5,55.0 L304.4,56.4 L302.6,60.1 L300.3,59.0 Z" fill="#2d4866" stroke="#24405f" stroke-width="1"/>
<path d="M368.5,261.4 L374.7,258.5 L382.0,263.9 L390.7,268.8 L396.8,276.0 L393.0,275.0 L385.8,270.0 L378.4,265.0 L371.0,262.7 Z" fill="#2d4866" stroke="#24405f" stroke-width="1"/>
<path d="M440.0,375.0 L443.0,369.0 L448.0,363.0 L451.0,364.0 L449.0,370.0 L445.0,377.0 L441.0,377.5 Z" fill="#2d4866" stroke="#24405f" stroke-width="1"/>
<path d="M604.2,306.6 L606.9,308.6 L609.4,307.6 L609.4,304.0 L611.3,305.6 L614.3,304.6 L614.8,301.2 L615.8,298.7 L612.3,297.2 L612.3,293.8 L615.8,294.8 L614.3,290.3 L612.3,289.4 L614.5,284.9 L615.0,287.4 L617.2,287.4 L618.7,289.4 L616.3,290.8 L616.5,294.8 L622.7,294.8 L624.1,293.3 L620.2,291.3 L621.7,289.9 L620.2,286.4 L621.7,286.2 L623.2,289.9 L625.1,292.8 L627.8,293.3 L625.6,296.3 L624.1,299.2 L621.7,300.7 L620.7,303.2 L618.7,304.6 L616.7,307.6 L615.8,310.5 L611.8,311.5 L607.9,314.0 L606.4,312.5 L606.4,310.0 L604.2,308.0 Z" fill="#2d4866" stroke="#24405f" stroke-width="1"/>
<path d="M424.0,413.0 L427.6,419.0 L431.0,428.0 L430.0,434.0 L426.0,426.8 L424.7,419.0 Z" fill="#2d4866" stroke="#24405f" stroke-width="1"/>
<path d="M526.2,502.0 L527.9,507.2 L531.4,505.5 L533.1,502.0 L531.4,512.4 L528.8,521.0 L531.4,527.0 L536.6,525.3 L532.2,530.5 L534.0,534.8 L532.2,539.0 L528.8,534.0 L525.3,531.4 L527.9,528.8 L525.3,519.3 L527.0,512.4 Z" fill="#2d4866" stroke="#24405f" stroke-width="1"/>
<path d="M540.9,602.0 L542.6,610.7 L545.2,614.0 L552.0,611.6 L554.7,609.0 L556.4,603.0 L557.2,610.7 L563.3,610.7 L563.3,613.3 L555.5,615.9 L548.6,617.6 L546.0,620.0 L542.6,617.6 L540.9,612.4 Z" fill="#2d4866" stroke="#24405f" stroke-width="1"/>
<path d="M140.3,708.0 L143.0,703.5 L148.0,702.0 L151.0,699.0 L147.0,697.0 L144.0,698.0 L145.5,695.5 L151.0,695.0 L154.4,699.0 L154.6,706.0 L151.0,710.0 L146.0,712.0 L144.5,714.6 L141.0,712.0 Z" fill="#2d4866" stroke="#24405f" stroke-width="1"/>
<path d="M41.9,680.7 L49.0,683.0 L51.7,689.0 L45.6,686.8 Z" fill="#2d4866" stroke="#24405f" stroke-width="1"/>
<path d="M57.9,685.6 L61.6,693.0 L66.5,700.0 L83.7,706.5 L83.7,710.0 L69.0,706.5 L61.6,702.9 L59.0,694.0 Z" fill="#2d4866" stroke="#24405f" stroke-width="1"/>
<path d="M784.0,745.0 L787.0,731.0 L790.0,738.0 L796.0,746.0 L792.0,754.0 L786.0,752.0 Z" fill="#2d4866" stroke="#24405f" stroke-width="1"/>
<path d="M770.0,792.0 L772.0,789.5 L778.0,789.5 L779.0,792.0 Z" fill="#2d4866" stroke="#24405f" stroke-width="1"/>
<ellipse cx="129.2" cy="660.5" rx="7.8" ry="8.6" fill="#2d4866"/>
<path d="M182.0,6.0 L187.9,14.0 L194.6,22.0 L197.9,32.2 L200.7,42.0 L200.9,48.9 L201.0,56.0 L200.3,63.0 L200.2,70.4 L201.1,76.8 L200.5,84.3 L200.7,91.0 L194.6,101.0 L188.4,110.8 L186.9,119.5 L185.6,128.8 L184.7,138.0 L175.0,147.8 L175.0,157.6 L170.1,165.5 L164.7,173.0 L160.0,180.0 L156.4,187.1 L153.0,193.0 L149.0,200.0 L145.0,202.0 L147.8,214.6 L152.7,224.5 M241.0,6.0 L235.1,11.2 L229.0,17.0 L229.2,24.9 L228.4,32.1 L227.8,39.1 L227.8,46.8 L223.0,59.0 L214.0,66.5 L207.1,69.1 L200.7,71.4 M241.0,6.0 L244.5,14.1 L248.8,22.0 L254.6,27.2 L261.0,32.0 L262.4,40.4 L263.5,49.0 L271.0,59.0 L280.0,60.0 L289.1,57.7 L297.5,55.4 L307.0,53.0 L313.5,57.2 L320.2,61.6 L326.1,65.3 L332.2,70.1 L339.0,74.0 L345.1,78.5 L350.7,82.8 L356.4,87.2 L362.2,91.7 L368.5,96.0 L375.9,103.6 L383.0,110.8 L389.7,114.5 L396.8,119.1 L404.0,123.0 L406.0,130.7 L408.0,138.0 L414.5,144.4 L421.5,150.7 L427.6,157.6 L432.2,163.8 L437.4,169.7 L442.2,175.8 L447.0,182.0 L451.4,188.4 L455.7,194.1 L459.6,200.0 L467.0,202.0 L471.0,209.9 L474.9,217.1 L479.0,224.5 L485.7,229.4 L491.7,234.0 L499.0,234.8 L506.5,235.5 L513.8,235.6 M452.0,190.0 L460.0,196.0 L467.0,202.0 M472.0,6.0 L472.0,19.7 L470.8,27.5 L468.9,34.3 L467.0,42.0 L459.3,48.7 L452.0,55.0 L443.8,57.0 L435.0,60.0 L431.0,69.8 L427.6,78.8 L424.0,85.5 L420.9,92.1 L417.8,98.5 L413.8,105.8 L409.0,113.0 L411.6,125.6 L405.5,138.0 L404.6,145.2 L404.0,152.8 L403.0,160.0 L400.8,167.3 L398.9,174.4 L396.8,182.0 L396.5,191.1 L396.8,200.0 L397.0,207.4 L398.0,214.6 L397.9,223.1 L397.0,230.8 L396.8,239.0 L396.0,246.3 L394.4,254.0 L395.7,261.0 L396.3,268.2 L396.8,276.0 L396.6,284.6 L396.0,292.7 L395.6,300.8 L397.2,308.7 L397.7,315.6 L399.3,323.0 L399.7,331.1 L400.6,339.1 L401.8,347.6 L403.0,354.6 L404.0,362.4 L404.4,370.7 L405.5,380.0 L404.6,387.1 L403.0,394.8 L406.1,404.8 L410.0,414.5 L414.5,422.8 L418.5,430.9 L422.7,439.0 L426.2,445.4 L429.6,452.4 L432.6,458.8 L436.7,465.8 L440.0,472.0 L437.8,480.0 L435.0,488.0 L430.9,495.7 L426.9,502.5 L422.7,510.5 L419.2,516.1 L414.8,522.3 L410.5,528.3 L407.0,534.4 L403.0,540.0 L397.6,545.7 L392.0,552.2 L386.5,558.0 L380.8,563.5 L373.7,569.2 L367.3,574.2 L361.0,580.0 L352.3,584.5 L343.9,589.6 L334.9,594.0 L326.7,599.0 L319.0,601.2 L311.9,604.0 L307.0,611.7 L307.3,618.7 L307.0,626.5 M6.0,256.5 L13.5,256.1 L20.6,256.5 L27.3,256.0 L34.5,255.2 L41.7,255.5 L49.0,255.0 L56.6,252.4 L64.9,249.2 L72.9,246.6 L81.0,244.0 L88.4,242.3 L96.3,239.5 L103.8,237.8 L110.8,235.6 L118.1,233.4 L124.4,230.4 L131.6,228.7 L138.0,225.7 L145.5,224.9 L153.0,225.2 L160.0,224.5 L167.9,225.0 L175.0,224.5 L182.8,220.6 L189.6,216.2 L197.0,212.0 L205.5,206.2 L214.0,199.9 L221.6,193.8 L229.0,187.0 L235.8,184.6 L243.0,182.3 L249.7,179.7 L256.0,177.0 L263.6,174.6 L271.8,172.1 L280.0,170.0 L287.0,167.9 L294.6,166.9 L302.0,165.0 L309.8,163.9 L316.9,161.5 L323.9,160.0 L331.6,158.9 L340.1,155.4 L348.1,152.3 L356.0,149.0 L364.4,147.3 L372.7,144.5 L380.8,142.9 L389.5,138.3 L398.0,134.0 L406.7,133.4 L414.2,133.8 L422.7,133.0 L430.7,132.9 L439.2,134.1 L447.0,134.0 L454.0,134.9 L461.3,136.2 L467.6,137.1 L475.2,138.5 L481.8,140.0 L490.0,139.0 L499.1,138.8 L507.2,137.6 L516.0,136.7 L526.0,142.9 L538.0,150.0 L543.6,154.4 L549.7,158.0 L558.3,158.7 L567.2,159.0 L575.4,159.0 L584.0,160.0 L591.1,157.7 L599.1,155.1 L605.8,152.7 L613.7,150.0 L622.1,150.4 L630.2,150.2 L638.0,150.0 L644.5,147.5 L651.0,145.4 L658.0,142.9 L663.8,148.1 L670.0,152.7 L672.2,159.9 L675.0,167.5 L685.0,175.0 L687.6,184.7 L694.6,187.0 L702.4,189.7 L710.0,189.4 L717.0,188.4 L724.8,185.8 L731.9,184.2 L739.0,182.0 L746.2,181.2 L754.0,179.4 L761.5,178.3 L768.6,177.2 L776.0,176.0 L783.5,175.3 L791.3,175.3 L798.5,174.9 L806.0,175.0 M162.5,226.0 L165.0,222.0 L171.0,221.5 L175.0,225.0 L174.0,230.0 L168.0,231.0 L163.0,229.0 L162.5,226.0 M165.0,230.6 L165.7,239.0 L167.3,247.4 L167.8,255.4 L168.7,263.9 L170.0,272.6 L172.2,280.1 L173.6,288.5 L173.3,296.9 L173.2,304.6 L172.4,313.0 L173.4,320.1 L174.9,328.3 L176.3,334.9 L177.3,342.7 L179.2,350.4 L181.1,358.9 L183.5,367.0 L182.7,374.4 L182.2,382.3 L182.0,390.0 L177.3,399.7 L174.0,406.8 L170.1,414.3 L166.1,421.5 L162.6,429.0 L162.0,437.6 L161.1,446.0 L160.0,453.9 L157.8,461.9 L154.9,470.4 L152.7,478.5 L149.1,484.9 L145.8,491.0 L142.2,497.0 L138.0,503.0 L136.6,510.7 L134.9,518.1 L133.7,525.3 L131.8,532.7 L131.2,541.7 L131.0,551.0 L130.5,560.0 L130.0,567.3 L129.7,575.0 L129.4,582.7 L128.0,589.5 L128.0,597.0 L127.0,605.5 L125.6,614.0 L126.9,622.0 L127.8,630.9 L129.0,638.8 L132.4,646.6 L135.5,653.6 L134.7,663.7 L133.0,673.0 M366.0,138.0 L368.6,128.3 L372.0,118.0 L378.3,113.3 L383.6,108.6 L389.3,104.1 L395.6,99.8 L403.4,101.2 L411.6,101.6 L420.0,103.0 L429.2,108.4 L437.5,113.0 L437.1,122.8 L437.5,133.0 L435.5,141.1 L432.6,149.6 L430.0,157.6 L422.8,159.0 L415.5,161.6 L407.8,163.0 L400.5,165.0 L393.2,163.0 L385.9,159.8 L378.0,157.6 L374.3,151.1 L370.5,145.0 L366.0,138.0 M588.0,6.0 L587.8,15.3 L588.0,24.6 L593.4,31.6 L598.7,39.9 L604.0,46.8 L602.7,55.9 L601.6,64.9 L600.0,74.0 L601.1,81.7 L602.3,89.1 L604.0,96.0 L597.4,103.4 L590.0,110.8 L596.5,123.0 L602.7,128.8 L608.8,135.5 L610.9,143.0 L613.7,150.0 L607.4,153.5 L600.2,156.9 L594.0,160.0 L589.5,166.0 L584.2,171.3 L579.0,177.0 L574.7,182.4 L570.0,189.0 L566.1,194.1 L562.0,200.0 L554.6,209.7 L547.2,217.6 L539.9,224.5 L530.0,229.0 L523.7,235.6 L521.0,239.0 L528.9,245.5 L536.0,251.6 L537.5,261.3 L538.5,271.0 L542.3,280.0 L545.8,288.5 L548.9,294.5 L551.6,301.6 L554.6,308.0 L559.7,314.3 L564.7,319.6 L569.4,325.5 L574.2,334.4 L579.0,342.7 L581.7,350.0 M658.0,142.9 L665.9,137.8 L672.9,133.0 L680.0,129.3 L686.5,125.9 L693.4,122.3 L700.1,119.1 L707.0,115.8 L713.5,112.2 L721.3,107.5 L728.0,103.9 L734.8,100.1 L741.8,96.0 L749.3,92.0 L756.3,88.5 L764.2,85.2 L771.0,81.0 L778.3,79.0 L785.4,77.6 L792.4,74.9 L798.9,73.0 L806.0,71.4 M717.0,188.4 L722.3,196.3 L727.0,204.8 L733.4,210.3 L739.0,215.9 L745.2,219.1 L751.7,222.0 L755.0,230.2 L759.0,239.0 L761.4,247.0 L764.2,255.5 L766.5,263.9 L768.1,272.2 L770.0,281.0 L777.7,287.4 L786.0,293.4 L793.1,298.1 L799.6,302.9 L806.0,308.0 M405.5,379.6 L409.8,374.2 L414.2,368.7 L418.8,363.3 L422.7,357.5 L428.2,352.3 L434.4,347.5 L440.7,342.9 L446.1,337.6 L452.0,332.8 L456.7,325.5 L462.4,317.7 L467.0,310.7 L470.9,304.6 L475.0,298.6 L478.4,293.1 L482.6,287.1 L486.7,281.0 L490.2,273.7 L493.3,266.6 L495.5,258.7 L499.0,251.6 L502.9,245.3 L506.5,239.0 L513.8,235.6 L523.7,235.6 M405.5,379.6 L411.2,373.7 L417.8,367.0 L427.9,364.8 L437.5,363.6 L444.9,363.7 L452.6,364.6 L459.4,364.7 L467.0,364.9 L475.2,363.4 L483.4,362.2 L491.7,361.0 L499.8,359.8 L508.1,357.2 L516.0,356.0 L522.9,355.4 L530.0,353.8 L538.5,352.3 L546.5,350.7 L554.6,348.9 L563.3,349.2 L572.4,349.3 L581.7,350.0 L589.3,350.4 L596.2,351.9 L604.0,352.6 L612.6,355.7 L620.7,359.5 L628.5,362.4 L636.3,364.3 L644.5,365.4 L653.0,367.0 L660.9,367.1 L669.7,368.4 L677.8,368.6 L685.5,369.6 L694.0,371.0 L702.0,372.0 L710.0,371.9 L718.3,371.8 L727.0,371.0 L735.4,372.0 L743.9,372.4 L751.7,373.5 L761.5,367.0 L768.5,362.4 L776.0,357.5 L783.9,354.2 L791.0,350.0 L798.8,344.0 L806.0,337.8 M405.5,379.6 L396.5,384.4 L388.0,390.0 M405.5,380.0 L397.1,383.2 L388.0,387.0 L381.1,390.8 L375.3,395.8 L368.5,399.7 L360.8,400.6 L352.2,401.4 L343.9,402.0 L338.1,408.7 L332.1,414.8 L326.7,421.9 L321.3,428.8 L315.6,435.3 L309.4,441.6 L302.9,447.7 L296.6,454.6 L289.7,461.0 L283.5,464.3 L276.9,467.1 L270.0,470.0 L263.3,472.3 L256.0,474.8 L253.7,481.9 L251.1,489.4 L248.9,496.2 L246.0,503.0 L241.3,511.2 L236.5,520.0 L234.3,527.4 L231.5,535.0 L226.4,541.0 L221.6,546.5 L216.7,552.0 L215.5,559.9 L215.4,567.3 L214.0,574.8 L211.9,582.2 L209.4,589.3 L206.6,597.1 L204.4,604.0 L201.3,612.8 L197.7,620.4 L194.6,629.0 L190.8,636.4 L187.0,643.7 M6.0,460.0 L13.5,460.9 L20.6,461.2 L27.6,462.7 L34.6,463.3 L41.6,464.1 L49.0,465.0 L57.4,467.4 L65.7,469.0 L74.0,471.0 L81.2,473.8 L88.7,476.0 L95.8,475.0 L103.4,474.8 L111.0,474.1 L118.0,473.6 L128.2,473.5 L138.0,473.6 L145.3,476.9 L152.7,481.0 L160.7,480.1 L168.6,479.5 L176.9,479.0 L184.7,478.5 L192.0,477.7 L199.6,476.9 L207.2,476.5 L214.1,475.6 L221.7,474.8 L230.4,474.0 L238.8,474.0 L247.3,473.8 L256.0,473.6 L263.5,472.0 L270.0,470.0 M584.0,293.4 L578.7,301.7 L574.0,310.7 L572.4,317.8 L571.0,325.5 M581.7,350.0 L588.1,342.2 L594.0,335.0 L599.3,330.0 L605.6,325.1 L611.0,320.5 L618.8,317.5 L625.9,314.4 L633.4,311.1 L640.8,308.0 L648.5,303.3 L655.6,297.8 L663.0,293.4 L669.3,289.8 L676.5,287.3 L682.7,283.6 L690.7,280.6 L698.5,277.3 L707.0,273.7 L713.2,269.1 L720.5,264.3 L727.0,259.0 L739.0,252.8 L745.9,249.1 L751.9,245.1 L759.0,241.7 L767.6,238.2 L775.0,234.6 L783.7,230.6 L790.7,227.2 L799.0,225.3 L806.0,222.0 M739.0,252.8 L741.8,263.9 L749.6,268.5 L756.9,273.8 L764.0,278.7 L770.0,281.0 M581.7,350.0 L576.8,355.9 L571.9,362.4 L567.4,368.7 L562.0,374.7 L555.9,380.0 L554.0,387.8 L552.0,394.8 L547.6,400.8 L543.7,406.0 L539.9,412.0 L531.0,419.0 L526.8,425.9 L523.3,432.5 L518.8,439.0 L513.7,443.6 L508.7,448.7 L504.0,453.9 L495.7,457.6 L486.9,461.0 L479.0,465.0 L470.9,468.7 L462.0,472.0 L454.3,472.4 L447.3,471.9 L440.0,472.0 M581.7,350.0 L586.2,358.6 L591.6,367.0 L596.4,373.7 L601.4,379.6 L604.0,386.3 L606.8,392.8 L608.8,399.7 L614.9,406.2 L620.4,413.3 L626.0,419.4 L630.0,428.2 L633.4,436.7 L632.5,444.8 L631.0,453.9 L630.5,462.5 L630.5,470.3 L629.8,478.5 L629.5,486.5 L629.7,494.4 L629.8,503.0 L632.3,510.5 L633.9,517.3 L635.9,525.0 L640.7,533.7 L645.8,542.6 L647.3,552.1 L649.5,562.0 L651.1,569.6 L653.3,576.3 L654.2,584.6 L655.8,591.4 L658.0,599.0 L662.1,607.4 L665.7,615.9 L670.0,624.0 L676.6,630.9 L682.7,638.8 L688.7,643.6 L694.2,648.7 L700.0,653.6 L706.2,662.5 L712.0,670.8 L714.2,677.9 L716.8,685.3 L719.7,693.0 L724.1,700.7 L727.8,707.9 L732.0,715.0 L736.3,722.4 L740.0,729.0 L743.3,738.6 L746.0,748.0 L747.8,756.3 L749.0,765.0 L751.4,772.8 L753.7,781.0 L755.0,792.0 M574.5,347.6 L576.0,339.0 L583.0,334.5 L590.0,339.0 L591.5,347.6 L590.0,357.0 L583.0,361.0 L576.0,357.0 L574.5,347.6 M626.0,420.6 L631.8,424.4 L638.4,429.0 L643.1,434.9 L648.0,441.6 L655.1,445.2 L661.4,449.6 L668.0,453.9 L678.2,457.1 L687.6,461.0 L694.8,462.5 L702.1,463.8 L709.8,466.0 L717.9,466.9 L726.3,468.2 L734.4,469.9 L742.4,470.5 L751.2,470.9 L759.0,472.0 L767.1,475.5 L776.0,478.5 L783.0,481.4 L791.1,483.2 L798.5,485.9 L806.0,493.0 M806.0,535.0 L804.5,543.5 L802.0,552.0 L801.2,560.0 L801.0,567.0 L796.9,574.2 L792.5,580.4 L789.5,587.9 L785.0,594.5 L784.9,602.6 L785.6,610.6 L786.0,619.0 L786.5,626.1 L787.4,633.4 L788.6,641.0 L778.8,646.0 L777.5,658.5 L781.0,665.9 L793.5,668.0 L798.5,675.8 L801.4,682.2 L803.3,688.8 L806.0,695.5 M788.6,641.0 L790.7,647.7 L792.0,655.0 L793.5,668.0 M6.0,661.0 L14.7,658.6 L23.3,656.2 L32.0,653.6 L38.9,651.6 L45.5,649.3 L52.8,647.2 L59.8,645.7 L66.5,643.7 L76.1,644.6 L86.0,645.0 L94.6,642.9 L103.4,641.0 L111.9,640.6 L119.8,639.8 L128.0,640.0 L138.0,640.3 L147.8,641.0 L155.7,645.3 L164.1,649.1 L172.4,653.6 L182.1,654.5 L192.0,656.0 L199.2,654.6 L206.2,653.0 L214.0,651.0 L221.0,649.3 L227.4,647.5 L234.1,645.6 L241.4,643.7 L248.4,644.4 L255.3,644.3 L262.9,645.1 L270.0,645.0 L279.8,641.8 L289.7,638.8 L297.1,633.5 L304.5,627.7 L313.0,622.8 L320.2,623.4 L327.2,624.3 L334.0,625.0 L344.1,628.0 L353.7,631.0 L360.8,634.0 L368.5,637.6 L378.4,636.0 L388.0,631.0 L398.0,622.8 L408.3,620.4 L417.8,619.0 L426.1,618.5 L434.1,617.8 L442.4,616.7 L449.7,619.6 L457.0,621.6 L464.7,619.0 L471.9,617.0 L479.0,615.0 L486.6,615.3 L494.0,615.3 L501.1,614.9 L509.0,615.2 L516.0,615.0 L523.6,618.8 L531.1,622.0 L538.5,625.0 L545.4,627.1 L552.7,629.9 L560.4,631.7 L567.0,633.9 L575.4,635.8 L583.4,637.4 L591.6,638.8 L598.9,639.6 L606.7,640.6 L613.4,641.0 L621.2,642.0 L628.5,642.5 L636.5,643.5 L645.3,644.5 L653.0,645.0 L660.9,647.4 L669.2,650.3 L677.8,653.6 L685.6,655.5 L694.7,656.6 L702.4,658.5 L712.0,661.0 L720.6,661.4 L730.2,661.1 L739.0,661.0 L745.8,659.6 L753.3,659.0 L760.0,657.5 L769.1,655.8 L778.8,654.8 M86.0,645.0 L89.3,653.1 L93.6,661.0 L101.1,665.5 L108.4,670.8 L116.1,672.5 L124.7,673.1 L133.0,674.5 L140.6,678.7 L147.8,682.0 L160.0,683.0 L166.0,679.9 L172.4,675.8 L177.0,670.1 L182.0,663.5 L184.7,653.2 L187.0,643.7 M6.0,616.7 L9.4,623.6 L12.0,631.0 L12.0,639.5 L12.0,648.7 L16.0,661.0" fill="none" stroke="#8a6e10" stroke-width="1"/>
<path d="M0.0,706.0 L6.0,706.0 L9.0,705.3 L11.7,704.0 L15.5,703.5 L18.5,702.0 L19.0,699.0 L22.3,699.9 L25.0,699.7 L29.5,698.5 L30.0,703.4 L26.5,704.6 L27.0,709.0 L29.5,708.5 L33.7,708.3 L36.7,707.3 L39.3,707.0 L42.5,707.0 L45.5,706.5 L46.8,704.0 L48.6,706.5 L45.0,707.7 L44.1,711.7 L44.3,716.3 L50.0,715.7 L51.7,720.6 L51.7,726.0 L55.1,725.3 L59.0,723.7 L61.6,726.8 L65.3,727.4 L68.3,729.3 L70.8,726.8 L72.7,731.7 L75.0,734.0 L76.4,737.9 L78.8,740.3 L83.7,742.8 L86.2,741.0 L91.0,742.8 L94.5,743.0 L97.3,744.0 L98.5,747.0 L102.0,747.6 L104.7,749.0 L106.0,752.7 L108.6,754.4 L111.0,757.0 L114.5,756.0 L114.6,752.4 L115.8,748.0 L118.6,746.9 L122.0,746.5 L124.4,742.8 L128.0,740.0 L133.0,741.0 L137.1,744.2 L140.0,746.5 L141.7,749.8 L144.0,752.0 L145.5,754.9 L147.0,757.4 L148.0,762.0 L151.3,762.5 L155.6,762.6 L159.0,762.0 L159.7,757.4 L158.8,753.5 L157.0,750.0 L156.3,745.6 L156.0,742.0 L156.6,738.0 L158.0,735.0 L155.3,733.1 L153.0,731.0 L150.4,727.2 L149.0,723.0 L152.0,718.0 L156.0,716.0 L160.0,720.0 L162.3,721.8 L165.4,724.0 L167.3,726.0 L170.0,728.0 L172.5,729.5 L175.1,731.4 L177.1,734.4 L178.6,736.3 L181.3,738.1 L183.7,740.0 L186.0,742.5 L189.4,746.0 L192.1,747.7 L195.2,748.6 L198.6,749.4 L201.4,751.9 L203.0,753.2 L205.5,755.7 L207.7,757.4 L210.0,762.0 L212.6,762.3 L216.6,762.4 L218.7,762.5 L221.9,761.8 L225.6,762.5 L228.4,762.5 L231.8,761.8 L234.6,761.6 L237.4,761.6 L241.0,762.0 L240.9,757.4 L239.7,755.0 L236.5,755.1 L232.9,754.0 L229.4,749.4 L227.8,745.5 L227.0,742.6 L224.8,743.8 L221.4,744.9 L219.0,742.1 L216.9,740.0 L213.6,740.4 L210.0,740.0 L205.4,736.9 L200.9,735.7 L198.4,732.8 L196.0,730.0 L192.5,728.5 L190.0,726.0 L189.0,721.0 L184.8,719.3 L181.7,717.6 L185.4,716.0 L188.6,715.7 L191.6,714.0 L187.9,710.0 L191.1,708.6 L194.0,706.5 L192.8,701.6 L196.3,701.5 L200.8,701.6 L201.4,698.0 L204.7,697.1 L208.8,695.4 L207.3,692.5 L206.9,690.1 L205.0,686.8 L206.2,683.8 L206.3,681.2 L207.0,678.0 L204.0,677.0 L205.0,682.0 L202.6,681.0 L198.3,684.0 L197.7,689.0 L196.0,693.6 L191.6,695.4 L186.6,693.0 L184.8,688.6 L180.5,688.6 L177.4,685.6 L177.4,681.9 L180.5,679.4 L185.4,680.0 L186.6,678.0 L189.1,674.7 L191.6,672.0 L195.0,667.7 L199.0,666.5 L204.0,667.0 L207.6,665.9 L210.0,661.0 L212.4,658.6 L215.0,657.0 L216.0,654.0 L212.5,652.3 L215.0,651.0 L219.3,651.0 L221.0,655.4 L223.6,654.7 L227.0,653.0 L229.2,651.4 L231.5,650.0 L234.7,649.0 L240.0,648.0 L240.8,645.5 L244.9,646.1 L248.1,646.2 L252.0,646.0 L255.2,648.4 L257.9,650.6 L260.5,652.5 L263.4,651.4 L266.4,649.9 L269.8,648.6 L273.4,650.6 L276.1,652.7 L279.6,654.0 L282.2,651.6 L284.5,649.0 L289.5,647.4 L292.0,649.0 L295.6,650.5 L297.8,652.5 L300.5,654.0 L305.5,653.0 L305.6,650.3 L305.9,647.2 L305.7,643.9 L306.0,640.6 L307.3,636.7 L308.0,632.0 L305.5,630.8 L308.0,628.0 L309.6,625.4 L311.6,622.0 L314.0,622.0 L315.0,624.0 L320.0,624.6 L320.9,628.1 L321.6,631.7 L321.5,634.5 L320.8,637.6 L320.0,640.6 L321.6,644.7 L324.0,648.0 L327.6,646.8 L328.8,649.9 L329.0,653.0 L331.6,655.7 L333.8,657.9 L335.0,660.5 L338.9,659.8 L342.7,659.9 L346.0,659.5 L349.7,658.5 L353.1,658.1 L356.7,657.1 L360.0,656.0 L362.6,654.8 L366.2,654.7 L369.0,654.0 L372.7,652.5 L375.6,651.9 L378.2,651.1 L381.7,650.4 L385.0,650.0 L387.6,648.9 L390.9,648.9 L394.0,648.6 L396.5,648.5 L399.8,647.5 L402.5,647.4 L406.1,647.3 L409.2,647.8 L412.8,646.8 L416.4,646.8 L419.5,647.3 L423.0,647.6 L426.5,648.8 L430.2,648.6 L433.6,649.4 L436.7,649.7 L439.6,650.3 L443.0,651.9 L446.5,653.5 L449.0,654.0 L452.2,655.1 L455.7,655.9 L457.8,657.8 L461.4,659.0 L464.7,660.2 L468.0,662.8 L471.0,664.0 L474.7,666.3 L478.6,668.8 L480.7,670.6 L484.1,672.8 L486.0,675.0 L489.6,678.0 L492.0,680.0 L495.9,682.1 L499.5,684.8 L502.9,686.5 L505.1,688.0 L508.0,690.0 L511.6,692.0 L514.0,694.0 L514.0,697.0 L514.0,700.1 L514.7,702.8 L515.0,706.0 L513.0,711.0 L517.0,711.4 L519.7,711.0 L524.0,711.0 L527.2,710.3 L531.3,708.2 L534.2,706.8 L538.0,706.0 L541.6,703.3 L544.0,701.0 L549.0,700.7 L546.7,705.0 L550.5,704.3 L554.0,703.7 L557.9,701.4 L561.5,698.8 L565.0,696.3 L568.1,694.5 L571.0,692.7 L574.0,691.3 L576.8,690.3 L580.0,689.0 L583.7,692.7 L587.0,691.0 L586.0,686.5 L581.0,685.0 L583.7,680.0 L588.6,676.6 L593.5,674.0 L597.0,673.0 L599.7,676.6 L602.7,675.1 L605.8,674.0 L609.7,674.1 L613.0,674.0 L614.9,676.2 L618.0,679.0 L620.4,681.2 L623.5,682.4 L625.5,684.0 L627.4,684.0 L629.7,686.2 L633.0,687.9 L636.0,689.7 L638.2,692.6 L640.0,695.7 L642.0,698.0 L643.2,701.7 L644.6,705.7 L647.5,707.4 L649.3,710.3 L652.0,712.0 L657.0,713.0 L656.5,717.1 L657.2,720.3 L657.0,724.0 L659.2,727.3 L662.0,730.0 L666.0,731.6 L669.0,734.0 L671.0,737.6 L673.0,741.0 L675.5,742.8 L678.0,745.0 L680.0,749.0 L682.2,751.4 L685.5,753.1 L687.7,756.0 L690.5,756.6 L694.2,756.7 L696.4,757.0 L700.0,757.0 L701.1,760.9 L701.0,763.6 L703.0,765.0 L704.6,768.1 L706.1,772.0 L707.0,776.0 L709.2,778.9 L711.3,780.2 L713.0,783.0 L713.0,815.0 L0.0,815.0 Z" fill="#004364" stroke="#000" stroke-width="1.1" stroke-linejoin="round"/>
<path d="M343.7,651.7 L345.3,655.3 L346.0,658.5 L348.6,657.5 L351.3,656.2 L353.5,654.0 L355.0,651.6 L357.0,649.0 L359.9,647.7 L362.0,645.6 L362.8,643.0 L359.7,641.9 L358.4,638.5 L357.0,635.7 L356.0,637.0 L356.4,640.5 L357.0,643.0 L355.5,645.8 L354.8,649.0 L351.0,651.7 L348.6,654.0 L345.5,653.0 Z" fill="#004364" stroke="#000" stroke-width="1" stroke-linejoin="round"/>
<path d="M362.0,654.5 L365.8,650.5 L369.1,649.4 L373.0,648.0 L375.1,645.5 L377.0,643.0 L377.2,640.3 L378.0,637.0 L375.7,632.0 L380.6,635.0 L385.5,634.5 L389.0,632.0 L388.2,635.0 L386.8,638.0 L389.9,640.2 L393.0,643.0 L389.0,646.8 L391.5,647.6 L395.0,648.6 L395.0,649.5 L391.7,649.6 L388.5,650.2 L384.5,650.5 L381.9,651.7 L378.0,652.0 L375.0,652.9 L370.9,653.5 L368.0,654.5 Z" fill="#004364" stroke="#000" stroke-width="1" stroke-linejoin="round"/>
<path d="M417.0,644.0 L419.5,640.5 L423.7,638.4 L427.0,637.0 L431.8,638.0 L434.0,643.0 L436.7,642.5 L440.0,640.6 L443.6,639.8 L446.6,639.0 L450.0,639.5 L452.7,640.5 L454.3,644.1 L455.0,648.0 L451.5,648.5 L446.6,646.0 L442.9,647.4 L439.0,648.0 L434.0,648.0 L431.2,648.3 L428.2,647.3 L425.4,647.7 L422.0,647.5 Z" fill="#004364" stroke="#000" stroke-width="1" stroke-linejoin="round"/>
<path d="M473.7,655.0 L478.3,656.2 L482.0,656.5 L486.2,657.3 L489.7,659.0 L492.8,655.8 L495.8,652.8 L499.5,654.0 L496.3,656.6 L493.0,660.0 L489.2,662.4 L486.0,665.0 L486.2,668.0 L487.0,671.0 L489.5,671.5 L493.1,672.7 L495.8,673.7 L498.9,676.4 L502.0,678.7 L504.9,678.3 L508.0,678.7 L503.0,682.0 L499.8,681.6 L496.0,681.0 L492.7,678.9 L489.0,676.5 L487.1,674.2 L484.6,672.0 L482.0,670.0 L480.6,666.7 L479.0,663.0 L476.0,660.0 Z" fill="#004364" stroke="#000" stroke-width="1" stroke-linejoin="round"/>
<path d="M16.0,718.0 L20.3,716.6 L24.6,715.7 L27.8,717.7 L32.0,719.4 L35.4,720.4 L39.4,721.9 L36.8,725.1 L34.5,728.0 L30.8,729.0 L28.2,727.3 L24.6,725.6 L22.0,724.8 L18.5,723.0 Z" fill="#5d4f4b" stroke="#000" stroke-width="1"/>
<path d="M6.0,717.0 L9.0,716.9 L13.0,717.5 L16.0,720.0 L12.9,720.9 L10.0,721.5 L6.0,721.0 Z" fill="#5d4f4b" stroke="#000" stroke-width="1"/>
<path d="M70.0,740.0 L74.0,739.0 L76.5,744.0 L78.3,746.7 L81.0,750.0 L79.0,752.6 L75.6,751.7 L72.6,750.0 L69.8,747.7 L67.0,745.0 Z" fill="#5d4f4b" stroke="#000" stroke-width="1"/>
<path d="M205.0,686.8 L207.0,678.0 L213.0,673.0 L222.0,668.0 L228.0,672.0 L228.5,684.0 L225.0,696.0 L221.4,704.9 L210.0,712.9 L203.0,722.0 L200.9,735.7 L196.0,730.0 L190.0,726.0 L189.0,721.0 L181.7,717.6 L191.6,714.0 L187.9,710.0 L194.0,706.5 L192.8,701.6 L200.8,701.6 L201.4,698.0 L208.8,695.4 Z" fill="#004364"/>
<path d="M223,669h1v1h-1zM225,670h1v1h-1zM217,671h1v1h-1zM218,671h1v1h-1zM222,671h1v1h-1zM217,672h1v1h-1zM218,672h1v1h-1zM212,673h1v1h-1zM216,673h1v1h-1zM217,673h1v1h-1zM220,684h1v1h-1zM218,685h1v1h-1zM219,685h1v1h-1zM213,689h1v1h-1zM217,690h1v1h-1zM211,693h1v1h-1zM211,694h1v1h-1zM208,697h1v1h-1zM213,698h1v1h-1zM213,699h1v1h-1zM202,700h1v1h-1zM202,701h1v1h-1zM207,701h1v1h-1zM215,701h1v1h-1zM193,702h1v1h-1zM214,702h1v1h-1zM215,702h1v1h-1zM216,702h1v1h-1zM219,702h1v1h-1zM193,703h1v1h-1zM216,703h1v1h-1zM217,703h1v1h-1zM218,703h1v1h-1zM217,704h1v1h-1zM207,706h1v1h-1zM193,707h1v1h-1zM209,707h1v1h-1zM209,708h1v1h-1zM200,709h1v1h-1zM201,709h1v1h-1zM209,709h1v1h-1zM191,714h1v1h-1zM201,714h1v1h-1zM190,715h1v1h-1zM191,715h1v1h-1zM200,715h1v1h-1zM201,715h1v1h-1zM191,716h1v1h-1zM196,716h1v1h-1zM197,716h1v1h-1zM183,717h1v1h-1zM196,717h1v1h-1zM195,718h1v1h-1zM196,718h1v1h-1zM197,718h1v1h-1zM200,718h1v1h-1zM197,719h1v1h-1zM202,721h1v1h-1zM194,722h1v1h-1zM191,723h1v1h-1zM190,724h1v1h-1zM191,724h1v1h-1zM191,725h1v1h-1zM195,726h1v1h-1zM195,727h1v1h-1zM196,727h1v1h-1zM195,728h1v1h-1zM196,729h1v1h-1z" fill="#5d4f4b"/>
<path d="M221,668h1v1h-1zM220,670h1v1h-1zM224,670h1v1h-1zM219,671h1v1h-1zM220,671h1v1h-1zM224,671h1v1h-1zM226,671h1v1h-1zM215,672h1v1h-1zM220,672h1v1h-1zM224,672h1v1h-1zM225,672h1v1h-1zM226,672h1v1h-1zM214,673h1v1h-1zM219,673h1v1h-1zM221,673h1v1h-1zM225,673h1v1h-1zM226,673h1v1h-1zM227,673h1v1h-1zM213,674h1v1h-1zM214,674h1v1h-1zM219,674h1v1h-1zM220,674h1v1h-1zM222,674h1v1h-1zM225,674h1v1h-1zM226,674h1v1h-1zM227,674h1v1h-1zM211,675h1v1h-1zM212,675h1v1h-1zM213,675h1v1h-1zM214,675h1v1h-1zM215,675h1v1h-1zM217,675h1v1h-1zM218,675h1v1h-1zM220,675h1v1h-1zM221,675h1v1h-1zM222,675h1v1h-1zM223,675h1v1h-1zM226,675h1v1h-1zM210,676h1v1h-1zM211,676h1v1h-1zM212,676h1v1h-1zM214,676h1v1h-1zM215,676h1v1h-1zM217,676h1v1h-1zM218,676h1v1h-1zM219,676h1v1h-1zM221,676h1v1h-1zM222,676h1v1h-1zM227,676h1v1h-1zM208,677h1v1h-1zM209,677h1v1h-1zM213,677h1v1h-1zM214,677h1v1h-1zM215,677h1v1h-1zM217,677h1v1h-1zM220,677h1v1h-1zM222,677h1v1h-1zM224,677h1v1h-1zM226,677h1v1h-1zM227,677h1v1h-1zM207,678h1v1h-1zM208,678h1v1h-1zM210,678h1v1h-1zM211,678h1v1h-1zM214,678h1v1h-1zM215,678h1v1h-1zM216,678h1v1h-1zM217,678h1v1h-1zM218,678h1v1h-1zM221,678h1v1h-1zM223,678h1v1h-1zM224,678h1v1h-1zM225,678h1v1h-1zM226,678h1v1h-1zM227,678h1v1h-1zM207,679h1v1h-1zM209,679h1v1h-1zM210,679h1v1h-1zM211,679h1v1h-1zM212,679h1v1h-1zM214,679h1v1h-1zM215,679h1v1h-1zM216,679h1v1h-1zM217,679h1v1h-1zM218,679h1v1h-1zM219,679h1v1h-1zM221,679h1v1h-1zM223,679h1v1h-1zM224,679h1v1h-1zM225,679h1v1h-1zM206,680h1v1h-1zM207,680h1v1h-1zM209,680h1v1h-1zM210,680h1v1h-1zM211,680h1v1h-1zM212,680h1v1h-1zM213,680h1v1h-1zM214,680h1v1h-1zM216,680h1v1h-1zM217,680h1v1h-1zM218,680h1v1h-1zM219,680h1v1h-1zM220,680h1v1h-1zM223,680h1v1h-1zM225,680h1v1h-1zM227,680h1v1h-1zM208,681h1v1h-1zM209,681h1v1h-1zM210,681h1v1h-1zM211,681h1v1h-1zM212,681h1v1h-1zM213,681h1v1h-1zM215,681h1v1h-1zM216,681h1v1h-1zM217,681h1v1h-1zM218,681h1v1h-1zM219,681h1v1h-1zM220,681h1v1h-1zM221,681h1v1h-1zM225,681h1v1h-1zM226,681h1v1h-1zM227,681h1v1h-1zM209,682h1v1h-1zM210,682h1v1h-1zM211,682h1v1h-1zM212,682h1v1h-1zM213,682h1v1h-1zM214,682h1v1h-1zM215,682h1v1h-1zM218,682h1v1h-1zM219,682h1v1h-1zM220,682h1v1h-1zM221,682h1v1h-1zM222,682h1v1h-1zM223,682h1v1h-1zM224,682h1v1h-1zM225,682h1v1h-1zM226,682h1v1h-1zM227,682h1v1h-1zM208,683h1v1h-1zM209,683h1v1h-1zM210,683h1v1h-1zM211,683h1v1h-1zM212,683h1v1h-1zM213,683h1v1h-1zM214,683h1v1h-1zM215,683h1v1h-1zM217,683h1v1h-1zM218,683h1v1h-1zM219,683h1v1h-1zM221,683h1v1h-1zM222,683h1v1h-1zM223,683h1v1h-1zM224,683h1v1h-1zM225,683h1v1h-1zM206,684h1v1h-1zM207,684h1v1h-1zM208,684h1v1h-1zM209,684h1v1h-1zM210,684h1v1h-1zM211,684h1v1h-1zM212,684h1v1h-1zM213,684h1v1h-1zM214,684h1v1h-1zM215,684h1v1h-1zM221,684h1v1h-1zM222,684h1v1h-1zM225,684h1v1h-1zM227,684h1v1h-1zM209,685h1v1h-1zM210,685h1v1h-1zM212,685h1v1h-1zM213,685h1v1h-1zM214,685h1v1h-1zM215,685h1v1h-1zM216,685h1v1h-1zM221,685h1v1h-1zM222,685h1v1h-1zM224,685h1v1h-1zM227,685h1v1h-1zM206,686h1v1h-1zM209,686h1v1h-1zM210,686h1v1h-1zM212,686h1v1h-1zM213,686h1v1h-1zM214,686h1v1h-1zM215,686h1v1h-1zM216,686h1v1h-1zM220,686h1v1h-1zM221,686h1v1h-1zM223,686h1v1h-1zM224,686h1v1h-1zM205,687h1v1h-1zM206,687h1v1h-1zM207,687h1v1h-1zM208,687h1v1h-1zM211,687h1v1h-1zM212,687h1v1h-1zM213,687h1v1h-1zM214,687h1v1h-1zM216,687h1v1h-1zM219,687h1v1h-1zM223,687h1v1h-1zM206,688h1v1h-1zM207,688h1v1h-1zM210,688h1v1h-1zM211,688h1v1h-1zM212,688h1v1h-1zM215,688h1v1h-1zM217,688h1v1h-1zM220,688h1v1h-1zM226,688h1v1h-1zM206,689h1v1h-1zM207,689h1v1h-1zM209,689h1v1h-1zM210,689h1v1h-1zM220,689h1v1h-1zM221,689h1v1h-1zM222,689h1v1h-1zM224,689h1v1h-1zM225,689h1v1h-1zM226,689h1v1h-1zM207,690h1v1h-1zM208,690h1v1h-1zM210,690h1v1h-1zM211,690h1v1h-1zM213,690h1v1h-1zM214,690h1v1h-1zM221,690h1v1h-1zM222,690h1v1h-1zM223,690h1v1h-1zM224,690h1v1h-1zM226,690h1v1h-1zM207,691h1v1h-1zM208,691h1v1h-1zM211,691h1v1h-1zM212,691h1v1h-1zM213,691h1v1h-1zM215,691h1v1h-1zM217,691h1v1h-1zM219,691h1v1h-1zM221,691h1v1h-1zM208,692h1v1h-1zM209,692h1v1h-1zM212,692h1v1h-1zM213,692h1v1h-1zM214,692h1v1h-1zM217,692h1v1h-1zM218,692h1v1h-1zM219,692h1v1h-1zM221,692h1v1h-1zM225,692h1v1h-1zM208,693h1v1h-1zM213,693h1v1h-1zM214,693h1v1h-1zM216,693h1v1h-1zM218,693h1v1h-1zM219,693h1v1h-1zM220,693h1v1h-1zM224,693h1v1h-1zM225,693h1v1h-1zM208,694h1v1h-1zM213,694h1v1h-1zM216,694h1v1h-1zM217,694h1v1h-1zM218,694h1v1h-1zM220,694h1v1h-1zM221,694h1v1h-1zM223,694h1v1h-1zM224,694h1v1h-1zM209,695h1v1h-1zM212,695h1v1h-1zM213,695h1v1h-1zM214,695h1v1h-1zM215,695h1v1h-1zM216,695h1v1h-1zM217,695h1v1h-1zM218,695h1v1h-1zM219,695h1v1h-1zM220,695h1v1h-1zM221,695h1v1h-1zM222,695h1v1h-1zM223,695h1v1h-1zM206,696h1v1h-1zM209,696h1v1h-1zM210,696h1v1h-1zM211,696h1v1h-1zM212,696h1v1h-1zM213,696h1v1h-1zM214,696h1v1h-1zM215,696h1v1h-1zM216,696h1v1h-1zM218,696h1v1h-1zM219,696h1v1h-1zM221,696h1v1h-1zM222,696h1v1h-1zM223,696h1v1h-1zM205,697h1v1h-1zM206,697h1v1h-1zM209,697h1v1h-1zM211,697h1v1h-1zM214,697h1v1h-1zM215,697h1v1h-1zM216,697h1v1h-1zM218,697h1v1h-1zM219,697h1v1h-1zM220,697h1v1h-1zM221,697h1v1h-1zM222,697h1v1h-1zM223,697h1v1h-1zM201,698h1v1h-1zM204,698h1v1h-1zM205,698h1v1h-1zM206,698h1v1h-1zM210,698h1v1h-1zM211,698h1v1h-1zM215,698h1v1h-1zM217,698h1v1h-1zM218,698h1v1h-1zM219,698h1v1h-1zM220,698h1v1h-1zM221,698h1v1h-1zM222,698h1v1h-1zM223,698h1v1h-1zM201,699h1v1h-1zM204,699h1v1h-1zM205,699h1v1h-1zM206,699h1v1h-1zM207,699h1v1h-1zM210,699h1v1h-1zM211,699h1v1h-1zM215,699h1v1h-1zM216,699h1v1h-1zM217,699h1v1h-1zM218,699h1v1h-1zM219,699h1v1h-1zM220,699h1v1h-1zM221,699h1v1h-1zM222,699h1v1h-1zM223,699h1v1h-1zM204,700h1v1h-1zM205,700h1v1h-1zM206,700h1v1h-1zM213,700h1v1h-1zM215,700h1v1h-1zM216,700h1v1h-1zM217,700h1v1h-1zM218,700h1v1h-1zM219,700h1v1h-1zM220,700h1v1h-1zM221,700h1v1h-1zM222,700h1v1h-1zM203,701h1v1h-1zM204,701h1v1h-1zM205,701h1v1h-1zM208,701h1v1h-1zM209,701h1v1h-1zM212,701h1v1h-1zM216,701h1v1h-1zM217,701h1v1h-1zM221,701h1v1h-1zM222,701h1v1h-1zM195,702h1v1h-1zM196,702h1v1h-1zM198,702h1v1h-1zM199,702h1v1h-1zM201,702h1v1h-1zM203,702h1v1h-1zM204,702h1v1h-1zM205,702h1v1h-1zM207,702h1v1h-1zM209,702h1v1h-1zM212,702h1v1h-1zM213,702h1v1h-1zM221,702h1v1h-1zM195,703h1v1h-1zM196,703h1v1h-1zM197,703h1v1h-1zM199,703h1v1h-1zM201,703h1v1h-1zM202,703h1v1h-1zM203,703h1v1h-1zM204,703h1v1h-1zM206,703h1v1h-1zM207,703h1v1h-1zM208,703h1v1h-1zM211,703h1v1h-1zM214,703h1v1h-1zM220,703h1v1h-1zM195,704h1v1h-1zM196,704h1v1h-1zM198,704h1v1h-1zM199,704h1v1h-1zM200,704h1v1h-1zM201,704h1v1h-1zM202,704h1v1h-1zM203,704h1v1h-1zM206,704h1v1h-1zM207,704h1v1h-1zM208,704h1v1h-1zM212,704h1v1h-1zM213,704h1v1h-1zM214,704h1v1h-1zM215,704h1v1h-1zM221,704h1v1h-1zM194,705h1v1h-1zM195,705h1v1h-1zM196,705h1v1h-1zM199,705h1v1h-1zM200,705h1v1h-1zM201,705h1v1h-1zM202,705h1v1h-1zM204,705h1v1h-1zM205,705h1v1h-1zM206,705h1v1h-1zM213,705h1v1h-1zM214,705h1v1h-1zM215,705h1v1h-1zM216,705h1v1h-1zM217,705h1v1h-1zM218,705h1v1h-1zM219,705h1v1h-1zM195,706h1v1h-1zM196,706h1v1h-1zM197,706h1v1h-1zM198,706h1v1h-1zM199,706h1v1h-1zM200,706h1v1h-1zM201,706h1v1h-1zM203,706h1v1h-1zM204,706h1v1h-1zM205,706h1v1h-1zM206,706h1v1h-1zM212,706h1v1h-1zM213,706h1v1h-1zM214,706h1v1h-1zM215,706h1v1h-1zM216,706h1v1h-1zM217,706h1v1h-1zM218,706h1v1h-1zM195,707h1v1h-1zM196,707h1v1h-1zM197,707h1v1h-1zM198,707h1v1h-1zM199,707h1v1h-1zM200,707h1v1h-1zM203,707h1v1h-1zM211,707h1v1h-1zM212,707h1v1h-1zM213,707h1v1h-1zM214,707h1v1h-1zM215,707h1v1h-1zM217,707h1v1h-1zM191,708h1v1h-1zM192,708h1v1h-1zM193,708h1v1h-1zM194,708h1v1h-1zM195,708h1v1h-1zM196,708h1v1h-1zM197,708h1v1h-1zM199,708h1v1h-1zM203,708h1v1h-1zM211,708h1v1h-1zM212,708h1v1h-1zM213,708h1v1h-1zM214,708h1v1h-1zM215,708h1v1h-1zM189,709h1v1h-1zM190,709h1v1h-1zM191,709h1v1h-1zM192,709h1v1h-1zM193,709h1v1h-1zM194,709h1v1h-1zM195,709h1v1h-1zM196,709h1v1h-1zM197,709h1v1h-1zM199,709h1v1h-1zM202,709h1v1h-1zM204,709h1v1h-1zM205,709h1v1h-1zM213,709h1v1h-1zM214,709h1v1h-1zM188,710h1v1h-1zM189,710h1v1h-1zM190,710h1v1h-1zM191,710h1v1h-1zM192,710h1v1h-1zM193,710h1v1h-1zM194,710h1v1h-1zM197,710h1v1h-1zM203,710h1v1h-1zM204,710h1v1h-1zM205,710h1v1h-1zM206,710h1v1h-1zM209,710h1v1h-1zM189,711h1v1h-1zM190,711h1v1h-1zM191,711h1v1h-1zM192,711h1v1h-1zM195,711h1v1h-1zM196,711h1v1h-1zM198,711h1v1h-1zM200,711h1v1h-1zM201,711h1v1h-1zM202,711h1v1h-1zM204,711h1v1h-1zM205,711h1v1h-1zM206,711h1v1h-1zM207,711h1v1h-1zM208,711h1v1h-1zM210,711h1v1h-1zM190,712h1v1h-1zM191,712h1v1h-1zM192,712h1v1h-1zM194,712h1v1h-1zM195,712h1v1h-1zM197,712h1v1h-1zM198,712h1v1h-1zM199,712h1v1h-1zM200,712h1v1h-1zM201,712h1v1h-1zM202,712h1v1h-1zM204,712h1v1h-1zM205,712h1v1h-1zM206,712h1v1h-1zM207,712h1v1h-1zM210,712h1v1h-1zM193,713h1v1h-1zM194,713h1v1h-1zM195,713h1v1h-1zM196,713h1v1h-1zM197,713h1v1h-1zM198,713h1v1h-1zM200,713h1v1h-1zM201,713h1v1h-1zM205,713h1v1h-1zM206,713h1v1h-1zM208,713h1v1h-1zM193,714h1v1h-1zM194,714h1v1h-1zM195,714h1v1h-1zM196,714h1v1h-1zM197,714h1v1h-1zM202,714h1v1h-1zM203,714h1v1h-1zM204,714h1v1h-1zM205,714h1v1h-1zM206,714h1v1h-1zM207,714h1v1h-1zM208,714h1v1h-1zM188,715h1v1h-1zM189,715h1v1h-1zM192,715h1v1h-1zM193,715h1v1h-1zM194,715h1v1h-1zM197,715h1v1h-1zM185,716h1v1h-1zM187,716h1v1h-1zM193,716h1v1h-1zM194,716h1v1h-1zM198,716h1v1h-1zM199,716h1v1h-1zM201,716h1v1h-1zM204,716h1v1h-1zM185,717h1v1h-1zM186,717h1v1h-1zM188,717h1v1h-1zM189,717h1v1h-1zM190,717h1v1h-1zM193,717h1v1h-1zM198,717h1v1h-1zM199,717h1v1h-1zM200,717h1v1h-1zM202,717h1v1h-1zM203,717h1v1h-1zM204,717h1v1h-1zM184,718h1v1h-1zM185,718h1v1h-1zM186,718h1v1h-1zM187,718h1v1h-1zM189,718h1v1h-1zM190,718h1v1h-1zM191,718h1v1h-1zM193,718h1v1h-1zM194,718h1v1h-1zM201,718h1v1h-1zM202,718h1v1h-1zM203,718h1v1h-1zM204,718h1v1h-1zM205,718h1v1h-1zM186,719h1v1h-1zM187,719h1v1h-1zM188,719h1v1h-1zM189,719h1v1h-1zM190,719h1v1h-1zM191,719h1v1h-1zM192,719h1v1h-1zM193,719h1v1h-1zM194,719h1v1h-1zM202,719h1v1h-1zM203,719h1v1h-1zM204,719h1v1h-1zM188,720h1v1h-1zM189,720h1v1h-1zM190,720h1v1h-1zM192,720h1v1h-1zM193,720h1v1h-1zM195,720h1v1h-1zM197,720h1v1h-1zM200,720h1v1h-1zM201,720h1v1h-1zM189,721h1v1h-1zM190,721h1v1h-1zM191,721h1v1h-1zM197,721h1v1h-1zM198,721h1v1h-1zM199,721h1v1h-1zM190,722h1v1h-1zM192,722h1v1h-1zM197,722h1v1h-1zM198,722h1v1h-1zM200,722h1v1h-1zM189,723h1v1h-1zM194,723h1v1h-1zM196,723h1v1h-1zM197,723h1v1h-1zM199,723h1v1h-1zM200,723h1v1h-1zM201,723h1v1h-1zM202,723h1v1h-1zM193,724h1v1h-1zM194,724h1v1h-1zM195,724h1v1h-1zM196,724h1v1h-1zM197,724h1v1h-1zM199,724h1v1h-1zM201,724h1v1h-1zM202,724h1v1h-1zM194,725h1v1h-1zM195,725h1v1h-1zM196,725h1v1h-1zM197,725h1v1h-1zM198,725h1v1h-1zM199,725h1v1h-1zM200,725h1v1h-1zM201,725h1v1h-1zM197,726h1v1h-1zM198,726h1v1h-1zM199,726h1v1h-1zM192,727h1v1h-1zM197,727h1v1h-1zM198,727h1v1h-1zM199,727h1v1h-1zM201,727h1v1h-1zM198,728h1v1h-1zM199,728h1v1h-1zM200,728h1v1h-1zM201,728h1v1h-1zM200,729h1v1h-1zM201,729h1v1h-1zM201,730h1v1h-1zM198,731h1v1h-1zM199,731h1v1h-1zM201,731h1v1h-1zM198,732h1v1h-1zM199,732h1v1h-1zM200,732h1v1h-1zM200,733h1v1h-1z" fill="#000"/>
<path d="M149.0,723.0 L152.0,718.0 L156.0,716.0 L160.0,720.0 L170.0,728.0 L183.7,740.0 L176.0,745.0 L168.0,750.0 L160.9,757.0 L159.7,757.4 L157.0,750.0 L156.0,742.0 L158.0,735.0 L153.0,731.0 Z" fill="#004364"/>
<path d="M153,717h1v1h-1zM154,717h1v1h-1zM154,718h1v1h-1zM153,719h1v1h-1zM153,723h1v1h-1zM152,724h1v1h-1zM167,726h1v1h-1zM168,727h1v1h-1zM156,728h1v1h-1zM163,728h1v1h-1zM164,728h1v1h-1zM165,728h1v1h-1zM168,728h1v1h-1zM169,728h1v1h-1zM162,729h1v1h-1zM163,729h1v1h-1zM165,729h1v1h-1zM168,729h1v1h-1zM153,730h1v1h-1zM156,730h1v1h-1zM154,731h1v1h-1zM155,731h1v1h-1zM164,731h1v1h-1zM173,731h1v1h-1zM173,733h1v1h-1zM174,733h1v1h-1zM172,736h1v1h-1zM174,736h1v1h-1zM175,736h1v1h-1zM169,737h1v1h-1zM170,737h1v1h-1zM171,737h1v1h-1zM176,737h1v1h-1zM179,737h1v1h-1zM180,737h1v1h-1zM177,738h1v1h-1zM178,738h1v1h-1zM165,739h1v1h-1zM167,739h1v1h-1zM172,739h1v1h-1zM177,739h1v1h-1zM178,739h1v1h-1zM179,739h1v1h-1zM167,740h1v1h-1zM171,740h1v1h-1zM178,740h1v1h-1zM179,740h1v1h-1zM180,740h1v1h-1zM158,741h1v1h-1zM167,741h1v1h-1zM168,741h1v1h-1zM169,741h1v1h-1zM178,741h1v1h-1zM156,742h1v1h-1zM157,742h1v1h-1zM158,742h1v1h-1zM166,742h1v1h-1zM168,742h1v1h-1zM169,742h1v1h-1zM157,743h1v1h-1zM165,743h1v1h-1zM170,743h1v1h-1zM172,743h1v1h-1zM171,744h1v1h-1zM164,745h1v1h-1zM165,745h1v1h-1zM164,746h1v1h-1zM165,746h1v1h-1zM164,747h1v1h-1zM165,747h1v1h-1zM166,747h1v1h-1zM166,749h1v1h-1zM158,752h1v1h-1z" fill="#5d4f4b"/>
<path d="M155,716h1v1h-1zM155,717h1v1h-1zM156,717h1v1h-1zM155,718h1v1h-1zM151,719h1v1h-1zM158,720h1v1h-1zM159,720h1v1h-1zM160,720h1v1h-1zM153,721h1v1h-1zM159,721h1v1h-1zM160,721h1v1h-1zM149,722h1v1h-1zM150,722h1v1h-1zM159,722h1v1h-1zM160,722h1v1h-1zM162,722h1v1h-1zM149,723h1v1h-1zM150,723h1v1h-1zM151,723h1v1h-1zM160,723h1v1h-1zM161,723h1v1h-1zM154,724h1v1h-1zM155,724h1v1h-1zM159,724h1v1h-1zM163,724h1v1h-1zM150,725h1v1h-1zM151,725h1v1h-1zM153,725h1v1h-1zM154,725h1v1h-1zM156,725h1v1h-1zM157,725h1v1h-1zM158,725h1v1h-1zM162,725h1v1h-1zM165,725h1v1h-1zM151,726h1v1h-1zM152,726h1v1h-1zM154,726h1v1h-1zM155,726h1v1h-1zM156,726h1v1h-1zM157,726h1v1h-1zM158,726h1v1h-1zM159,726h1v1h-1zM161,726h1v1h-1zM162,726h1v1h-1zM163,726h1v1h-1zM164,726h1v1h-1zM166,726h1v1h-1zM151,727h1v1h-1zM152,727h1v1h-1zM153,727h1v1h-1zM158,727h1v1h-1zM159,727h1v1h-1zM160,727h1v1h-1zM161,727h1v1h-1zM162,727h1v1h-1zM152,728h1v1h-1zM153,728h1v1h-1zM154,728h1v1h-1zM158,728h1v1h-1zM159,728h1v1h-1zM170,728h1v1h-1zM152,729h1v1h-1zM153,729h1v1h-1zM158,729h1v1h-1zM171,729h1v1h-1zM160,730h1v1h-1zM170,730h1v1h-1zM158,731h1v1h-1zM159,731h1v1h-1zM161,731h1v1h-1zM163,731h1v1h-1zM166,731h1v1h-1zM169,731h1v1h-1zM171,731h1v1h-1zM156,732h1v1h-1zM157,732h1v1h-1zM158,732h1v1h-1zM159,732h1v1h-1zM161,732h1v1h-1zM162,732h1v1h-1zM163,732h1v1h-1zM164,732h1v1h-1zM167,732h1v1h-1zM168,732h1v1h-1zM169,732h1v1h-1zM170,732h1v1h-1zM156,733h1v1h-1zM158,733h1v1h-1zM159,733h1v1h-1zM161,733h1v1h-1zM162,733h1v1h-1zM163,733h1v1h-1zM164,733h1v1h-1zM167,733h1v1h-1zM168,733h1v1h-1zM172,733h1v1h-1zM175,733h1v1h-1zM161,734h1v1h-1zM162,734h1v1h-1zM163,734h1v1h-1zM164,734h1v1h-1zM166,734h1v1h-1zM167,734h1v1h-1zM170,734h1v1h-1zM172,734h1v1h-1zM176,734h1v1h-1zM159,735h1v1h-1zM160,735h1v1h-1zM163,735h1v1h-1zM164,735h1v1h-1zM166,735h1v1h-1zM170,735h1v1h-1zM172,735h1v1h-1zM173,735h1v1h-1zM176,735h1v1h-1zM158,736h1v1h-1zM159,736h1v1h-1zM160,736h1v1h-1zM163,736h1v1h-1zM164,736h1v1h-1zM166,736h1v1h-1zM167,736h1v1h-1zM157,737h1v1h-1zM158,737h1v1h-1zM159,737h1v1h-1zM163,737h1v1h-1zM166,737h1v1h-1zM167,737h1v1h-1zM172,737h1v1h-1zM157,738h1v1h-1zM158,738h1v1h-1zM162,738h1v1h-1zM165,738h1v1h-1zM167,738h1v1h-1zM169,738h1v1h-1zM171,738h1v1h-1zM173,738h1v1h-1zM174,738h1v1h-1zM180,738h1v1h-1zM181,738h1v1h-1zM157,739h1v1h-1zM158,739h1v1h-1zM161,739h1v1h-1zM168,739h1v1h-1zM169,739h1v1h-1zM174,739h1v1h-1zM175,739h1v1h-1zM156,740h1v1h-1zM159,740h1v1h-1zM160,740h1v1h-1zM161,740h1v1h-1zM164,740h1v1h-1zM174,740h1v1h-1zM175,740h1v1h-1zM159,741h1v1h-1zM161,741h1v1h-1zM162,741h1v1h-1zM163,741h1v1h-1zM164,741h1v1h-1zM171,741h1v1h-1zM174,741h1v1h-1zM180,741h1v1h-1zM160,742h1v1h-1zM162,742h1v1h-1zM175,742h1v1h-1zM176,742h1v1h-1zM177,742h1v1h-1zM179,742h1v1h-1zM158,743h1v1h-1zM159,743h1v1h-1zM161,743h1v1h-1zM175,743h1v1h-1zM177,743h1v1h-1zM158,744h1v1h-1zM159,744h1v1h-1zM161,744h1v1h-1zM162,744h1v1h-1zM167,744h1v1h-1zM168,744h1v1h-1zM172,744h1v1h-1zM173,744h1v1h-1zM174,744h1v1h-1zM175,744h1v1h-1zM176,744h1v1h-1zM160,745h1v1h-1zM161,745h1v1h-1zM162,745h1v1h-1zM163,745h1v1h-1zM166,745h1v1h-1zM167,745h1v1h-1zM168,745h1v1h-1zM169,745h1v1h-1zM170,745h1v1h-1zM173,745h1v1h-1zM159,746h1v1h-1zM168,746h1v1h-1zM169,746h1v1h-1zM171,746h1v1h-1zM172,746h1v1h-1zM157,747h1v1h-1zM158,747h1v1h-1zM168,747h1v1h-1zM169,747h1v1h-1zM157,748h1v1h-1zM159,748h1v1h-1zM161,748h1v1h-1zM162,748h1v1h-1zM163,748h1v1h-1zM168,748h1v1h-1zM157,749h1v1h-1zM159,749h1v1h-1zM160,749h1v1h-1zM161,749h1v1h-1zM162,749h1v1h-1zM164,749h1v1h-1zM165,749h1v1h-1zM167,749h1v1h-1zM168,749h1v1h-1zM161,750h1v1h-1zM163,750h1v1h-1zM164,750h1v1h-1zM159,752h1v1h-1zM160,752h1v1h-1zM158,753h1v1h-1zM161,753h1v1h-1zM162,753h1v1h-1zM161,754h1v1h-1zM159,756h1v1h-1z" fill="#000"/>
<path d="M130.0,740.0 L140.0,746.5 L144.0,752.0 L147.0,757.4 L147.0,759.0 L128.0,759.0 L124.0,748.0 Z" fill="#004364"/>
<path d="M134,743h1v1h-1zM134,744h1v1h-1zM131,745h1v1h-1zM134,745h1v1h-1zM135,745h1v1h-1zM135,746h1v1h-1zM125,748h1v1h-1zM132,748h1v1h-1zM133,748h1v1h-1zM125,749h1v1h-1zM126,749h1v1h-1zM132,749h1v1h-1zM133,749h1v1h-1zM133,750h1v1h-1zM127,751h1v1h-1zM128,751h1v1h-1zM129,751h1v1h-1zM137,752h1v1h-1zM131,753h1v1h-1zM132,754h1v1h-1zM133,754h1v1h-1zM132,755h1v1h-1zM133,755h1v1h-1zM132,756h1v1h-1zM133,756h1v1h-1zM146,757h1v1h-1z" fill="#5d4f4b"/>
<path d="M129,741h1v1h-1zM130,741h1v1h-1zM131,741h1v1h-1zM128,742h1v1h-1zM129,742h1v1h-1zM130,742h1v1h-1zM131,742h1v1h-1zM129,743h1v1h-1zM132,743h1v1h-1zM132,744h1v1h-1zM136,744h1v1h-1zM126,745h1v1h-1zM129,745h1v1h-1zM130,745h1v1h-1zM137,745h1v1h-1zM125,746h1v1h-1zM126,746h1v1h-1zM127,746h1v1h-1zM128,746h1v1h-1zM129,746h1v1h-1zM130,746h1v1h-1zM136,746h1v1h-1zM138,746h1v1h-1zM139,746h1v1h-1zM125,747h1v1h-1zM126,747h1v1h-1zM127,747h1v1h-1zM130,747h1v1h-1zM131,747h1v1h-1zM134,747h1v1h-1zM135,747h1v1h-1zM136,747h1v1h-1zM137,747h1v1h-1zM139,747h1v1h-1zM140,747h1v1h-1zM134,748h1v1h-1zM135,748h1v1h-1zM137,748h1v1h-1zM138,748h1v1h-1zM140,748h1v1h-1zM127,749h1v1h-1zM128,749h1v1h-1zM129,749h1v1h-1zM135,749h1v1h-1zM136,749h1v1h-1zM138,749h1v1h-1zM139,749h1v1h-1zM135,750h1v1h-1zM137,750h1v1h-1zM138,750h1v1h-1zM141,750h1v1h-1zM125,751h1v1h-1zM131,751h1v1h-1zM134,751h1v1h-1zM136,751h1v1h-1zM140,751h1v1h-1zM141,751h1v1h-1zM142,751h1v1h-1zM143,751h1v1h-1zM126,752h1v1h-1zM128,752h1v1h-1zM131,752h1v1h-1zM133,752h1v1h-1zM135,752h1v1h-1zM138,752h1v1h-1zM141,752h1v1h-1zM142,752h1v1h-1zM143,752h1v1h-1zM128,753h1v1h-1zM129,753h1v1h-1zM134,753h1v1h-1zM137,753h1v1h-1zM139,753h1v1h-1zM140,753h1v1h-1zM143,753h1v1h-1zM127,754h1v1h-1zM135,754h1v1h-1zM136,754h1v1h-1zM137,754h1v1h-1zM138,754h1v1h-1zM141,754h1v1h-1zM143,754h1v1h-1zM127,755h1v1h-1zM128,755h1v1h-1zM129,755h1v1h-1zM130,755h1v1h-1zM131,755h1v1h-1zM134,755h1v1h-1zM135,755h1v1h-1zM136,755h1v1h-1zM137,755h1v1h-1zM142,755h1v1h-1zM144,755h1v1h-1zM145,755h1v1h-1zM127,756h1v1h-1zM128,756h1v1h-1zM130,756h1v1h-1zM131,756h1v1h-1zM135,756h1v1h-1zM136,756h1v1h-1zM140,756h1v1h-1zM141,756h1v1h-1zM142,756h1v1h-1zM143,756h1v1h-1zM130,757h1v1h-1zM131,757h1v1h-1zM134,757h1v1h-1zM137,757h1v1h-1zM138,757h1v1h-1zM139,757h1v1h-1zM140,757h1v1h-1zM141,757h1v1h-1zM142,757h1v1h-1zM143,757h1v1h-1zM144,757h1v1h-1zM129,758h1v1h-1zM130,758h1v1h-1zM133,758h1v1h-1zM136,758h1v1h-1zM137,758h1v1h-1zM139,758h1v1h-1zM140,758h1v1h-1zM142,758h1v1h-1zM143,758h1v1h-1zM144,758h1v1h-1z" fill="#000"/>
<path d="M83.0,741.0 L97.3,744.0 L104.7,749.0 L106.0,752.7 L111.0,757.0 L108.0,759.0 L96.0,759.0 L88.0,752.0 L84.0,747.0 Z" fill="#004364"/>
<path d="M84,742h1v1h-1zM90,743h1v1h-1zM91,744h1v1h-1zM95,745h1v1h-1zM96,745h1v1h-1zM88,746h1v1h-1zM90,746h1v1h-1zM91,746h1v1h-1zM94,746h1v1h-1zM95,746h1v1h-1zM98,746h1v1h-1zM89,747h1v1h-1zM91,747h1v1h-1zM92,747h1v1h-1zM88,748h1v1h-1zM97,748h1v1h-1zM92,749h1v1h-1zM93,749h1v1h-1zM96,749h1v1h-1zM97,749h1v1h-1zM98,749h1v1h-1zM102,749h1v1h-1zM91,750h1v1h-1zM96,750h1v1h-1zM99,750h1v1h-1zM100,750h1v1h-1zM102,750h1v1h-1zM92,751h1v1h-1zM96,751h1v1h-1zM103,751h1v1h-1zM103,752h1v1h-1zM91,753h1v1h-1zM98,753h1v1h-1zM92,754h1v1h-1zM93,754h1v1h-1zM97,754h1v1h-1zM92,755h1v1h-1zM93,755h1v1h-1zM95,755h1v1h-1zM96,755h1v1h-1zM106,755h1v1h-1zM96,756h1v1h-1zM106,758h1v1h-1zM108,758h1v1h-1z" fill="#5d4f4b"/>
<path d="M86,742h1v1h-1zM87,742h1v1h-1zM88,742h1v1h-1zM89,742h1v1h-1zM84,743h1v1h-1zM86,743h1v1h-1zM87,743h1v1h-1zM88,743h1v1h-1zM84,744h1v1h-1zM85,744h1v1h-1zM86,744h1v1h-1zM88,744h1v1h-1zM89,744h1v1h-1zM93,744h1v1h-1zM96,744h1v1h-1zM84,745h1v1h-1zM85,745h1v1h-1zM86,745h1v1h-1zM88,745h1v1h-1zM90,745h1v1h-1zM92,745h1v1h-1zM93,745h1v1h-1zM84,746h1v1h-1zM85,746h1v1h-1zM86,746h1v1h-1zM87,746h1v1h-1zM96,746h1v1h-1zM100,746h1v1h-1zM84,747h1v1h-1zM85,747h1v1h-1zM86,747h1v1h-1zM93,747h1v1h-1zM95,747h1v1h-1zM97,747h1v1h-1zM98,747h1v1h-1zM100,747h1v1h-1zM101,747h1v1h-1zM85,748h1v1h-1zM86,748h1v1h-1zM89,748h1v1h-1zM90,748h1v1h-1zM94,748h1v1h-1zM95,748h1v1h-1zM98,748h1v1h-1zM99,748h1v1h-1zM100,748h1v1h-1zM101,748h1v1h-1zM86,749h1v1h-1zM88,749h1v1h-1zM90,749h1v1h-1zM91,749h1v1h-1zM95,749h1v1h-1zM99,749h1v1h-1zM103,749h1v1h-1zM104,749h1v1h-1zM89,750h1v1h-1zM90,750h1v1h-1zM93,750h1v1h-1zM88,751h1v1h-1zM89,751h1v1h-1zM90,751h1v1h-1zM91,751h1v1h-1zM97,751h1v1h-1zM100,751h1v1h-1zM104,751h1v1h-1zM105,751h1v1h-1zM99,752h1v1h-1zM101,752h1v1h-1zM104,752h1v1h-1zM105,752h1v1h-1zM94,753h1v1h-1zM95,753h1v1h-1zM99,753h1v1h-1zM100,753h1v1h-1zM101,753h1v1h-1zM102,753h1v1h-1zM103,753h1v1h-1zM105,753h1v1h-1zM106,753h1v1h-1zM96,754h1v1h-1zM98,754h1v1h-1zM99,754h1v1h-1zM100,754h1v1h-1zM103,754h1v1h-1zM104,754h1v1h-1zM107,754h1v1h-1zM97,755h1v1h-1zM101,755h1v1h-1zM102,755h1v1h-1zM103,755h1v1h-1zM107,755h1v1h-1zM108,755h1v1h-1zM98,756h1v1h-1zM100,756h1v1h-1zM101,756h1v1h-1zM102,756h1v1h-1zM103,756h1v1h-1zM104,756h1v1h-1zM106,756h1v1h-1zM107,756h1v1h-1zM108,756h1v1h-1zM109,756h1v1h-1zM96,757h1v1h-1zM100,757h1v1h-1zM102,757h1v1h-1zM103,757h1v1h-1zM104,757h1v1h-1zM109,757h1v1h-1zM96,758h1v1h-1zM98,758h1v1h-1zM99,758h1v1h-1zM100,758h1v1h-1zM101,758h1v1h-1zM102,758h1v1h-1zM103,758h1v1h-1zM104,758h1v1h-1zM105,758h1v1h-1z" fill="#000"/>
<path d="M113.0,748.0 L122.0,746.5 L126.0,748.0 L127.0,759.0 L113.0,759.0 Z" fill="#004364"/>
<path d="M123,747h1v1h-1zM116,748h1v1h-1zM119,748h1v1h-1zM120,748h1v1h-1zM121,748h1v1h-1zM123,748h1v1h-1zM116,749h1v1h-1zM119,749h1v1h-1zM120,749h1v1h-1zM121,749h1v1h-1zM113,750h1v1h-1zM116,750h1v1h-1zM121,750h1v1h-1zM122,750h1v1h-1zM118,753h1v1h-1zM123,753h1v1h-1zM124,753h1v1h-1zM114,754h1v1h-1zM119,754h1v1h-1zM115,755h1v1h-1z" fill="#5d4f4b"/>
<path d="M117,747h1v1h-1zM119,747h1v1h-1zM121,747h1v1h-1zM122,747h1v1h-1zM124,747h1v1h-1zM113,748h1v1h-1zM114,748h1v1h-1zM115,748h1v1h-1zM118,748h1v1h-1zM122,748h1v1h-1zM113,749h1v1h-1zM114,749h1v1h-1zM115,749h1v1h-1zM118,749h1v1h-1zM114,750h1v1h-1zM115,750h1v1h-1zM119,750h1v1h-1zM123,750h1v1h-1zM113,751h1v1h-1zM115,751h1v1h-1zM117,751h1v1h-1zM118,751h1v1h-1zM119,751h1v1h-1zM120,751h1v1h-1zM124,751h1v1h-1zM113,752h1v1h-1zM116,752h1v1h-1zM117,752h1v1h-1zM120,752h1v1h-1zM125,752h1v1h-1zM113,753h1v1h-1zM114,753h1v1h-1zM116,753h1v1h-1zM117,753h1v1h-1zM125,753h1v1h-1zM113,754h1v1h-1zM117,754h1v1h-1zM118,754h1v1h-1zM124,754h1v1h-1zM126,754h1v1h-1zM116,755h1v1h-1zM117,755h1v1h-1zM118,755h1v1h-1zM121,755h1v1h-1zM122,755h1v1h-1zM123,755h1v1h-1zM124,755h1v1h-1zM114,756h1v1h-1zM116,756h1v1h-1zM118,756h1v1h-1zM120,756h1v1h-1zM121,756h1v1h-1zM123,756h1v1h-1zM124,756h1v1h-1zM113,757h1v1h-1zM117,757h1v1h-1zM119,757h1v1h-1zM120,757h1v1h-1zM122,757h1v1h-1zM123,757h1v1h-1zM126,757h1v1h-1zM115,758h1v1h-1zM118,758h1v1h-1zM119,758h1v1h-1zM120,758h1v1h-1zM122,758h1v1h-1z" fill="#000"/>
<path d="M200.9,735.7 L210.0,740.0 L221.4,744.9 L229.4,749.4 L240.9,757.4 L236.0,758.0 L226.0,752.0 L214.0,746.0 L202.0,740.0 Z" fill="#004364"/>
<path d="M201,737h1v1h-1zM206,739h1v1h-1zM210,741h1v1h-1zM209,742h1v1h-1zM211,742h1v1h-1zM212,742h1v1h-1zM210,743h1v1h-1zM213,743h1v1h-1zM212,744h1v1h-1zM213,744h1v1h-1zM221,747h1v1h-1zM222,747h1v1h-1zM221,748h1v1h-1zM222,748h1v1h-1zM226,748h1v1h-1zM221,749h1v1h-1zM222,749h1v1h-1zM225,750h1v1h-1zM229,750h1v1h-1zM230,751h1v1h-1zM231,751h1v1h-1zM231,752h1v1h-1zM230,753h1v1h-1zM232,753h1v1h-1zM239,757h1v1h-1z" fill="#5d4f4b"/>
<path d="M202,736h1v1h-1zM202,737h1v1h-1zM203,737h1v1h-1zM204,737h1v1h-1zM202,738h1v1h-1zM203,738h1v1h-1zM204,738h1v1h-1zM205,738h1v1h-1zM203,739h1v1h-1zM204,739h1v1h-1zM205,739h1v1h-1zM208,739h1v1h-1zM203,740h1v1h-1zM205,740h1v1h-1zM206,740h1v1h-1zM208,740h1v1h-1zM209,740h1v1h-1zM210,740h1v1h-1zM205,741h1v1h-1zM206,741h1v1h-1zM207,741h1v1h-1zM208,741h1v1h-1zM209,741h1v1h-1zM211,741h1v1h-1zM208,742h1v1h-1zM210,742h1v1h-1zM213,742h1v1h-1zM214,742h1v1h-1zM209,743h1v1h-1zM214,743h1v1h-1zM217,743h1v1h-1zM215,744h1v1h-1zM217,744h1v1h-1zM218,744h1v1h-1zM215,745h1v1h-1zM218,745h1v1h-1zM219,745h1v1h-1zM220,745h1v1h-1zM215,746h1v1h-1zM217,746h1v1h-1zM218,746h1v1h-1zM219,746h1v1h-1zM220,746h1v1h-1zM221,746h1v1h-1zM223,746h1v1h-1zM217,747h1v1h-1zM218,747h1v1h-1zM219,747h1v1h-1zM220,747h1v1h-1zM223,747h1v1h-1zM224,747h1v1h-1zM219,748h1v1h-1zM227,748h1v1h-1zM223,749h1v1h-1zM224,749h1v1h-1zM227,749h1v1h-1zM228,749h1v1h-1zM223,750h1v1h-1zM226,750h1v1h-1zM227,750h1v1h-1zM228,750h1v1h-1zM230,750h1v1h-1zM225,751h1v1h-1zM227,751h1v1h-1zM227,752h1v1h-1zM230,752h1v1h-1zM233,752h1v1h-1zM228,753h1v1h-1zM233,753h1v1h-1zM234,753h1v1h-1zM230,754h1v1h-1zM231,754h1v1h-1zM232,754h1v1h-1zM234,754h1v1h-1zM235,754h1v1h-1zM236,754h1v1h-1zM232,755h1v1h-1zM233,755h1v1h-1zM235,755h1v1h-1zM236,755h1v1h-1zM233,756h1v1h-1zM234,756h1v1h-1zM235,756h1v1h-1zM235,757h1v1h-1zM236,757h1v1h-1zM237,757h1v1h-1z" fill="#000"/>
<path d="M804,578h1v1h-1zM799,583h1v1h-1zM798,584h1v1h-1zM797,586h1v1h-1zM798,586h1v1h-1zM798,587h1v1h-1zM799,587h1v1h-1zM800,587h1v1h-1zM803,587h1v1h-1zM798,588h1v1h-1zM802,588h1v1h-1zM799,590h1v1h-1zM800,591h1v1h-1zM801,591h1v1h-1zM796,592h1v1h-1zM801,592h1v1h-1zM802,593h1v1h-1zM801,594h1v1h-1zM802,594h1v1h-1zM803,594h1v1h-1zM802,595h1v1h-1zM803,595h1v1h-1zM797,596h1v1h-1zM796,597h1v1h-1zM797,597h1v1h-1zM797,598h1v1h-1zM798,598h1v1h-1zM800,599h1v1h-1zM799,600h1v1h-1zM800,600h1v1h-1zM801,600h1v1h-1zM800,601h1v1h-1zM799,602h1v1h-1zM799,603h1v1h-1zM804,603h1v1h-1zM798,606h1v1h-1zM797,609h1v1h-1zM797,610h1v1h-1zM801,612h1v1h-1zM802,612h1v1h-1zM804,612h1v1h-1zM797,613h1v1h-1zM801,613h1v1h-1zM803,613h1v1h-1zM804,613h1v1h-1zM800,614h1v1h-1zM803,614h1v1h-1zM804,614h1v1h-1zM800,615h1v1h-1zM801,615h1v1h-1zM802,615h1v1h-1zM803,615h1v1h-1zM804,615h1v1h-1zM800,616h1v1h-1zM801,618h1v1h-1zM803,619h1v1h-1zM797,621h1v1h-1zM796,622h1v1h-1zM797,622h1v1h-1zM798,622h1v1h-1zM796,623h1v1h-1zM799,623h1v1h-1zM803,628h1v1h-1zM802,629h1v1h-1zM804,629h1v1h-1zM803,630h1v1h-1zM800,631h1v1h-1zM803,632h1v1h-1zM802,633h1v1h-1zM803,633h1v1h-1zM803,634h1v1h-1zM800,637h1v1h-1zM796,640h1v1h-1zM797,640h1v1h-1zM797,641h1v1h-1zM798,641h1v1h-1zM797,642h1v1h-1zM798,642h1v1h-1zM803,646h1v1h-1zM804,646h1v1h-1zM804,647h1v1h-1zM795,648h1v1h-1zM801,648h1v1h-1zM803,648h1v1h-1zM801,649h1v1h-1zM802,649h1v1h-1zM803,649h1v1h-1z" fill="#004364"/>
<path d="M798,574h1v1h-1zM801,574h1v1h-1zM802,574h1v1h-1zM803,574h1v1h-1zM804,574h1v1h-1zM798,575h1v1h-1zM799,575h1v1h-1zM800,575h1v1h-1zM801,575h1v1h-1zM802,575h1v1h-1zM803,575h1v1h-1zM804,575h1v1h-1zM801,576h1v1h-1zM802,576h1v1h-1zM803,576h1v1h-1zM804,576h1v1h-1zM798,577h1v1h-1zM803,577h1v1h-1zM804,577h1v1h-1zM798,578h1v1h-1zM800,578h1v1h-1zM803,578h1v1h-1zM797,579h1v1h-1zM798,579h1v1h-1zM799,579h1v1h-1zM801,579h1v1h-1zM802,579h1v1h-1zM798,580h1v1h-1zM800,580h1v1h-1zM801,580h1v1h-1zM803,580h1v1h-1zM804,580h1v1h-1zM797,581h1v1h-1zM801,581h1v1h-1zM803,581h1v1h-1zM798,582h1v1h-1zM799,582h1v1h-1zM802,582h1v1h-1zM804,582h1v1h-1zM798,583h1v1h-1zM800,583h1v1h-1zM801,583h1v1h-1zM802,583h1v1h-1zM804,583h1v1h-1zM801,584h1v1h-1zM803,584h1v1h-1zM804,584h1v1h-1zM799,585h1v1h-1zM800,585h1v1h-1zM802,585h1v1h-1zM803,585h1v1h-1zM804,585h1v1h-1zM800,586h1v1h-1zM801,586h1v1h-1zM803,586h1v1h-1zM804,586h1v1h-1zM804,587h1v1h-1zM797,588h1v1h-1zM800,588h1v1h-1zM801,588h1v1h-1zM797,589h1v1h-1zM798,589h1v1h-1zM800,589h1v1h-1zM801,589h1v1h-1zM803,589h1v1h-1zM804,589h1v1h-1zM797,590h1v1h-1zM798,590h1v1h-1zM800,590h1v1h-1zM801,590h1v1h-1zM803,590h1v1h-1zM804,590h1v1h-1zM798,591h1v1h-1zM803,591h1v1h-1zM804,591h1v1h-1zM797,592h1v1h-1zM798,592h1v1h-1zM800,592h1v1h-1zM802,592h1v1h-1zM803,592h1v1h-1zM804,592h1v1h-1zM797,593h1v1h-1zM799,593h1v1h-1zM800,593h1v1h-1zM801,593h1v1h-1zM796,594h1v1h-1zM798,594h1v1h-1zM799,594h1v1h-1zM804,594h1v1h-1zM796,595h1v1h-1zM799,595h1v1h-1zM800,595h1v1h-1zM804,595h1v1h-1zM799,596h1v1h-1zM800,596h1v1h-1zM801,596h1v1h-1zM803,596h1v1h-1zM799,597h1v1h-1zM800,597h1v1h-1zM802,597h1v1h-1zM803,597h1v1h-1zM796,598h1v1h-1zM799,598h1v1h-1zM802,598h1v1h-1zM804,598h1v1h-1zM796,599h1v1h-1zM799,599h1v1h-1zM802,599h1v1h-1zM803,599h1v1h-1zM796,600h1v1h-1zM797,600h1v1h-1zM803,600h1v1h-1zM796,601h1v1h-1zM797,601h1v1h-1zM798,601h1v1h-1zM803,601h1v1h-1zM804,601h1v1h-1zM796,602h1v1h-1zM797,602h1v1h-1zM798,602h1v1h-1zM802,602h1v1h-1zM804,602h1v1h-1zM796,603h1v1h-1zM797,603h1v1h-1zM802,603h1v1h-1zM803,603h1v1h-1zM800,604h1v1h-1zM799,605h1v1h-1zM800,605h1v1h-1zM801,605h1v1h-1zM802,605h1v1h-1zM803,605h1v1h-1zM804,605h1v1h-1zM799,606h1v1h-1zM800,606h1v1h-1zM801,606h1v1h-1zM803,606h1v1h-1zM798,607h1v1h-1zM799,607h1v1h-1zM800,607h1v1h-1zM801,607h1v1h-1zM802,607h1v1h-1zM804,607h1v1h-1zM797,608h1v1h-1zM799,608h1v1h-1zM800,608h1v1h-1zM803,608h1v1h-1zM799,609h1v1h-1zM800,609h1v1h-1zM801,609h1v1h-1zM802,609h1v1h-1zM800,610h1v1h-1zM801,610h1v1h-1zM802,610h1v1h-1zM803,610h1v1h-1zM797,611h1v1h-1zM798,611h1v1h-1zM799,611h1v1h-1zM801,611h1v1h-1zM802,611h1v1h-1zM797,612h1v1h-1zM800,612h1v1h-1zM798,613h1v1h-1zM799,613h1v1h-1zM800,613h1v1h-1zM797,614h1v1h-1zM799,614h1v1h-1zM797,615h1v1h-1zM798,615h1v1h-1zM797,616h1v1h-1zM798,616h1v1h-1zM799,616h1v1h-1zM801,616h1v1h-1zM802,616h1v1h-1zM803,616h1v1h-1zM796,617h1v1h-1zM797,617h1v1h-1zM798,617h1v1h-1zM799,617h1v1h-1zM802,617h1v1h-1zM803,617h1v1h-1zM797,618h1v1h-1zM798,618h1v1h-1zM799,618h1v1h-1zM800,618h1v1h-1zM804,618h1v1h-1zM796,619h1v1h-1zM797,619h1v1h-1zM799,619h1v1h-1zM802,619h1v1h-1zM796,620h1v1h-1zM797,620h1v1h-1zM799,620h1v1h-1zM800,620h1v1h-1zM798,621h1v1h-1zM800,621h1v1h-1zM803,621h1v1h-1zM804,621h1v1h-1zM801,622h1v1h-1zM802,622h1v1h-1zM804,622h1v1h-1zM798,623h1v1h-1zM800,623h1v1h-1zM801,623h1v1h-1zM802,623h1v1h-1zM803,623h1v1h-1zM804,623h1v1h-1zM797,624h1v1h-1zM799,624h1v1h-1zM800,624h1v1h-1zM801,624h1v1h-1zM802,624h1v1h-1zM803,624h1v1h-1zM804,624h1v1h-1zM796,625h1v1h-1zM797,625h1v1h-1zM798,625h1v1h-1zM799,625h1v1h-1zM800,625h1v1h-1zM801,625h1v1h-1zM802,625h1v1h-1zM803,625h1v1h-1zM804,625h1v1h-1zM797,626h1v1h-1zM798,626h1v1h-1zM799,626h1v1h-1zM800,626h1v1h-1zM801,626h1v1h-1zM795,627h1v1h-1zM796,627h1v1h-1zM800,627h1v1h-1zM802,627h1v1h-1zM804,627h1v1h-1zM795,628h1v1h-1zM796,628h1v1h-1zM797,628h1v1h-1zM802,628h1v1h-1zM795,629h1v1h-1zM796,629h1v1h-1zM800,629h1v1h-1zM803,629h1v1h-1zM796,630h1v1h-1zM797,630h1v1h-1zM798,630h1v1h-1zM799,630h1v1h-1zM804,630h1v1h-1zM797,631h1v1h-1zM798,631h1v1h-1zM803,631h1v1h-1zM795,632h1v1h-1zM796,632h1v1h-1zM797,632h1v1h-1zM799,632h1v1h-1zM800,632h1v1h-1zM804,632h1v1h-1zM798,633h1v1h-1zM799,633h1v1h-1zM801,633h1v1h-1zM795,634h1v1h-1zM797,634h1v1h-1zM798,634h1v1h-1zM799,634h1v1h-1zM801,634h1v1h-1zM802,634h1v1h-1zM795,635h1v1h-1zM796,635h1v1h-1zM797,635h1v1h-1zM798,635h1v1h-1zM799,635h1v1h-1zM800,635h1v1h-1zM802,635h1v1h-1zM795,636h1v1h-1zM796,636h1v1h-1zM797,636h1v1h-1zM798,636h1v1h-1zM800,636h1v1h-1zM801,636h1v1h-1zM803,636h1v1h-1zM804,636h1v1h-1zM795,637h1v1h-1zM796,637h1v1h-1zM797,637h1v1h-1zM801,637h1v1h-1zM802,637h1v1h-1zM803,637h1v1h-1zM795,638h1v1h-1zM798,638h1v1h-1zM799,638h1v1h-1zM800,638h1v1h-1zM802,638h1v1h-1zM803,638h1v1h-1zM795,639h1v1h-1zM798,639h1v1h-1zM799,639h1v1h-1zM800,639h1v1h-1zM801,639h1v1h-1zM802,639h1v1h-1zM804,639h1v1h-1zM799,640h1v1h-1zM800,640h1v1h-1zM802,640h1v1h-1zM803,640h1v1h-1zM804,640h1v1h-1zM799,641h1v1h-1zM802,641h1v1h-1zM804,641h1v1h-1zM795,642h1v1h-1zM799,642h1v1h-1zM800,642h1v1h-1zM796,643h1v1h-1zM799,643h1v1h-1zM801,643h1v1h-1zM802,643h1v1h-1zM804,643h1v1h-1zM794,644h1v1h-1zM795,644h1v1h-1zM796,644h1v1h-1zM797,644h1v1h-1zM798,644h1v1h-1zM799,644h1v1h-1zM800,644h1v1h-1zM801,644h1v1h-1zM802,644h1v1h-1zM803,644h1v1h-1zM804,644h1v1h-1zM794,645h1v1h-1zM799,645h1v1h-1zM800,645h1v1h-1zM801,645h1v1h-1zM802,645h1v1h-1zM803,645h1v1h-1zM794,646h1v1h-1zM795,646h1v1h-1zM797,646h1v1h-1zM800,646h1v1h-1zM801,646h1v1h-1zM802,646h1v1h-1zM795,647h1v1h-1zM796,647h1v1h-1zM797,647h1v1h-1zM798,647h1v1h-1zM799,647h1v1h-1zM800,647h1v1h-1zM801,647h1v1h-1zM803,647h1v1h-1zM796,648h1v1h-1zM797,648h1v1h-1zM798,648h1v1h-1zM799,648h1v1h-1zM804,648h1v1h-1zM797,649h1v1h-1zM798,649h1v1h-1zM799,649h1v1h-1zM794,650h1v1h-1zM795,650h1v1h-1zM796,650h1v1h-1zM798,650h1v1h-1zM799,650h1v1h-1zM794,651h1v1h-1zM795,651h1v1h-1zM796,651h1v1h-1z" fill="#000"/>
<path d="M799.0,576.0 L797.2,575.2 L795.7,575.3 L793.9,574.7 L791.5,574.5 L789.1,573.8 L787.4,573.3" fill="none" stroke="#000" stroke-width="1.0"/>
<path d="M799.0,583.0 L797.1,582.5 L795.3,582.1 L792.6,582.0" fill="none" stroke="#000" stroke-width="1.6"/>
<path d="M799.0,596.0 L797.2,595.6 L795.1,596.3 L792.6,595.6 L791.1,595.4 L788.6,595.3 L785.7,595.3" fill="none" stroke="#000" stroke-width="1.0"/>
<path d="M799.0,603.0 L797.4,602.8 L794.9,602.7 L793.2,601.9 L791.2,602.0" fill="none" stroke="#000" stroke-width="1.4"/>
<path d="M799.0,607.0 L797.0,607.1 L794.2,606.6 L792.7,606.0 L790.9,605.0" fill="none" stroke="#000" stroke-width="1.4"/>
<path d="M799.0,613.0 L797.0,612.6 L795.5,611.7 L792.7,611.9" fill="none" stroke="#000" stroke-width="1.3"/>
<path d="M799.0,618.5 L797.0,618.2 L795.1,618.6 L793.1,618.4 L791.2,617.4 L789.2,616.7 L786.4,617.5" fill="none" stroke="#000" stroke-width="1.4"/>
<path d="M799.0,626.0 L797.0,625.2 L795.1,625.4 L793.3,625.5 L791.4,624.5" fill="none" stroke="#000" stroke-width="1.5"/>
<path d="M799.0,633.0 L796.6,632.7 L794.6,632.7 L792.8,632.8 L790.0,631.9" fill="none" stroke="#000" stroke-width="1.1"/>
<path d="M799.0,640.0 L796.1,640.4 L794.3,640.4 L792.2,640.4 L790.4,640.9" fill="none" stroke="#000" stroke-width="1.8"/>
<path d="M799.0,647.0 L796.2,646.3 L793.5,645.4 L791.2,645.1 L788.8,645.8 L786.1,646.2 L783.3,646.2" fill="none" stroke="#000" stroke-width="1.7"/>
<path d="M799.0,651.0 L796.0,650.9 L793.8,650.3 L791.3,651.1 L789.4,651.0 L787.3,651.3 L785.3,650.4 L782.5,650.4 L780.3,650.7" fill="none" stroke="#000" stroke-width="1.5"/>
<path d="M804.5,574.0 L803.8,578.0 L803.4,580.8 L803.2,583.1 L804.6,586.3 L803.5,590.0 L803.6,593.3 L803.1,596.7 L802.4,600.6 L802.1,602.9 L801.8,606.2 L802.5,610.0 L802.4,614.1 L802.4,616.0 L802.3,620.9 L802.0,623.5 L802.7,627.0 L803.0,630.0 L802.6,633.3 L802.8,636.3 L803.5,639.1 L802.0,641.2 L803.4,645.0 L802.5,648.0 L806.0,648.0 L806.0,574.0 Z" fill="#004364"/>
<path d="M679,760h2v2h-2zM683,758h2v3h-2zM681,764h3v2h-3zM685,762h1v2h-1zM677,757h1v1h-1z" fill="#000"/>
<path d="M309.0,666.0 L313.0,664.0 L319.0,662.0 L322.8,661.6 L326.8,661.4 L331.0,660.6 L335.0,660.3" fill="none" stroke="#000" stroke-width="1.3"/>
<path d="M257.0,660.5 L263.0,662.0 L270.0,663.0 L276.0,664.5 L281.0,664.8 L286.0,665.0" fill="none" stroke="#000" stroke-width="1.3" stroke-dasharray="5 3 2 4 7 3"/>
<path d="M335.0,661.0 L339.5,660.0 L343.7,659.4 L347.5,659.2 L351.6,658.2 L355.6,657.9 L360.0,656.8 L364.6,655.6 L368.0,654.8 L372.5,654.1 L376.5,653.0 L380.6,651.7 L385.0,651.0 L389.6,650.1 L394.9,649.3 L399.8,648.3 L405.1,648.1 L409.5,648.1 L414.9,647.9 L419.5,648.0 L423.6,648.5 L428.3,649.0 L432.1,650.0 L436.7,650.4 L440.9,651.9 L444.5,653.1 L449.0,654.7 L452.8,656.3 L457.6,658.4 L461.4,659.7 L466.5,662.1 L471.0,664.7 L474.9,667.4 L478.6,669.5 L482.2,672.5 L486.0,675.7 L492.0,680.7 L495.9,683.0 L499.5,685.5" fill="none" stroke="#000" stroke-width="1.7"/>
<path d="M501.0,685.0 L507.0,690.0 L506.3,697.0 L506.9,701.3 L507.6,706.0 L512.0,712.0" fill="none" stroke="#000" stroke-width="1.3"/>
<path d="M520.0,713.0 L527.0,711.5 L532.0,713.6 L534.4,718.5 L539.0,718.5 L542.8,716.8 L546.7,714.8 L551.6,712.1 L556.6,708.7 L561.0,704.5" fill="none" stroke="#000" stroke-width="1.3"/>
<path d="M248.8,678.0 L251.2,682.8 L253.7,688.0 L253.1,692.9 L251.9,698.0 L251.0,702.9 L248.5,707.0 L246.5,710.6 L243.8,715.0 L240.6,718.1 L237.4,721.8 L234.0,725.0 L228.6,727.2 L224.0,730.0" fill="none" stroke="#000" stroke-width="1.3" stroke-dasharray="5 3 2 4 7 3"/>
<path d="M784.0,651.0 L785.6,654.9 L785.0,660.4 L786.5,664.0 L784.3,668.4 L784.0,673.0 L787.0,680.0 L791.0,686.0 L791.4,690.8 L791.5,695.0 L791.4,699.8 L793.0,704.0 L791.5,708.8 L790.0,712.0 L787.1,717.1 L786.5,720.0 L788.0,727.0 L787.0,734.0" fill="none" stroke="#000" stroke-width="4" stroke-linejoin="round"/>
<path d="M784.0,651.0 L785.6,654.9 L785.0,660.4 L786.5,664.0 L784.3,668.4 L784.0,673.0 L787.0,680.0 L791.0,686.0 L791.4,690.8 L791.5,695.0 L791.4,699.8 L793.0,704.0 L791.5,708.8 L790.0,712.0 L787.1,717.1 L786.5,720.0 L788.0,727.0 L787.0,734.0" fill="none" stroke="#004364" stroke-width="2.2" stroke-linejoin="round"/>
<path d="M202.0,6.0 L201.4,7.6 L204.8,10.0 L206.3,13.2 L204.2,16.5 L205.8,17.6 L208.0,22.0 L205.7,24.4 L203.9,28.3 L202.8,30.2 L202.0,32.0 L202.6,33.0 L204.1,37.6 L205.5,39.9 L205.3,40.6 L206.5,44.3 L209.0,46.8 L211.8,48.8 L213.2,50.3 L212.6,54.7 L216.2,57.6 L216.7,59.0 L218.2,57.8 L221.3,57.2 L225.0,55.0 L226.9,57.9 L229.3,61.2 L229.8,63.5 L231.5,64.0 L229.5,67.9 L227.6,69.8 L229.3,71.7 L226.6,74.0 L227.8,78.7 L230.0,81.0 L229.1,84.3 L225.4,86.2 L224.0,88.7 L221.4,92.1 L221.8,95.9 L221.7,98.5 L217.4,96.3 L215.2,93.9 L214.0,92.4 L214.5,96.1 L212.0,97.4 L208.8,99.0 L209.0,103.4 L206.9,106.9 L204.4,107.0 L204.8,103.1 L205.2,100.3 L203.0,98.5 L198.0,98.5 L197.0,103.0 L197.9,105.5 L202.0,108.0 L200.1,109.0 L200.2,112.4 L197.0,115.8 L197.8,116.5 L197.7,122.2 L200.7,123.0 L199.6,124.4 L193.6,123.6 L191.1,124.1 L189.7,126.8 L192.6,128.8 L191.7,130.3 L195.0,133.4 L197.0,135.5 L194.9,136.0 L193.8,137.8 L190.3,141.9 L188.4,142.9 L186.3,144.7 L187.0,150.0 L190.4,153.2 L189.2,155.6 L192.0,157.6 L187.7,159.6 L184.7,157.8 L183.5,160.0 L185.6,162.4 L189.7,163.8 L188.6,163.8 L185.7,165.3 L182.1,167.1 L178.9,168.1 L176.8,167.0 L175.4,169.2 L172.4,170.0 L169.5,175.1 L170.0,177.0 L173.0,178.5 L175.1,181.3 L176.0,182.0 L171.3,181.8 L170.0,184.7 L170.5,187.6 L171.0,191.0 L168.8,190.1 L164.1,191.2 L162.6,192.0 L161.9,192.8 L157.6,197.0 L161.7,199.8 L162.6,202.0 L159.2,201.5 L156.7,203.6 L154.0,204.8 L153.6,206.8 L157.9,211.2 L157.6,212.0 L157.0,214.1 L155.0,217.0 L158.0,217.8 L159.1,222.7 L160.0,224.5 L155.1,225.3 L152.7,227.0 L150.8,230.4 L149.8,230.7 L147.8,234.0 L146.5,235.4 L142.9,236.8 L145.1,238.8 L144.8,241.2 L145.4,245.2 L147.8,246.7 L145.9,247.5 L143.3,249.8 L142.1,249.1 L138.0,251.6 L134.0,251.1 L133.0,247.9 L133.8,251.6 L131.5,255.3 L130.5,256.5 L129.4,257.3 L125.6,261.0 L128.4,263.8 L128.9,265.4 L131.8,266.0 L131.2,267.7 L127.4,269.6 L125.6,271.0 L125.4,269.0 L123.0,266.0 L125.4,269.1 L123.7,271.1 L125.7,275.7 L125.6,278.7 L125.1,283.6 L125.1,285.8 L123.3,287.1 L122.0,291.0 L119.0,291.2 L115.9,294.4 L113.0,293.4 L114.6,296.8 L115.8,298.0 L113.7,298.7 L112.2,300.4 L108.4,300.8 L105.4,301.8 L104.1,304.7 L99.4,303.0 L98.5,305.8 L101.5,307.1 L102.2,311.3 L106.0,312.0 L103.5,312.0 L101.7,314.2 L97.3,315.6 L96.8,316.4 L98.5,321.9 L101.0,323.0 L99.1,325.6 L96.6,327.2 L93.6,328.0 L90.4,328.3 L88.3,330.1 L86.0,330.0 L87.2,333.5 L88.3,335.1 L91.0,337.8 L89.5,338.7 L86.2,343.1 L86.0,345.0 L88.0,346.1 L92.4,347.6 L91.0,349.3 L87.3,350.5 L83.0,350.2 L81.0,352.6 L82.7,353.1 L85.0,355.9 L88.7,357.5 L86.2,358.3 L83.4,356.1 L80.1,357.0 L76.5,359.2 L75.0,357.5 L76.0,360.8 L77.9,362.4 L81.0,364.9 L77.6,368.8 L77.1,370.8 L74.0,372.0 L78.2,372.3 L78.6,374.1 L82.0,376.3 L83.7,375.6 L86.0,377.0 L84.9,377.6 L81.3,379.0 L78.8,382.0 L79.9,384.4 L78.6,388.3 L81.0,390.0 L85.1,390.9 L86.0,392.0 L82.9,396.1 L82.5,397.5 L80.0,399.9 L81.3,401.3 L78.8,404.6 L78.9,409.0 L78.4,410.2 L78.7,412.5 L81.0,415.7 L79.8,417.3 L76.4,421.9 L79.9,423.0 L84.0,424.4 L86.0,424.0 L85.8,427.2 L85.5,429.9 L82.1,429.9 L82.6,434.2 L81.0,436.7 L84.1,437.9 L83.4,442.3 L85.2,443.7 L87.0,446.0 L88.7,449.0 L88.8,453.1 L85.4,453.1 L83.3,456.2 L83.7,458.8 L88.0,460.3 L87.5,461.2 L90.6,465.4 L93.6,466.0 L96.4,469.2 L99.1,469.2 L99.8,472.0 L98.6,476.8 L96.0,478.5 L94.7,481.4 L89.9,481.5 L88.5,482.8 L86.0,485.9 L84.3,488.7 L81.1,487.5 L78.8,490.8 L81.3,493.4 L82.3,494.0 L85.8,493.1 L88.7,495.8 L88.9,498.1 L87.5,499.2 L83.8,502.6 L83.7,505.6 L82.0,505.5 L79.6,507.4 L76.4,510.5 L73.5,511.3 L74.0,516.6 L74.4,516.3 L71.4,520.0 L68.5,522.0 L67.1,523.2 L64.0,525.0 L62.3,526.8 L61.7,532.9 L63.3,535.7 L61.6,537.6 L57.5,538.9 L57.2,542.2 L54.0,542.6 L54.7,546.1 L56.2,549.6 L56.7,552.0 L55.9,554.3 L52.9,555.3 L49.0,557.0 L51.5,560.4 L53.0,562.0 L51.2,563.4 L52.7,566.8 L51.7,569.9 L46.4,569.9 L44.0,571.0 L44.5,573.2 L44.9,576.2 L45.9,578.2 L46.9,581.7 L48.0,584.6 L47.8,587.8 L45.0,590.7 L44.0,594.0" fill="none" stroke="#000" stroke-width="1"/>
<ellipse cx="202.2" cy="10.2" rx="1.8" ry="1.5" fill="none" stroke="#000" stroke-width="1"/>
<ellipse cx="205.6" cy="28.8" rx="2.2" ry="2.1" fill="none" stroke="#000" stroke-width="1"/>
<ellipse cx="215.5" cy="58.5" rx="2.0" ry="1.6" fill="none" stroke="#000" stroke-width="1"/>
<ellipse cx="228.0" cy="73.3" rx="2.2" ry="2.1" fill="none" stroke="#000" stroke-width="1"/>
<ellipse cx="228.6" cy="74.2" rx="1.8" ry="1.8" fill="none" stroke="#000" stroke-width="1"/>
<ellipse cx="211.6" cy="95.9" rx="2.7" ry="2.9" fill="none" stroke="#000" stroke-width="1"/>
<ellipse cx="199.3" cy="96.9" rx="2.2" ry="2.1" fill="none" stroke="#000" stroke-width="1"/>
<ellipse cx="197.9" cy="104.6" rx="1.6" ry="1.3" fill="none" stroke="#000" stroke-width="1"/>
<ellipse cx="197.4" cy="118.4" rx="1.9" ry="1.7" fill="none" stroke="#000" stroke-width="1"/>
<ellipse cx="190.6" cy="142.3" rx="2.3" ry="2.2" fill="none" stroke="#000" stroke-width="1"/>
<ellipse cx="186.9" cy="142.5" rx="1.8" ry="1.5" fill="none" stroke="#000" stroke-width="1"/>
<ellipse cx="168.7" cy="174.9" rx="1.8" ry="1.9" fill="none" stroke="#000" stroke-width="1"/>
<ellipse cx="172.6" cy="177.7" rx="2.1" ry="2.0" fill="none" stroke="#000" stroke-width="1"/>
<ellipse cx="177.1" cy="183.1" rx="2.7" ry="2.5" fill="none" stroke="#000" stroke-width="1"/>
<ellipse cx="170.9" cy="185.9" rx="2.4" ry="2.9" fill="none" stroke="#000" stroke-width="1"/>
<ellipse cx="157.6" cy="195.2" rx="2.4" ry="2.8" fill="none" stroke="#000" stroke-width="1"/>
<ellipse cx="158.8" cy="199.2" rx="2.8" ry="3.4" fill="none" stroke="#000" stroke-width="1"/>
<ellipse cx="154.2" cy="227.1" rx="2.1" ry="1.8" fill="none" stroke="#000" stroke-width="1"/>
<ellipse cx="135.5" cy="250.9" rx="2.7" ry="3.0" fill="none" stroke="#000" stroke-width="1"/>
<ellipse cx="127.8" cy="260.1" rx="1.8" ry="2.1" fill="none" stroke="#000" stroke-width="1"/>
<ellipse cx="126.1" cy="268.8" rx="2.0" ry="2.1" fill="none" stroke="#000" stroke-width="1"/>
<ellipse cx="125.8" cy="268.1" rx="2.4" ry="2.8" fill="none" stroke="#000" stroke-width="1"/>
<ellipse cx="124.5" cy="268.5" rx="2.5" ry="2.5" fill="none" stroke="#000" stroke-width="1"/>
<ellipse cx="107.4" cy="301.2" rx="1.7" ry="2.2" fill="none" stroke="#000" stroke-width="1"/>
<ellipse cx="103.1" cy="308.4" rx="2.3" ry="2.0" fill="none" stroke="#000" stroke-width="1"/>
<ellipse cx="90.8" cy="326.9" rx="2.2" ry="2.1" fill="none" stroke="#000" stroke-width="1"/>
<ellipse cx="91.1" cy="346.6" rx="1.8" ry="1.9" fill="none" stroke="#000" stroke-width="1"/>
<ellipse cx="87.3" cy="358.2" rx="2.7" ry="3.4" fill="none" stroke="#000" stroke-width="1"/>
<ellipse cx="75.3" cy="356.1" rx="1.9" ry="1.7" fill="none" stroke="#000" stroke-width="1"/>
<ellipse cx="82.9" cy="376.2" rx="2.3" ry="2.4" fill="none" stroke="#000" stroke-width="1"/>
<ellipse cx="83.0" cy="376.0" rx="2.3" ry="2.1" fill="none" stroke="#000" stroke-width="1"/>
<ellipse cx="80.2" cy="388.8" rx="1.8" ry="1.7" fill="none" stroke="#000" stroke-width="1"/>
<ellipse cx="84.2" cy="394.4" rx="1.9" ry="1.6" fill="none" stroke="#000" stroke-width="1"/>
<ellipse cx="87.5" cy="443.6" rx="2.5" ry="1.9" fill="none" stroke="#000" stroke-width="1"/>
<ellipse cx="99.5" cy="472.3" rx="2.5" ry="2.6" fill="none" stroke="#000" stroke-width="1"/>
<ellipse cx="100.1" cy="471.1" rx="2.0" ry="1.6" fill="none" stroke="#000" stroke-width="1"/>
<ellipse cx="92.0" cy="480.2" rx="2.8" ry="2.6" fill="none" stroke="#000" stroke-width="1"/>
<ellipse cx="86.4" cy="495.9" rx="1.9" ry="2.3" fill="none" stroke="#000" stroke-width="1"/>
<ellipse cx="86.0" cy="504.9" rx="2.7" ry="2.4" fill="none" stroke="#000" stroke-width="1"/>
<ellipse cx="82.6" cy="504.5" rx="2.1" ry="2.6" fill="none" stroke="#000" stroke-width="1"/>
<ellipse cx="62.0" cy="526.0" rx="2.1" ry="2.2" fill="none" stroke="#000" stroke-width="1"/>
<ellipse cx="60.4" cy="537.4" rx="2.0" ry="2.4" fill="none" stroke="#000" stroke-width="1"/>
<ellipse cx="51.5" cy="568.9" rx="1.9" ry="2.4" fill="none" stroke="#000" stroke-width="1"/>
<ellipse cx="46.5" cy="571.1" rx="2.8" ry="2.2" fill="none" stroke="#000" stroke-width="1"/>
<ellipse cx="44.5" cy="591.5" rx="1.6" ry="1.3" fill="none" stroke="#000" stroke-width="1"/>
<path d="M44.0,594.0 L186.0,594.5" fill="none" stroke="#000" stroke-width="1"/>
<path d="M186.0,594.5 L185.5,597.9 L183.8,600.0 L183.4,604.7 L182.0,606.8 L180.7,610.6 L178.7,613.0 L177.9,615.9 L177.3,619.0 L178.5,622.7 L179.2,625.7 L179.8,627.2 L181.0,631.4 L182.0,633.9 L185.0,635.3 L186.6,638.1 L189.7,641.0 L190.2,644.9 L190.4,646.4 L192.2,651.2 L192.0,653.6 L193.8,655.8 L194.0,659.1 L196.6,662.1 L197.0,665.9" fill="none" stroke="#000" stroke-width="1"/>
<path d="M6.0,415.7 L78.8,415.7" fill="none" stroke="#000" stroke-width="1"/>
<path d="M6.0,105.2 L155.0,105.2 L160.0,113.0 L160.0,123.0 L152.7,130.5 L145.0,140.0 L138.0,149.0 L187.0,149.0" fill="none" stroke="#000" stroke-width="1"/>
<path d="M304.5,6.0 L306.8,9.6 L309.4,12.3 L308.3,15.4 L307.0,18.5 L304.5,18.5 L301.6,19.5 L296.7,20.5 L293.8,21.4 L291.5,20.4 L288.9,21.1 L284.8,22.0 L282.0,23.5 L277.4,27.0 L276.5,30.6 L276.0,33.3 L276.0,37.0 L277.2,39.5 L280.7,41.3 L282.0,44.0 L281.7,47.1 L281.1,51.0 L280.0,53.0 L277.1,52.3 L274.0,52.6 L271.0,51.7 L269.5,50.7 L265.6,47.0 L264.4,45.3 L261.0,44.0 L258.4,42.4 L255.0,42.6 L252.9,41.0 L248.8,40.9 L246.0,39.4 L242.9,39.5 L239.3,40.5 L236.5,41.9 L234.5,44.6 L230.7,46.6 L229.0,49.0 L227.5,52.7 L225.0,55.0" fill="none" stroke="#000" stroke-width="1"/>
<path d="M209.0,104.7 L311.9,105.0 L311.5,96.0 L309.3,88.6 L324.0,88.4 L325.4,91.8 L420.0,90.6 L530.0,94.0 L636.0,96.5 L786.0,94.8 L806.0,98.5" fill="none" stroke="#000" stroke-width="1"/>
<path d="M636.0,96.5 L638.8,95.3 L642.4,92.9 L643.8,92.3 L647.0,90.8 L650.9,88.0 L653.0,87.4 L655.9,86.1 L658.9,86.9 L661.8,85.1 L665.0,83.9 L667.9,83.0 L672.4,83.6 L675.0,82.5 L676.4,80.2 L679.2,76.3 L680.0,74.0 L683.3,72.5 L685.6,72.1 L688.9,71.9 L691.7,70.5 L695.0,70.0 L696.8,67.0 L697.9,65.0 L699.6,61.2 L700.0,59.0 L703.0,57.5 L707.0,55.0 L707.4,51.5 L708.6,48.0 L711.0,47.6 L714.1,44.9 L717.7,43.3 L719.2,43.3 L722.1,42.4 L726.2,40.6 L728.0,40.1 L731.0,38.4 L733.6,37.4 L737.0,34.6 L738.4,33.3 L741.8,33.0 L743.7,30.3 L746.5,28.2 L749.3,26.5 L750.7,23.3 L754.8,22.6 L755.7,18.9 L759.2,17.0 L761.5,14.8 L766.5,12.3 L762.6,12.1 L760.4,10.2 L757.0,9.5 L752.6,7.7 L749.0,7.4" fill="none" stroke="#000" stroke-width="1"/>
<path d="M749.0,7.4 L751.6,9.2 L754.1,10.4 L757.5,11.2 L761.7,11.8 L764.0,13.5 L765.2,18.1 L765.9,20.6 L766.5,24.6 L768.2,28.1 L770.9,30.3 L773.7,31.3 L776.0,34.5 L778.3,36.1 L781.2,37.7 L783.6,40.2 L786.0,41.9 L788.6,41.9 L792.2,41.3 L796.2,40.5 L798.5,39.4 L802.5,37.3 L806.0,34.5" fill="none" stroke="#000" stroke-width="1"/>
<path d="M786.0,94.8 L784.9,97.6 L784.6,101.8 L782.5,106.0 L782.4,108.4 L781.5,112.4 L782.2,114.6 L781.0,118.0 L776.0,115.8 L773.0,117.4 L771.2,120.3 L767.9,122.4 L766.5,125.6 L764.8,129.0 L763.1,132.3 L760.4,134.2 L759.0,138.0 L756.4,137.7 L753.2,136.1 L749.2,137.0 L746.3,135.8 L744.0,135.5 L741.4,136.8 L738.5,136.8 L735.1,138.4 L732.0,140.0 L729.9,141.8 L727.9,144.3 L724.0,147.0 L721.4,149.8 L719.7,151.5 L716.2,149.2 L715.0,146.1 L712.0,144.0 L708.3,146.5 L705.7,147.4 L702.4,150.0 L700.4,151.5 L696.5,153.0 L693.8,155.0 L693.8,158.1 L692.9,160.7 L690.8,165.1 L691.0,167.5 L687.2,167.5 L684.0,168.3 L681.0,170.2 L677.8,170.0 L675.5,171.1 L672.2,174.4 L669.7,175.3 L668.0,177.0 L664.5,178.0 L662.0,180.2 L660.2,181.5 L656.5,183.1 L654.3,185.5 L650.7,187.0 L647.9,188.1 L644.0,187.8 L641.0,188.6 L639.0,187.7 L634.4,188.4 L631.6,188.5 L628.5,189.7 L624.7,191.0 L622.8,193.2 L619.1,193.9 L617.1,195.6 L613.7,198.0 L612.5,197.0 L612.2,200.1 L611.9,202.0 L609.5,205.1 L610.2,208.9 L608.8,212.0 L605.0,211.9 L602.6,213.5 L598.9,214.1 L596.5,214.6 L592.6,216.3 L590.0,217.0 L590.0,219.8 L589.6,223.8 L588.5,225.5 L589.0,230.0 L588.4,232.7 L587.5,235.7 L588.0,239.0" fill="none" stroke="#000" stroke-width="1"/>
<path d="M145.0,238.5 L299.6,238.0 L493.0,239.0 L588.0,239.0 L679.0,238.5" fill="none" stroke="#000" stroke-width="1"/>
<path d="M299.6,238.0 L307.0,247.9 L304.5,273.7 L297.0,350.0 L292.0,390.0 L287.0,441.6 L282.0,478.5 L279.9,527.8 L282.0,580.0 L284.8,648.7" fill="none" stroke="#000" stroke-width="1"/>
<path d="M493.0,239.0 L493.3,243.2 L494.4,244.5 L494.7,247.9 L494.1,252.4 L496.5,255.0 L496.4,257.5 L496.6,261.4 L496.3,264.0 L496.8,267.9 L497.5,270.3 L497.8,272.7 L498.9,276.3 L499.3,279.4 L500.5,281.6 L500.9,284.4 L501.6,288.8 L502.7,291.9 L502.5,295.1 L503.2,297.5 L502.5,299.2 L503.4,303.9 L505.2,306.7 L504.9,308.5 L505.2,312.9 L505.5,315.8 L506.5,318.0 L507.2,321.1 L506.9,323.6 L507.4,327.8 L507.4,329.9 L509.1,332.8 L508.6,337.3 L509.3,340.3 L510.3,342.8 L510.3,345.5 L510.9,349.1 L510.7,351.3 L512.3,355.4 L511.5,358.5 L512.0,360.3 L513.1,363.1 L514.5,365.9 L513.9,369.7 L515.2,371.9 L515.3,376.6 L514.6,378.8 L516.0,382.0 L517.4,384.2 L516.6,388.1 L518.0,391.1 L517.4,394.6 L519.0,396.2 L518.8,399.0 L520.5,403.5 L520.4,405.9 L519.7,408.5 L520.6,412.0 L522.1,415.1 L522.5,417.9 L522.5,421.0 L523.3,424.4 L523.7,426.8 L525.5,430.3 L525.8,432.8 L526.9,435.4 L527.8,437.6 L528.6,441.6 L530.3,444.1 L531.0,446.5 L532.6,450.1 L534.9,453.2 L535.8,455.4 L536.7,457.3 L538.5,461.0 L537.3,464.7 L538.6,466.5 L536.7,469.9 L537.0,473.6 L540.7,475.6 L543.4,477.7 L545.8,481.0 L544.3,482.6 L541.3,484.9 L538.1,486.2 L536.0,488.0 L535.9,490.7 L534.7,493.1 L532.8,497.0 L533.6,499.4 L532.0,503.0 L531.1,506.9 L531.1,510.2 L531.2,512.6 L531.3,516.2 L531.0,520.0 L531.9,524.2 L531.5,526.8 L531.8,529.7 L533.3,533.5 L532.8,537.1 L533.0,540.0 L533.2,542.7 L532.4,547.1 L532.9,549.9 L530.9,553.4 L531.8,556.7 L531.4,559.0 L530.3,562.7 L531.3,565.4 L529.9,568.4 L529.7,572.8 L530.5,578.0 L532.6,579.9 L533.9,583.7 L535.7,586.6 L535.9,591.3 L537.4,594.3 L540.1,597.7 L540.9,602.0 L541.2,604.6 L540.1,608.2 L541.0,612.0 L542.3,614.6 L544.8,616.8 L547.0,620.5" fill="none" stroke="#000" stroke-width="1"/>
<path d="M343.9,594.5 L536.0,594.5" fill="none" stroke="#000" stroke-width="1"/>
<path d="M343.9,594.5 L343.1,597.9 L341.8,602.0 L341.4,605.6 L343.8,607.8 L345.4,610.6 L349.7,614.8 L351.3,616.7 L354.1,618.7 L356.3,622.2 L358.7,624.0 L359.3,626.6 L358.7,631.0 L357.8,634.1 L355.0,636.0 L356.4,640.6 L357.4,643.7" fill="none" stroke="#000" stroke-width="1"/>
<path d="M547.0,620.0 L549.6,620.6 L552.6,620.1 L555.6,620.0 L559.0,620.8 L562.4,620.9 L565.4,620.8 L567.7,621.5 L571.5,621.3 L573.8,621.4 L577.3,621.6 L580.1,622.0 L583.5,622.0 L586.1,621.7 L589.3,622.0 L592.1,622.0 L595.0,622.9 L598.1,623.3 L601.0,623.1 L603.9,623.4 L607.9,623.4 L610.5,623.5 L613.4,623.7 L616.5,624.1 L619.0,624.3 L622.7,624.2 L626.0,624.8 L628.5,624.5 L631.2,624.4 L634.2,624.8 L637.7,625.4 L641.0,624.8 L644.0,625.3 L646.9,625.7 L649.5,625.7 L652.8,625.6 L655.5,625.9 L659.2,626.7 L661.8,626.2 L665.3,626.5 L667.6,627.3 L671.0,627.2 L674.4,627.2 L677.1,627.4 L680.6,627.6 L682.7,627.9 L685.8,628.2 L689.0,628.2 L692.5,628.2 L695.2,628.8 L698.0,628.9 L701.8,629.5 L704.9,629.0 L708.0,629.3 L710.3,630.0 L713.7,630.1 L716.7,630.6 L719.4,630.1 L723.0,630.6 L725.4,630.6 L729.1,630.9 L731.8,631.4 L734.6,631.5 L737.7,631.8 L740.6,632.1 L744.0,632.0 L744.3,635.1 L745.5,638.8 L746.7,642.6 L747.1,646.4 L748.0,650.0 L751.4,650.2 L754.2,650.0 L757.8,650.6 L758.0,646.9 L759.0,643.7 L759.5,640.8 L759.2,636.8 L760.0,633.9 L759.4,631.2 L759.4,628.3 L759.1,624.7 L758.5,622.2 L757.8,619.0 L759.6,616.0 L761.1,613.6 L762.7,610.5 L766.0,610.6 L769.0,610.5 L772.0,611.9 L775.7,612.9 L778.8,614.0 L782.3,615.3 L785.0,616.0 L787.9,617.3 L791.0,617.9" fill="none" stroke="#000" stroke-width="1"/>
<path d="M679.0,238.5 L702.0,230.6 L727.0,222.0 L741.8,220.0 L806.0,222.5" fill="none" stroke="#000" stroke-width="1"/>
<path d="M679.0,238.5 L677.9,241.2 L675.0,245.0 L671.8,246.7 L669.2,249.0 L666.4,252.3 L664.0,254.0 L662.7,257.5 L662.1,260.0 L660.5,263.9 L662.0,267.0 L664.8,268.0 L667.7,272.0 L670.0,273.7 L673.3,274.8 L674.6,277.2 L678.4,279.0 L680.1,281.7 L682.7,283.6 L687.3,284.3 L690.3,283.9 L693.8,283.6 L695.6,287.0 L698.3,290.0 L700.0,293.4 L702.1,295.5 L704.0,300.2 L703.8,301.8 L706.0,305.8 L706.1,309.4 L707.0,313.0 L709.0,315.7 L711.5,319.2 L713.8,322.3 L714.6,324.3 L717.0,327.9 L720.0,330.9 L722.7,333.1 L724.1,334.6 L727.0,337.8 L729.8,339.4 L734.2,341.1 L736.9,342.7 L738.3,345.7 L740.5,348.4 L742.2,352.5 L745.7,353.7 L746.7,357.5 L748.8,359.6 L751.6,361.3 L754.6,363.1 L756.6,364.9 L759.4,366.8 L761.7,370.7 L764.9,372.7 L766.5,374.7 L765.0,380.0 L766.3,383.5 L769.2,385.8 L771.0,390.0 L772.5,393.3 L775.6,396.9 L776.8,398.8 L778.8,402.0 L782.0,403.7 L784.3,405.5 L787.6,408.0 L791.0,409.6 L793.0,412.2 L796.8,414.4 L798.5,417.0 L799.1,421.1 L800.2,423.4 L801.0,426.8 L801.6,429.5 L803.6,433.8 L804.6,436.7 L806.0,440.0" fill="none" stroke="#000" stroke-width="1"/>
<circle cx="407" cy="407" r="159.5" fill="none" stroke="#c0c0c0" stroke-width="1"/>
<circle cx="407" cy="407" r="279.5" fill="none" stroke="#c0c0c0" stroke-width="1"/>
<circle cx="407" cy="407" r="399.5" fill="none" stroke="#c0c0c0" stroke-width="1"/>
<circle cx="407" cy="407" r="519.5" fill="none" stroke="#c0c0c0" stroke-width="1"/>
<circle cx="407" cy="407" r="39.5" fill="none" stroke="#ff0000" stroke-width="1"/>
<rect x="395.0" y="2.5" width="22" height="11" fill="#5d4f4b"/>
<text x="396.0" y="11.2" font-size="10.5" fill="#ffff8c" textLength="20" lengthAdjust="spacingAndGlyphs">313</text>
<rect x="395.0" y="122.1" width="22" height="11" fill="#5d4f4b"/>
<text x="396.0" y="130.8" font-size="10.5" fill="#ffff8c" textLength="20" lengthAdjust="spacingAndGlyphs">219</text>
<rect x="395.0" y="242.3" width="22" height="11" fill="#5d4f4b"/>
<text x="396.0" y="251.0" font-size="10.5" fill="#ffff8c" textLength="20" lengthAdjust="spacingAndGlyphs">125</text>
<rect x="398.5" y="361.8" width="15" height="11" fill="#5d4f4b"/>
<text x="399.5" y="370.5" font-size="10.5" fill="#ffff8c" textLength="13" lengthAdjust="spacingAndGlyphs">31</text>
<circle cx="608.5" cy="707.5" r="4" fill="none" stroke="#f2f220" stroke-width="1.2"/>
<path d="M606.0,707.5h5M608.5,705.0v5" stroke="#f2f220" stroke-width="1.2" fill="none"/>
<circle cx="622.5" cy="721.4" r="4" fill="none" stroke="#e58a1a" stroke-width="1.2"/>
<path d="M620.0,721.4h5M622.5,718.9v5" stroke="#e58a1a" stroke-width="1.2" fill="none"/>
<circle cx="683.5" cy="752.5" r="4" fill="none" stroke="#f0c81c" stroke-width="1.2"/>
<path d="M681.0,752.5h5" stroke="#f0c81c" stroke-width="1.2" fill="none"/>
<circle cx="675.5" cy="778.5" r="4" fill="none" stroke="#e58a1a" stroke-width="1.2"/>
<path d="M673.0,778.5h5M675.5,776.0v5" stroke="#e58a1a" stroke-width="1.2" fill="none"/>
<circle cx="624.5" cy="791.5" r="4" fill="none" stroke="#f0c81c" stroke-width="1.2"/>
<path d="M622.0,791.5h5" stroke="#f0c81c" stroke-width="1.2" fill="none"/>
<circle cx="719.4" cy="581.4" r="4" fill="none" stroke="#e07a1a" stroke-width="1.2"/>
<path d="M716.9,581.4h5" stroke="#e07a1a" stroke-width="1.2" fill="none"/>
<circle cx="781.3" cy="618.4" r="4" fill="none" stroke="#e58a1a" stroke-width="1.2"/>
<path d="M778.8,618.4h5" stroke="#e58a1a" stroke-width="1.2" fill="none"/>
<circle cx="802.7" cy="567.4" r="4" fill="none" stroke="#f0d020" stroke-width="1.2"/>
<path d="M800.2,567.4h5M802.7,564.9v5" stroke="#f0d020" stroke-width="1.2" fill="none"/>
<path d="M709,776.5h7" stroke="#e58a1a" stroke-width="1.3"/>
<rect x="685" y="792" width="121" height="14" fill="#000"/>
<text x="689.0" y="803.0" font-size="10.2" fill="#fff" textLength="113.4" lengthAdjust="spacingAndGlyphs">©2005 Astrogenic Systems</text>
<rect x="8.5" y="758.5" width="244" height="45" fill="#000" stroke="#000"/>
<rect x="9.5" y="759.5" width="242" height="43" fill="#000" stroke="#8c8c8c"/>
<text x="13.3" y="770.8" font-size="9.5" fill="#f4f4f4" textLength="35.6" lengthAdjust="spacingAndGlyphs">Symbols</text>
<text x="53.3" y="770.8" font-size="9.5" fill="#f4f4f4" textLength="16.9" lengthAdjust="spacingAndGlyphs">-CG</text>
<text x="78.5" y="770.8" font-size="9.5" fill="#f4f4f4" textLength="13.7" lengthAdjust="spacingAndGlyphs">-IC</text>
<text x="99.4" y="770.8" font-size="9.5" fill="#f4f4f4" textLength="19.8" lengthAdjust="spacingAndGlyphs">+CG</text>
<text x="124.7" y="770.8" font-size="9.5" fill="#f4f4f4" textLength="16.5" lengthAdjust="spacingAndGlyphs">+IC</text>
<text x="153.3" y="770.8" font-size="9.5" fill="#f4f4f4" textLength="89.7" lengthAdjust="spacingAndGlyphs">Strike age color codes</text>
<text x="13.3" y="783.6" font-size="9.5" fill="#f4f4f4" textLength="27.4" lengthAdjust="spacingAndGlyphs">Recent</text>
<text x="13.3" y="796.3" font-size="9.5" fill="#f4f4f4" textLength="14.2" lengthAdjust="spacingAndGlyphs">Old</text>
<circle cx="60.3" cy="780.6" r="4" fill="none" stroke="#22e6e6" stroke-width="1.1"/><path d="M57.8,780.6h5" stroke="#22e6e6" stroke-width="1.1"/>
<path d="M82,780.6h7" stroke="#22e6e6" stroke-width="1.2"/>
<circle cx="110.4" cy="780.6" r="4" fill="none" stroke="#22e6e6" stroke-width="1.1"/><path d="M107.9,780.6h5M110.4,778.1v5" stroke="#22e6e6" stroke-width="1.1" fill="none"/>
<path d="M132,780.6h7M135.5,777.1v7" stroke="#22e6e6" stroke-width="1.2" fill="none"/>
<circle cx="60.3" cy="793.5" r="4" fill="none" stroke="#f2f220" stroke-width="1.1"/><path d="M57.8,793.5h5" stroke="#f2f220" stroke-width="1.1"/>
<path d="M82,793.5h7" stroke="#f2f220" stroke-width="1.2"/>
<circle cx="110.4" cy="793.5" r="4" fill="none" stroke="#f2f220" stroke-width="1.1"/><path d="M107.9,793.5h5M110.4,791.0v5" stroke="#f2f220" stroke-width="1.1" fill="none"/>
<path d="M132,793.5h7M135.5,790.0v7" stroke="#f2f220" stroke-width="1.2" fill="none"/>
<text x="153.7" y="783.6" font-size="9.5" fill="#f2f220" textLength="15.6" lengthAdjust="spacingAndGlyphs">15+</text>
<text x="188.9" y="783.6" font-size="9.5" fill="#f0c81c" textLength="15.6" lengthAdjust="spacingAndGlyphs">30+</text>
<text x="223.6" y="783.6" font-size="9.5" fill="#f0a81c" textLength="15.6" lengthAdjust="spacingAndGlyphs">45+</text>
<text x="153.7" y="796.3" font-size="9.5" fill="#e58a1a" textLength="15.6" lengthAdjust="spacingAndGlyphs">60+</text>
<text x="188.9" y="796.3" font-size="9.5" fill="#e56a14" textLength="15.6" lengthAdjust="spacingAndGlyphs">75+</text>
<text x="223.6" y="796.3" font-size="9.5" fill="#e83a10" textLength="15.6" lengthAdjust="spacingAndGlyphs">90+</text>
</g>
<rect x="812.5" y="8.5" width="319" height="318.0" rx="4.5" ry="4.5" fill="#000" stroke="#cfcfcf" stroke-width="1"/>
<rect x="812.5" y="333.5" width="319" height="114.0" rx="4.5" ry="4.5" fill="#000" stroke="#cfcfcf" stroke-width="1"/>
<rect x="812.5" y="453.5" width="319" height="349.0" rx="4.5" ry="4.5" fill="#000" stroke="#cfcfcf" stroke-width="1"/>
<rect x="819.5" y="16.5" width="57" height="17" fill="#5c0000" stroke="#dcdcdc"/>
<text x="825.0" y="30.0" font-size="13" fill="#dcd2d2" font-weight="bold" textLength="47.0" lengthAdjust="spacingAndGlyphs">STRIKE</text>
<rect x="883.5" y="16.5" width="57" height="17" fill="#333" stroke="#c8c8c8"/>
<text x="890.7" y="30.0" font-size="13" fill="#c0c0c0" font-weight="bold" textLength="43.3" lengthAdjust="spacingAndGlyphs">NOISE</text>
<rect x="994.5" y="16.5" width="127" height="17" fill="#363636" stroke="#c8c8c8"/>
<text x="998.8" y="30.0" font-size="13" fill="#fff" font-weight="bold" textLength="61.2" lengthAdjust="spacingAndGlyphs">Bng 148°</text>
<text x="1075.7" y="30.0" font-size="13" fill="#14ee14" font-weight="bold" textLength="42.1" lengthAdjust="spacingAndGlyphs">365mi</text>
<rect x="821.5" y="64.5" width="81.0" height="15" fill="#5a5a5a" stroke="#d0d0d0"/>
<text x="829.6" y="76.8" font-size="12" fill="#f4f4f4" textLength="64.8" lengthAdjust="spacingAndGlyphs">Strikes/min</text>
<rect x="931.5" y="64.5" width="81.0" height="15" fill="#5a5a5a" stroke="#d0d0d0"/>
<text x="943.4" y="76.8" font-size="12" fill="#f4f4f4" textLength="57.4" lengthAdjust="spacingAndGlyphs">Close/min</text>
<rect x="1041.5" y="64.5" width="81.0" height="15" fill="#5a5a5a" stroke="#d0d0d0"/>
<text x="1050.0" y="76.8" font-size="12" fill="#f4f4f4" textLength="62.6" lengthAdjust="spacingAndGlyphs">Noises/min</text>
<text x="882.7" y="111.6" font-size="32" fill="#fff" font-weight="bold" textLength="20.3" lengthAdjust="spacingAndGlyphs">0</text>
<text x="992.9" y="111.6" font-size="32" fill="#fff" font-weight="bold" textLength="20.3" lengthAdjust="spacingAndGlyphs">0</text>
<text x="1102.3" y="111.6" font-size="32" fill="#b8b8b8" font-weight="bold" textLength="20.3" lengthAdjust="spacingAndGlyphs">0</text>
<text x="826.4" y="143.0" font-size="13" fill="#fff" textLength="76.4" lengthAdjust="spacingAndGlyphs">Total Strikes</text>
<text x="880.0" y="161.0" font-size="13" fill="#fff" textLength="22.8" lengthAdjust="spacingAndGlyphs">236</text>
<text x="944.9" y="143.0" font-size="13" fill="#fff" textLength="67.7" lengthAdjust="spacingAndGlyphs">Total Close</text>
<text x="1006.0" y="161.0" font-size="13" fill="#fff" textLength="6.6" lengthAdjust="spacingAndGlyphs">0</text>
<text x="1047.2" y="143.0" font-size="13" fill="#c4c4c4" textLength="74.8" lengthAdjust="spacingAndGlyphs">Total Noises</text>
<text x="1107.7" y="161.0" font-size="13" fill="#c4c4c4" textLength="14.3" lengthAdjust="spacingAndGlyphs">67</text>
<text x="821.0" y="215.0" font-size="13" fill="#b8b8b8" textLength="164.2" lengthAdjust="spacingAndGlyphs">Lightning type distribution</text>
<rect x="821" y="217" width="302.5" height="1" fill="#b0b0b0"/>
<text x="821.0" y="236.6" font-size="13" fill="#fff" font-weight="bold" textLength="84.0" lengthAdjust="spacingAndGlyphs">Cloud-ground</text>
<text x="913.3" y="237.2" font-size="15" fill="#fff" textLength="8.3" lengthAdjust="spacingAndGlyphs">+</text>
<rect x="925.5" y="227.5" width="50" height="10" rx="1.5" fill="#000" stroke="#909090"/><rect x="926.0" y="228.0" width="9.0" height="9" fill="#ff1010"/>
<text x="980.0" y="236.6" font-size="13" fill="#fff" font-weight="bold" textLength="28.3" lengthAdjust="spacingAndGlyphs">19%</text>
<rect x="1016.5" y="231" width="6.5" height="2.2" fill="#d0d0d0"/>
<rect x="1028.5" y="227.5" width="50" height="10" rx="1.5" fill="#000" stroke="#909090"/><rect x="1029.0" y="228.0" width="37.5" height="9" fill="#99ccff"/>
<text x="1082.3" y="236.6" font-size="13" fill="#fff" font-weight="bold" textLength="28.7" lengthAdjust="spacingAndGlyphs">75%</text>
<text x="821.0" y="260.5" font-size="13" fill="#c4c4c4" font-weight="bold" textLength="38.0" lengthAdjust="spacingAndGlyphs">Count</text>
<text x="925.3" y="260.5" font-size="13" fill="#fff" font-weight="bold" textLength="15.2" lengthAdjust="spacingAndGlyphs">45</text>
<text x="1029.0" y="260.5" font-size="13" fill="#fff" font-weight="bold" textLength="22.5" lengthAdjust="spacingAndGlyphs">178</text>
<text x="821.0" y="290.5" font-size="13" fill="#fff" font-weight="bold" textLength="64.0" lengthAdjust="spacingAndGlyphs">Intracloud</text>
<text x="913.3" y="291.1" font-size="15" fill="#fff" textLength="8.3" lengthAdjust="spacingAndGlyphs">+</text>
<rect x="925.5" y="281.5" width="50" height="10" rx="1.5" fill="#000" stroke="#909090"/><rect x="926.0" y="282.0" width="2.1" height="9" fill="#ff69b4"/>
<text x="980.0" y="290.5" font-size="13" fill="#fff" font-weight="bold" textLength="20.0" lengthAdjust="spacingAndGlyphs">3%</text>
<rect x="1016.5" y="285" width="6.5" height="2.2" fill="#d0d0d0"/>
<rect x="1028.5" y="281.5" width="50" height="10" rx="1.5" fill="#000" stroke="#909090"/><rect x="1029.0" y="282.0" width="1.7" height="9" fill="#10d010"/>
<text x="1082.3" y="290.5" font-size="13" fill="#fff" font-weight="bold" textLength="21.1" lengthAdjust="spacingAndGlyphs">2%</text>
<text x="821.0" y="314.4" font-size="13" fill="#c4c4c4" font-weight="bold" textLength="38.0" lengthAdjust="spacingAndGlyphs">Count</text>
<text x="925.3" y="314.4" font-size="13" fill="#fff" font-weight="bold" textLength="7.5" lengthAdjust="spacingAndGlyphs">8</text>
<text x="1029.0" y="314.4" font-size="13" fill="#fff" font-weight="bold" textLength="6.6" lengthAdjust="spacingAndGlyphs">5</text>
<text x="821.5" y="353.0" font-size="17" fill="#14ee14" font-weight="bold" textLength="212.7" lengthAdjust="spacingAndGlyphs">2/22/2026 12:35:02 PM</text>
<rect x="821" y="358.3" width="302" height="1" fill="#a8a8a8"/>
<text x="821.5" y="387.8" font-size="13" fill="#fff" textLength="48.5" lengthAdjust="spacingAndGlyphs">Squelch</text>
<text x="909.4" y="387.8" font-size="13" fill="#fff" textLength="7.2" lengthAdjust="spacingAndGlyphs">0</text>
<text x="981.5" y="387.8" font-size="13" fill="#fff" textLength="43.2" lengthAdjust="spacingAndGlyphs">Upload</text>
<text x="1061.3" y="387.8" font-size="13" fill="#c4c4c4" textLength="53.3" lengthAdjust="spacingAndGlyphs">Disabled</text>
<text x="821.5" y="407.8" font-size="13" fill="#fff" textLength="72.1" lengthAdjust="spacingAndGlyphs">Persistence</text>
<text x="909.4" y="407.8" font-size="13" fill="#fff" textLength="41.2" lengthAdjust="spacingAndGlyphs">90 min</text>
<text x="981.5" y="407.8" font-size="13" fill="#fff" textLength="49.8" lengthAdjust="spacingAndGlyphs">Capture</text>
<text x="1061.3" y="407.8" font-size="13" fill="#14ee14" textLength="36.0" lengthAdjust="spacingAndGlyphs">Active</text>
<text x="821.5" y="427.8" font-size="13" fill="#fff" textLength="39.2" lengthAdjust="spacingAndGlyphs">Range</text>
<text x="909.4" y="427.8" font-size="13" fill="#fff" textLength="41.2" lengthAdjust="spacingAndGlyphs">313 mi</text>
<text x="981.5" y="427.8" font-size="13" fill="#fff" textLength="52.1" lengthAdjust="spacingAndGlyphs">Receiver</text>
<text x="1061.3" y="427.8" font-size="13" fill="#14ee14" textLength="50.4" lengthAdjust="spacingAndGlyphs">Enabled</text>
<text x="821.5" y="474.7" font-size="13" fill="#c4c4c4" textLength="43.3" lengthAdjust="spacingAndGlyphs">Uptime</text>
<text x="909.4" y="474.7" font-size="13" fill="#fff" textLength="43.8" lengthAdjust="spacingAndGlyphs">984:20</text>
<text x="981.5" y="474.7" font-size="13" fill="#c4c4c4" textLength="60.8" lengthAdjust="spacingAndGlyphs">Peak time</text>
<text x="1061.3" y="474.7" font-size="13" fill="#c4c4c4" textLength="23.3" lengthAdjust="spacingAndGlyphs">Plot</text>
<text x="821.5" y="497.7" font-size="13" fill="#c4c4c4" textLength="60.0" lengthAdjust="spacingAndGlyphs">Peak rate</text>
<text x="909.4" y="497.7" font-size="13" fill="#fff" textLength="34.0" lengthAdjust="spacingAndGlyphs">6/min</text>
<text x="981.5" y="497.7" font-size="13" fill="#fff" textLength="49.8" lengthAdjust="spacingAndGlyphs">4:24 AM</text>
<text x="1061.3" y="497.7" font-size="13" fill="#fff" textLength="34.9" lengthAdjust="spacingAndGlyphs">Strike</text>
<text x="822.4" y="527.7" font-size="13" fill="#c4c4c4" textLength="75.8" lengthAdjust="spacingAndGlyphs">Trend graph</text>
<text x="908.8" y="527.7" font-size="13" fill="#fff" textLength="40.7" lengthAdjust="spacingAndGlyphs">60 min</text>
<path d="M1088.5,542.5 V777.5 H822.5" fill="none" stroke="#c8c8c8" stroke-width="1"/>
<path d="M1084.5,738.5 H1088.5" stroke="#c8c8c8" stroke-width="1"/>
<path d="M1084.5,699.5 H1088.5" stroke="#c8c8c8" stroke-width="1"/>
<path d="M1084.5,659.5 H1088.5" stroke="#c8c8c8" stroke-width="1"/>
<path d="M1084.5,620.5 H1088.5" stroke="#c8c8c8" stroke-width="1"/>
<path d="M1084.5,581.5 H1088.5" stroke="#c8c8c8" stroke-width="1"/>
<path d="M1084.5,542.5 H1088.5" stroke="#c8c8c8" stroke-width="1"/>
<path d="M1088.5,774.5 V777.5" stroke="#c8c8c8" stroke-width="1"/>
<path d="M1044.5,774.5 V777.5" stroke="#c8c8c8" stroke-width="1"/>
<path d="M999.5,774.5 V777.5" stroke="#c8c8c8" stroke-width="1"/>
<path d="M955.5,774.5 V777.5" stroke="#c8c8c8" stroke-width="1"/>
<path d="M911.5,774.5 V777.5" stroke="#c8c8c8" stroke-width="1"/>
<path d="M866.5,774.5 V777.5" stroke="#c8c8c8" stroke-width="1"/>
<path d="M822.5,774.5 V777.5" stroke="#c8c8c8" stroke-width="1"/>
<text x="1092.4" y="546.5" font-size="11" fill="#c4c4c4" textLength="13.0" lengthAdjust="spacingAndGlyphs">30</text>
<text x="1092.4" y="624.5" font-size="11" fill="#c4c4c4" textLength="13.0" lengthAdjust="spacingAndGlyphs">20</text>
<text x="1092.4" y="703.0" font-size="11" fill="#c4c4c4" textLength="13.0" lengthAdjust="spacingAndGlyphs">10</text>
<text x="819.8" y="792.6" font-size="11" fill="#c4c4c4" textLength="13.4" lengthAdjust="spacingAndGlyphs">60</text>
<text x="864.0" y="792.6" font-size="11" fill="#c4c4c4" textLength="13.4" lengthAdjust="spacingAndGlyphs">50</text>
<text x="908.0" y="792.6" font-size="11" fill="#c4c4c4" textLength="13.4" lengthAdjust="spacingAndGlyphs">40</text>
<text x="952.8" y="792.6" font-size="11" fill="#c4c4c4" textLength="13.4" lengthAdjust="spacingAndGlyphs">30</text>
<text x="997.0" y="792.6" font-size="11" fill="#c4c4c4" textLength="13.4" lengthAdjust="spacingAndGlyphs">20</text>
<text x="1041.6" y="792.6" font-size="11" fill="#c4c4c4" textLength="13.4" lengthAdjust="spacingAndGlyphs">10</text>
<text x="1087.7" y="792.6" font-size="11" fill="#c4c4c4" textLength="5.7" lengthAdjust="spacingAndGlyphs">0</text>
<text x="1100.0" y="792.6" font-size="11" fill="#c4c4c4" textLength="18.2" lengthAdjust="spacingAndGlyphs">min</text>
<path d="M822.5,777.0 L822.5,762 L823.6,762 L825.4,777.0 M901.6999999999999,777.0 L903.4,769.5 L907.6,769.5 L909.3000000000001,777.0 M911.9,777.0 L913.6,769.5 L918,769.5 L919.7,777.0 M965.5,777.0 L967.2,769.5 L972.2,769.5 L973.9000000000001,777.0 M998.6,777.0 L999.9,762 L1003,762 L1005.2,775.5 L1008.3,762 L1011.3,773 L1013.9,777.0 L1019.5,762 L1024,774.4 L1026.6,769.5 L1029.2,769.5 L1030.7,777.0 L1032.2,769.5 L1035.5,769.5 L1036.8,777.0 M1059.7,777.0 L1061.4,769.5 L1064.6,769.5 L1066.3,777.0 M1070.3,777.0 L1072,769.5 L1075.6,769.5 L1077.3,777.0" fill="none" stroke="#fff" stroke-width="1.1"/>
<path d="M822.9,770 V773.5 M824.5,775 l0.6,1.6" stroke="#20e020" stroke-width="1" fill="none"/>
<path d="M1008.6,770 V777" stroke="#3070ff" stroke-width="1" fill="none"/>
<path d="M1009.6,772.5 L1011,777" stroke="#ff2020" stroke-width="1" fill="none"/>
</svg>
</body></html>
